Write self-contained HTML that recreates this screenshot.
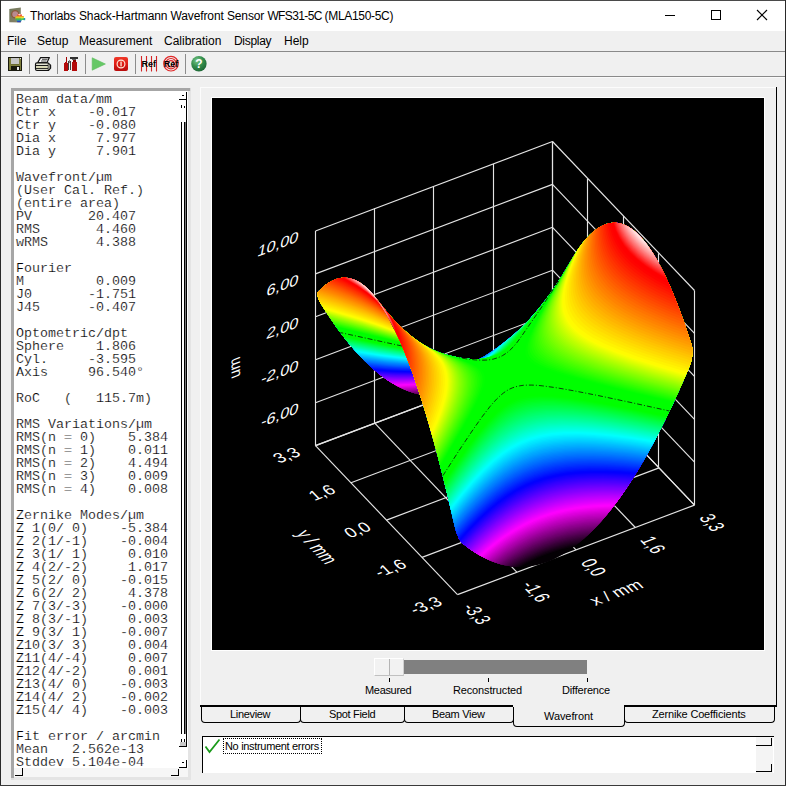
<!DOCTYPE html>
<html><head><meta charset="utf-8"><title>Thorlabs Shack-Hartmann Wavefront Sensor WFS31-5C (MLA150-5C)</title>
<style>
html,body{margin:0;padding:0;}
body{width:786px;height:786px;position:relative;overflow:hidden;background:#f0f0f0;font-family:"Liberation Sans",sans-serif;color:#000;}
.a{position:absolute;}
.k{position:absolute;background:#000;}
#title{left:1px;top:1px;width:784px;height:30px;background:#fff;}
#ttext{left:30px;top:9px;font-size:12px;line-height:14px;letter-spacing:-0.23px;white-space:nowrap;}
.menu{top:34px;font-size:12px;line-height:14px;white-space:nowrap;}
.vsep{position:absolute;top:54px;width:1px;height:20px;background:#8c8c8c;}
#txt{left:16px;top:93px;margin:0;font:13.33px/13px "Liberation Mono",monospace;white-space:pre;color:#000;-webkit-text-stroke:0.2px #fff;}
.lab{position:absolute;font-size:11px;line-height:12px;letter-spacing:-0.32px;white-space:nowrap;color:#000;}
.tab{position:absolute;top:707px;height:16px;border:1px solid #000;border-top:none;border-radius:0 0 4px 4px;box-sizing:border-box;}
</style></head><body>
<!-- window frame -->
<div class="a" style="left:0;top:0;width:786px;height:1px;background:#4a4a4a"></div>
<div class="a" style="left:0;top:0;width:1px;height:786px;background:#2a2a2a"></div>
<div class="a" style="left:785px;top:0;width:1px;height:786px;background:#2a2a2a"></div>
<div class="a" style="left:0;top:785px;width:786px;height:1px;background:#3a3a3a"></div>
<!-- title bar -->
<div id="title" class="a"></div>
<svg class="a" style="left:8px;top:6px" width="18" height="18" viewBox="8 6 18 18">
<defs><linearGradient id="ig" x1="0" y1="0" x2="1" y2="1"><stop offset="0" stop-color="#6f775a"/><stop offset="1" stop-color="#8a8468"/></linearGradient></defs>
<path d="M9.3 9 L20.8 7.4 V22.6 L9.3 22.2 Z" fill="url(#ig)"/>
<circle cx="15.2" cy="14.2" r="3.6" fill="#b98a90" stroke="#8a5a3a" stroke-width="1.3"/>
<ellipse cx="19.5" cy="15.2" rx="2.6" ry="1.2" fill="#f05030"/>
<ellipse cx="19.5" cy="14.6" rx="1.3" ry="0.8" fill="#ffd0c0"/>
<rect x="15.4" y="16" width="8.4" height="1.4" fill="#f0a020"/>
<rect x="15.4" y="17.2" width="8.6" height="1.4" fill="#e8e020"/>
<rect x="15.8" y="18.4" width="8.4" height="1.5" fill="#40c040"/>
<rect x="23.6" y="18" width="1.6" height="2.2" fill="#20a0b0"/>
<rect x="16.6" y="19.8" width="5" height="1.4" fill="#30a0a0"/>
<rect x="17.2" y="20.8" width="3.6" height="1.4" fill="#2840c0"/>
</svg>

<div id="ttext" class="a"><span style="letter-spacing:-0.12px">Thorlabs Shack-Hartmann Wavefront Sensor </span><span style="letter-spacing:-0.61px">WFS31-5C </span><span style="letter-spacing:-0.32px">(MLA150-5C)</span></div>
<svg class="a" style="left:640px;top:1px" width="145" height="30" viewBox="0 0 145 30">
<g stroke="#000" stroke-width="1" fill="none" shape-rendering="crispEdges">
<line x1="25" y1="14.5" x2="35" y2="14.5"/>
<rect x="71.5" y="9.5" width="9" height="9"/>
</g>
<g stroke="#000" stroke-width="1.1" fill="none"><line x1="117" y1="9" x2="127" y2="19"/><line x1="127" y1="9" x2="117" y2="19"/></g>
</svg>
<!-- menu -->
<div class="a menu" style="left:7px">File</div>
<div class="a menu" style="left:37px">Setup</div>
<div class="a menu" style="left:79px">Measurement</div>
<div class="a menu" style="left:164px">Calibration</div>
<div class="a menu" style="left:234px;letter-spacing:-0.3px">Display</div>
<div class="a menu" style="left:284px">Help</div>
<div class="a" style="left:1px;top:51px;width:784px;height:1px;background:#8a8a8a"></div>
<div class="a" style="left:1px;top:76px;width:784px;height:1px;background:#8a8a8a"></div>
<div class="a" style="left:1px;top:77px;width:784px;height:1px;background:#fafafa"></div>
<!-- toolbar -->
<div class="vsep" style="left:29px"></div>
<div class="vsep" style="left:57px"></div>
<div class="vsep" style="left:85px"></div>
<div class="vsep" style="left:135px"></div>
<div class="vsep" style="left:185px"></div>
<svg class="a" style="left:0;top:52px" width="220" height="24" viewBox="0 52 220 24">
<!-- floppy -->
<g shape-rendering="crispEdges">
<rect x="8" y="57" width="14" height="14" fill="#1a1a10"/>
<rect x="9" y="58" width="12" height="12" fill="#7e7e3c"/>
<rect x="11" y="58" width="8" height="6" fill="#c4c4c4"/>
<rect x="11" y="64" width="8" height="1" fill="#6a6a30"/>
<rect x="11" y="66" width="9" height="4" fill="#16160c"/>
<rect x="17" y="67" width="2" height="3" fill="#e8e8e8"/>
<rect x="20" y="58" width="1" height="1" fill="#e8e8e8"/>
</g>
<!-- printer -->
<g stroke="#111" stroke-width="1.15" fill="#fff" stroke-linejoin="round">
<path d="M37.8 62.5 L40.6 57.6 H49.4 L47 62.5 Z"/>
<path d="M42 59.3 L47.6 59.3 M41 61 L46.6 61" fill="none" stroke="#333" stroke-width="0.9"/>
<path d="M36.8 62.8 H48 L50.6 65.2 V68.2 L48.4 70.5 H37 Q35.5 70.5 35.5 69 V64.3 Q35.5 62.8 36.8 62.8 Z" fill="#e4e4d4"/>
<path d="M36 65.5 H48 M36 68.6 H48" fill="none" stroke-width="0.95"/>
<path d="M36.5 67.1 H47.6" stroke="#d0d098" stroke-width="1" fill="none"/>
<path d="M48.2 63 V70.3" fill="none" stroke-width="0.7"/>
<path d="M49.4 64.6 V68.8" fill="none" stroke="#555" stroke-width="0.7"/>
</g>
<!-- tools -->
<g shape-rendering="crispEdges">
<rect x="66" y="57" width="1" height="7" fill="#a00000"/>
<rect x="64" y="63" width="4" height="8" fill="#b40a0a"/>
<rect x="65" y="62" width="2" height="1" fill="#b40a0a"/>
<rect x="72" y="62" width="5" height="9" fill="#b40a0a"/>
<rect x="73" y="60" width="3" height="2" fill="#8a0000"/>
<rect x="70" y="57" width="8" height="2" fill="#303030"/>
<rect x="72" y="59" width="4" height="1" fill="#606060"/>
<rect x="68" y="61" width="1" height="9" fill="#404040"/>
<rect x="70" y="61" width="1" height="9" fill="#404040"/>
<rect x="69" y="60" width="1" height="3" fill="#808080"/>
<rect x="69" y="64" width="1" height="6" fill="#f4f4f4"/>
</g>
<!-- play -->
<path d="M92.2 57.8 L105.4 64 L92.2 70.2 Z" fill="#66c866" stroke="#5cbc5c" stroke-width="0.6"/>
<!-- stop -->
<defs><linearGradient id="rg" x1="0" y1="0" x2="0" y2="1"><stop offset="0" stop-color="#f03a2a"/><stop offset="0.5" stop-color="#de1c14"/><stop offset="1" stop-color="#b80c0c"/></linearGradient>
<radialGradient id="gg" cx="0.38" cy="0.3" r="0.75"><stop offset="0" stop-color="#7cc88c"/><stop offset="0.5" stop-color="#35904e"/><stop offset="1" stop-color="#1c6434"/></radialGradient></defs>
<rect x="114" y="57" width="14" height="14" rx="2" fill="url(#rg)"/>
<circle cx="121" cy="64" r="3.9" fill="none" stroke="#ffe9d8" stroke-width="1.15"/>
<rect x="120.4" y="61.6" width="1.3" height="4.8" fill="#ffe9d8"/>
<!-- Ref lines -->
<g stroke="#d42424" stroke-width="1.1"><line x1="141.5" y1="56" x2="141.5" y2="71.5"/><line x1="146.5" y1="56" x2="146.5" y2="71.5"/><line x1="151.5" y1="56" x2="151.5" y2="71.5"/><line x1="156.5" y1="56" x2="156.5" y2="71.5"/></g>
<text x="141.6" y="66.8" font-family="Liberation Sans, sans-serif" font-weight="bold" font-size="9" fill="#000">Ref</text>
<!-- Ref target -->
<g fill="none" stroke="#e02828" stroke-width="1.2"><circle cx="171" cy="63.7" r="7.3"/><circle cx="171" cy="63.7" r="5.2"/><circle cx="171" cy="63.7" r="3.1"/></g>
<text x="163.8" y="66.8" font-family="Liberation Sans, sans-serif" font-weight="bold" font-size="9" fill="#000">Ref</text>
<!-- help -->
<circle cx="198.9" cy="63.8" r="7.7" fill="url(#gg)"/>
<text x="198.9" y="68.2" text-anchor="middle" font-family="Liberation Sans, sans-serif" font-weight="bold" font-size="12" fill="#fff">?</text>
</svg>

<!-- left text panel -->
<div class="a" style="left:11px;top:88px;width:180px;height:692px;background:#dcdcdc"></div>
<div class="a" style="left:11px;top:88px;width:179px;height:690px;background:#a6a6a6"></div>
<div class="a" style="left:14px;top:91px;width:177px;height:689px;background:#e4e4e4"></div>
<div class="a" style="left:14px;top:91px;width:174px;height:686px;background:#fff"></div>
<div class="a" style="left:14px;top:768px;width:174px;height:9px;background:#f6f6f6"></div>
<pre id="txt" class="a">Beam data/mm
Ctr x    -0.017
Ctr y    -0.080
Dia x     7.977
Dia y     7.901

Wavefront/µm
(User Cal. Ref.)
(entire area)
PV       20.407
RMS       4.460
wRMS      4.388

Fourier
M         0.009
J0       -1.751
J45      -0.407

Optometric/dpt
Sphere    1.806
Cyl.     -3.595
Axis     96.540°

RoC   (   115.7m)

RMS Variations/µm
RMS(n = 0)    5.384
RMS(n = 1)    0.011
RMS(n = 2)    4.494
RMS(n = 3)    0.009
RMS(n = 4)    0.008

Zernike Modes/µm
Z 1(0/ 0)    -5.384
Z 2(1/-1)    -0.004
Z 3(1/ 1)     0.010
Z 4(2/-2)     1.017
Z 5(2/ 0)    -0.015
Z 6(2/ 2)     4.378
Z 7(3/-3)    -0.000
Z 8(3/-1)     0.003
Z 9(3/ 1)    -0.007
Z10(3/ 3)     0.004
Z11(4/-4)     0.007
Z12(4/-2)     0.001
Z13(4/ 0)    -0.003
Z14(4/ 2)    -0.002
Z15(4/ 4)    -0.003

Fit error / arcmin
Mean   2.562e-13
Stddev 5.104e-04</pre>
<!-- scrollbar fragments -->
<div class="k" style="left:186px;top:92px;width:1px;height:655px"></div>
<div class="k" style="left:179px;top:99px;width:8px;height:1px"></div>
<div class="k" style="left:182px;top:95px;width:2px;height:1px"></div>
<div class="k" style="left:181px;top:105px;width:1px;height:3px"></div>
<div class="k" style="left:184px;top:106px;width:1px;height:2px"></div>
<div class="k" style="left:181px;top:122px;width:1px;height:612px"></div>
<div class="k" style="left:184px;top:122px;width:1px;height:612px"></div><div class="a" style="left:185px;top:122px;width:1px;height:612px;background:#777"></div>
<div class="k" style="left:181px;top:739px;width:1px;height:3px"></div>
<div class="k" style="left:184px;top:739px;width:1px;height:3px"></div>
<div class="a" style="left:180px;top:742px;width:6px;height:4px;background:#c8c8c8"></div>
<div class="k" style="left:179px;top:746px;width:8px;height:1px"></div>
<div class="k" style="left:186px;top:760px;width:1px;height:8px"></div>
<div class="k" style="left:179px;top:767px;width:8px;height:1px"></div>
<div class="k" style="left:182px;top:762px;width:2px;height:1px"></div>
<div class="k" style="left:178px;top:769px;width:1px;height:7px"></div>
<div class="k" style="left:171px;top:775px;width:8px;height:1px"></div>
<div class="k" style="left:22px;top:768px;width:1px;height:8px"></div>
<div class="k" style="left:15px;top:775px;width:8px;height:1px"></div>
<!-- tab control -->
<div class="a" style="left:200px;top:87px;width:577px;height:1px;background:#fcfcfc"></div>
<div class="a" style="left:200px;top:87px;width:1px;height:619px;background:#fcfcfc"></div>
<div class="k" style="left:776px;top:87px;width:1px;height:620px"></div>
<div class="a" style="left:211px;top:97px;width:554px;height:554px;background:#fff"></div>
<svg width="552" height="552" viewBox="0 0 552 552" style="position:absolute;left:212px;top:98px;background:#000">
<g stroke="#e4e4e4" stroke-width="1.15" fill="none"><line x1="103.5" y1="347.6" x2="103.5" y2="133.0"/><line x1="482.5" y1="407.1" x2="482.5" y2="192.5"/><line x1="245.5" y1="496.6" x2="103.5" y2="347.6"/><line x1="245.5" y1="496.6" x2="482.5" y2="407.1"/><line x1="162.5" y1="325.2" x2="162.5" y2="110.6"/><line x1="446.5" y1="369.9" x2="446.5" y2="155.3"/><line x1="304.8" y1="474.2" x2="162.7" y2="325.2"/><line x1="210.0" y1="459.4" x2="447.0" y2="369.9"/><line x1="221.5" y1="302.8" x2="221.5" y2="88.2"/><line x1="411.5" y1="332.6" x2="411.5" y2="118.0"/><line x1="364.0" y1="451.9" x2="222.0" y2="302.8"/><line x1="174.5" y1="422.1" x2="411.5" y2="332.6"/><line x1="281.5" y1="280.5" x2="281.5" y2="65.9"/><line x1="375.5" y1="295.3" x2="375.5" y2="80.7"/><line x1="423.3" y1="429.5" x2="281.2" y2="280.5"/><line x1="139.0" y1="384.8" x2="376.0" y2="295.3"/><line x1="340.5" y1="258.1" x2="340.5" y2="43.5"/><line x1="340.5" y1="258.1" x2="340.5" y2="43.5"/><line x1="482.5" y1="407.1" x2="340.5" y2="258.1"/><line x1="103.5" y1="347.6" x2="340.5" y2="258.1"/><line x1="103.5" y1="347.6" x2="340.5" y2="258.1"/><line x1="340.5" y1="258.1" x2="482.5" y2="407.1"/><line x1="103.5" y1="304.7" x2="340.5" y2="215.2"/><line x1="340.5" y1="215.2" x2="482.5" y2="364.2"/><line x1="103.5" y1="261.7" x2="340.5" y2="172.2"/><line x1="340.5" y1="172.2" x2="482.5" y2="321.3"/><line x1="103.5" y1="218.8" x2="340.5" y2="129.3"/><line x1="340.5" y1="129.3" x2="482.5" y2="278.4"/><line x1="103.5" y1="175.9" x2="340.5" y2="86.4"/><line x1="340.5" y1="86.4" x2="482.5" y2="235.4"/><line x1="103.5" y1="133.0" x2="340.5" y2="43.5"/><line x1="340.5" y1="43.5" x2="482.5" y2="192.5"/></g>
<g transform="scale(0.1)">
<path fill="#040004" d="M1063 1936l-6 10l-1 8l1 26l14 44l22 38l64 101l107 155l97 125l97 113l96 99l97 87l86 65l86 56l85 45l86 34l86 24l86 14l86 4l75-6l86-16l86-26l86-37l86-47l86-58l86-68l85-78l76-77l96-111l86-109l86-120l86-130l54-100l98-218l45-90l38-70l-107 178l-105 157l-104 138l-106 123l-55 58l-54 51l-125 106l-74 57l-68 48l-62 40l-57 32l-67 2l-73-6l-87-14l-88-20l-70-22l-67-26l-65-31l-63-37l-61-42l-60-47l-60-53l-59-56l-94-103l-57-70l-85-109l-64-69l-32-28l-32-24l-32-20l-32-16l-45-15l-44-7l-52 2l-45 11l-44 19l-45 27l-45 35z"/>
<path fill="#0c000c" d="M2676 2611l-67 2l-73-6l-87-14l-88-20l-70-22l-67-26l-65-31l-63-37l-61-42l-60-47l-60-53l-59-56l-94-103l-57-70l-87-111l-62-67l-32-29l-33-24l-34-21l-32-15l-48-15l-47-6l-45 3l-48 12l-49 22l-47 31l-54 46l-24 24l-6 10l-2 15l2 19l5 22l20 42l86 135l90 130l86 113l90 107l86 93l90 85l75 62l79 57l75 46l79 40l79 31l76 22l79 14l78 5l120-29l113-35l111-42l106-48l101-54l85-70l83-78l100-108l101-122l100-136l97-144l38-64l27-53l98-218l41-82l42-78l-107 178l-105 157l-104 138l-106 123l-55 58l-54 51l-125 106l-74 57l-68 48l-62 40z"/>
<path fill="#140014" d="M2676 2611l-67 2l-73-6l-87-14l-88-20l-70-22l-67-26l-65-31l-63-37l-61-42l-60-47l-60-53l-59-56l-94-103l-57-70l-87-111l-62-67l-32-29l-33-24l-34-21l-32-15l-48-15l-47-6l-45 3l-48 12l-49 22l-47 31l-54 46l-24 24l-6 10l-2 15l2 19l5 22l20 42l82 130l87 125l86 114l86 104l86 94l90 86l75 64l76 55l75 48l79 42l75 31l79 24l76 15l75 7l116-26l115-33l109-40l103-45l76-38l74-42l68-56l68-64l100-106l101-121l100-134l101-149l31-50l28-52l25-50l88-199l41-81l40-74l-107 178l-105 157l-104 138l-106 123l-55 58l-54 51l-125 106l-74 57l-68 48l-62 40z"/>
<path fill="#1c001c" d="M2676 2611l-67 2l-73-6l-87-14l-88-20l-70-22l-67-26l-65-31l-63-37l-61-42l-60-47l-60-53l-59-56l-94-103l-57-70l-87-111l-62-67l-32-29l-33-24l-34-21l-32-15l-48-15l-47-6l-45 3l-48 12l-49 22l-47 31l-54 46l-24 24l-6 10l-2 15l2 19l5 22l20 42l82 130l79 115l87 115l86 105l86 94l86 84l75 65l76 57l75 49l76 41l75 33l75 25l76 16l74 9l113-24l114-32l106-36l102-42l99-49l98-55l105-95l104-108l101-120l100-133l101-148l38-61l28-52l25-50l88-199l41-81l40-74l-107 178l-105 157l-104 138l-106 123l-55 58l-54 51l-125 106l-74 57l-68 48l-62 40z"/>
<path fill="#240024" d="M2676 2611l-67 2l-73-6l-87-14l-88-20l-70-22l-67-26l-65-31l-63-37l-61-42l-60-47l-60-53l-59-56l-94-103l-57-70l-87-111l-62-67l-32-29l-33-24l-34-21l-32-15l-48-15l-47-6l-45 3l-48 12l-49 22l-47 31l-54 46l-24 24l-6 10l-2 15l2 19l5 22l20 42l75 119l79 116l83 111l86 106l86 96l86 85l72 63l75 59l76 50l75 43l72 33l75 26l76 19l74 11l112-23l109-29l104-34l99-39l118-56l118-66l27-22l57-52l104-107l101-118l104-137l101-147l45-72l28-52l25-50l88-199l41-81l40-74l-107 178l-105 157l-104 138l-106 123l-55 58l-54 51l-125 106l-74 57l-68 48l-62 40z"/>
<path fill="#2c002c" d="M2676 2611l-67 2l-73-6l-87-14l-88-20l-70-22l-67-26l-65-31l-63-37l-61-42l-60-47l-60-53l-59-56l-94-103l-57-70l-87-111l-62-67l-32-29l-33-24l-34-21l-32-15l-48-15l-47-6l-45 3l-48 12l-49 22l-47 31l-54 46l-24 24l-6 10l-2 15l2 19l5 22l14 32l70 113l83 121l83 113l86 107l82 93l86 86l72 64l76 60l71 49l76 44l72 35l75 28l72 19l74 13l113-22l103-26l101-31l100-38l110-49l106-57l70-43l49-43l104-106l104-120l104-136l100-146l53-83l28-52l25-50l88-199l41-81l40-74l-107 178l-105 157l-104 138l-106 123l-55 58l-54 51l-125 106l-74 57l-68 48l-62 40z"/>
<path fill="#340034" d="M2676 2611l-67 2l-73-6l-87-14l-88-20l-70-22l-67-26l-65-31l-63-37l-61-42l-60-47l-60-53l-59-56l-94-103l-57-70l-87-111l-62-67l-32-29l-33-24l-34-21l-32-15l-48-15l-47-6l-45 3l-48 12l-49 22l-47 31l-54 46l-24 24l-6 10l-2 15l2 19l14 44l65 106l89 133l83 113l83 103l82 94l86 87l72 65l72 58l72 50l75 45l72 36l72 28l71 21l73 14l111-21l104-24l99-30l98-35l100-44l99-50l125-74l24-22l104-105l105-120l104-135l104-150l56-88l28-52l25-50l88-199l41-81l40-74l-107 178l-105 157l-104 138l-106 123l-55 58l-54 51l-125 106l-74 57l-68 48l-62 40z"/>
<path fill="#3c003c" d="M2676 2611l-67 2l-73-6l-87-14l-88-20l-70-22l-67-26l-65-31l-63-37l-61-42l-60-47l-60-53l-59-56l-94-103l-57-70l-87-111l-62-67l-32-29l-33-24l-34-21l-32-15l-48-15l-47-6l-45 3l-48 12l-49 22l-47 31l-54 46l-24 24l-6 10l-2 15l2 19l14 44l61 100l90 134l82 113l83 104l83 94l82 84l68 63l72 59l72 51l72 44l72 37l71 30l72 22l71 15l105-18l105-24l100-28l95-33l95-39l91-44l89-49l88-55l105-104l104-119l108-139l104-149l53-83l35-63l25-50l88-199l41-81l40-74l-107 178l-105 157l-104 138l-106 123l-55 58l-54 51l-125 106l-74 57l-68 48l-62 40z"/>
<path fill="#440044" d="M2676 2611l-67 2l-73-6l-87-14l-88-20l-70-22l-67-26l-65-31l-63-37l-61-42l-60-47l-60-53l-59-56l-94-103l-57-70l-87-111l-62-67l-32-29l-33-24l-34-21l-32-15l-48-15l-47-6l-45 3l-48 12l-49 22l-47 31l-54 46l-24 24l-6 10l-2 15l2 19l14 44l57 95l87 129l79 109l82 105l83 95l82 86l69 64l71 59l72 53l72 45l68 36l72 32l72 24l70 16l111-19l105-23l104-29l100-34l98-40l94-46l92-51l94-60l101-102l104-120l104-135l104-151l53-83l28-52l25-50l88-199l41-81l40-74l-107 178l-105 157l-104 138l-106 123l-55 58l-54 51l-125 106l-74 57l-68 48l-62 40z"/>
<path fill="#4c004c" d="M2676 2611l-67 2l-73-6l-87-14l-88-20l-70-22l-67-26l-65-31l-63-37l-61-42l-60-47l-60-53l-59-56l-94-103l-57-70l-87-111l-62-67l-32-29l-33-24l-34-21l-32-15l-48-15l-47-6l-45 3l-48 12l-49 22l-47 31l-54 46l-24 24l-6 10l-2 15l2 19l14 44l54 89l82 125l79 110l83 105l83 96l82 87l68 64l72 61l68 50l72 47l68 37l72 32l68 24l70 18l117-19l109-23l109-30l103-35l101-42l97-48l95-53l97-63l100-103l105-123l104-137l100-148l42-66l28-52l25-50l88-199l41-81l40-74l-107 178l-105 157l-104 138l-106 123l-55 58l-54 51l-125 106l-74 57l-68 48l-62 40z"/>
<path fill="#540054" d="M2676 2611l-67 2l-73-6l-87-14l-88-20l-70-22l-67-26l-65-31l-63-37l-61-42l-60-47l-60-53l-59-56l-94-103l-57-70l-87-111l-62-67l-32-29l-33-24l-34-21l-32-15l-48-15l-47-6l-45 3l-48 12l-49 22l-47 31l-54 46l-24 24l-6 10l-2 15l2 19l14 44l50 84l83 124l79 111l82 106l79 92l83 88l68 65l68 58l69 52l71 47l69 39l68 32l68 25l70 19l123-19l112-24l114-31l106-36l104-43l100-50l98-56l99-64l101-106l100-120l101-134l100-149l35-55l28-52l25-50l88-199l41-81l40-74l-107 178l-105 157l-104 138l-106 123l-55 58l-54 51l-125 106l-74 57l-68 48l-62 40z"/>
<path fill="#5c005c" d="M2676 2611l-67 2l-73-6l-87-14l-88-20l-70-22l-67-26l-65-31l-63-37l-61-42l-60-47l-60-53l-59-56l-94-103l-57-70l-87-111l-62-67l-32-29l-33-24l-34-21l-32-15l-48-15l-47-6l-45 3l-48 12l-49 22l-47 31l-54 46l-24 24l-6 10l-2 15l2 19l14 44l57 95l83 124l79 109l83 106l82 95l83 86l72 68l71 59l72 53l72 45l75 40l79 33l85 26l24-3l125-20l114-24l109-31l107-37l104-44l101-50l99-58l101-67l98-105l100-121l101-136l97-144l27-44l41-78l98-218l41-82l42-78l-107 178l-105 157l-104 138l-106 123l-55 58l-54 51l-125 106l-74 57l-68 48l-62 40z"/>
<path fill="#640064" d="M2676 2611l-67 2l-73-6l-87-14l-88-20l-70-22l-67-26l-65-31l-63-37l-61-42l-60-47l-60-53l-59-56l-94-103l-57-70l-87-111l-62-67l-32-29l-33-24l-34-21l-32-15l-48-15l-47-6l-45 3l-48 12l-49 22l-47 31l-54 46l-24 24l-6 10l-2 15l2 19l14 44l57 95l87 129l79 109l82 105l83 95l82 86l72 67l72 59l72 52l75 47l79 41l83 33l57 17l36-4l123-19l117-25l112-31l110-38l108-46l102-52l100-59l102-69l99-108l97-119l100-137l97-146l31-52l27-53l98-218l41-82l42-78l-107 178l-105 157l-104 138l-106 123l-55 58l-54 51l-125 106l-74 57l-68 48l-62 40z"/>
<path fill="#6c006c" d="M2676 2611l-67 2l-73-6l-87-14l-88-20l-70-22l-67-26l-65-31l-63-37l-61-42l-60-47l-60-53l-59-56l-94-103l-57-70l-87-111l-62-67l-32-29l-33-24l-34-21l-32-15l-48-15l-47-6l-45 3l-48 12l-49 22l-47 31l-54 46l-24 24l-6 10l-2 15l2 19l14 44l61 100l86 129l83 114l82 104l83 94l83 85l71 66l76 61l75 54l75 45l90 44l90 32l12 4l56-7l127-20l116-25l113-32l109-39l107-46l102-52l102-62l104-71l93-102l97-120l97-133l97-146l54-100l98-218l41-82l42-78l-107 178l-105 157l-104 138l-106 123l-55 58l-54 51l-125 106l-74 57l-68 48l-62 40z"/>
<path fill="#740074" d="M2676 2611l-67 2l-73-6l-87-14l-88-20l-70-22l-67-26l-65-31l-63-37l-61-42l-60-47l-60-53l-59-56l-94-103l-57-70l-87-111l-62-67l-32-29l-33-24l-34-21l-32-15l-48-15l-47-6l-45 3l-48 12l-49 22l-47 31l-54 46l-24 24l-6 10l-2 15l2 19l14 44l61 100l90 134l82 113l83 104l83 94l82 84l75 69l76 61l75 53l79 46l83 40l85 30l70-8l124-19l122-26l116-33l109-39l107-47l107-56l102-62l104-73l92-102l93-117l94-128l93-141l54-100l98-218l41-82l42-78l-107 178l-105 157l-104 138l-106 123l-55 58l-54 51l-125 106l-74 57l-68 48l-62 40z"/>
<path fill="#7c007c" d="M2676 2611l-67 2l-73-6l-87-14l-88-20l-70-22l-67-26l-65-31l-63-37l-61-42l-60-47l-60-53l-59-56l-94-103l-57-70l-87-111l-62-67l-32-29l-33-24l-34-21l-32-15l-48-15l-47-6l-45 3l-48 12l-49 22l-47 31l-54 46l-24 24l-6 10l-2 15l2 19l14 44l65 106l89 133l83 113l83 103l82 94l86 87l76 68l79 63l79 54l79 45l71 33l70 25l87-9l127-20l120-26l116-33l113-41l106-48l107-56l105-65l105-74l90-102l89-113l90-125l90-135l54-100l98-218l41-82l42-78l-107 178l-105 157l-104 138l-106 123l-55 58l-54 51l-125 106l-74 57l-68 48l-62 40z"/>
<path fill="#830083" d="M2676 2611l-67 2l-73-6l-87-14l-88-20l-70-22l-67-26l-65-31l-63-37l-61-42l-60-47l-60-53l-59-56l-94-103l-57-70l-87-111l-62-67l-32-29l-33-24l-34-21l-32-15l-48-15l-47-6l-45 3l-48 12l-49 22l-47 31l-54 46l-24 24l-6 10l-2 15l2 19l5 22l14 32l70 113l83 121l83 113l86 107l82 93l86 86l79 70l79 62l79 52l83 46l57 26l58 22l102-11l131-21l121-27l115-33l112-41l110-49l106-57l107-67l105-76l89-102l87-110l86-120l86-130l54-100l98-218l41-82l42-78l-107 178l-105 157l-104 138l-106 123l-55 58l-54 51l-125 106l-74 57l-68 48l-62 40z"/>
<path fill="#8b008b" d="M2676 2611l-67 2l-73-6l-87-14l-88-20l-70-22l-67-26l-65-31l-63-37l-61-42l-60-47l-60-53l-59-56l-94-103l-57-70l-87-111l-62-67l-32-29l-33-24l-34-21l-32-15l-48-15l-47-6l-45 3l-48 12l-49 22l-47 31l-54 46l-24 24l-6 10l-2 15l2 19l5 22l20 42l75 119l76 111l82 112l86 106l83 92l86 87l79 69l83 64l82 54l83 44l93 39l116-12l133-21l123-28l119-35l111-41l109-50l108-58l108-69l105-76l85-99l82-105l86-121l83-125l54-100l98-218l41-82l42-78l-107 178l-105 157l-104 138l-106 123l-55 58l-54 51l-125 106l-74 57l-68 48l-62 40z"/>
<path fill="#930093" d="M2676 2611l-67 2l-73-6l-87-14l-88-20l-70-22l-67-26l-65-31l-63-37l-61-42l-60-47l-60-53l-59-56l-94-103l-57-70l-87-111l-62-67l-32-29l-33-24l-34-21l-32-15l-48-15l-47-6l-45 3l-48 12l-49 22l-47 31l-54 46l-24 24l-6 10l-2 15l2 19l5 22l20 42l75 119l79 116l83 111l86 106l86 96l86 85l83 72l82 62l83 53l86 45l67 28l133-14l130-20l125-28l118-35l115-43l112-51l109-60l105-69l109-79l80-94l82-107l83-116l79-120l54-100l98-218l41-82l42-78l-107 178l-105 157l-104 138l-106 123l-55 58l-54 51l-125 106l-74 57l-68 48l-62 40z"/>
<path fill="#9b009b" d="M2676 2611l-67 2l-73-6l-87-14l-88-20l-70-22l-67-26l-65-31l-63-37l-61-42l-60-47l-60-53l-59-56l-94-103l-57-70l-87-111l-62-67l-32-29l-33-24l-34-21l-32-15l-48-15l-47-6l-45 3l-48 12l-49 22l-47 31l-54 46l-24 24l-6 10l-2 15l2 19l5 22l20 42l82 130l79 115l83 110l86 106l86 95l86 84l83 71l86 64l86 53l86 43l42 17l149-14l131-21l126-28l121-36l115-44l110-52l110-61l107-70l109-81l76-90l79-103l79-111l79-120l54-100l98-218l41-82l42-78l-107 178l-105 157l-104 138l-106 123l-55 58l-54 51l-125 106l-74 57l-68 48l-62 40z"/>
<path fill="#a300a3" d="M2676 2611l-67 2l-73-6l-87-14l-88-20l-70-22l-67-26l-65-31l-63-37l-61-42l-60-47l-60-53l-59-56l-94-103l-57-70l-87-111l-62-67l-32-29l-33-24l-34-21l-32-15l-48-15l-47-6l-45 3l-48 12l-49 22l-47 31l-54 46l-24 24l-6 10l-2 15l2 19l5 22l20 42l82 130l83 120l86 115l86 104l86 94l87 83l86 74l86 62l86 52l86 42l20 8l163-15l136-22l125-28l121-37l114-44l111-52l111-63l108-71l111-83l76-92l79-104l79-112l74-115l48-89l66-149l43-92l72-137l-107 178l-105 157l-104 138l-106 123l-55 58l-54 51l-125 106l-74 57l-68 48l-62 40z"/>
<path fill="#ab00ab" d="M2676 2611l-67 2l-73-6l-87-14l-88-20l-70-22l-67-26l-65-31l-63-37l-61-42l-60-47l-60-53l-59-56l-94-103l-57-70l-87-111l-62-67l-32-29l-33-24l-34-21l-32-15l-48-15l-47-6l-45 3l-48 12l-49 22l-47 31l-54 46l-24 24l-6 10l-2 15l2 19l5 22l20 42l82 130l87 125l86 114l86 104l86 94l86 83l86 72l90 65l86 51l88 42l92-7l86-9l132-21l128-29l121-37l118-45l114-55l110-63l109-73l111-85l76-92l79-105l79-114l71-110l53-102l49-115l46-97l74-142l-107 178l-105 157l-104 138l-106 123l-55 58l-54 51l-125 106l-74 57l-68 48l-62 40z"/>
<path fill="#b300b3" d="M2676 2611l-67 2l-73-6l-87-14l-88-20l-70-22l-67-26l-65-31l-63-37l-61-42l-60-47l-60-53l-59-56l-94-103l-57-70l-87-111l-62-67l-32-29l-33-24l-34-21l-32-15l-48-15l-47-6l-45 3l-48 12l-49 22l-47 31l-54 46l-24 24l-6 10l-2 15l2 19l5 22l20 42l86 135l86 125l86 114l86 103l87 93l89 86l83 69l83 60l82 49l85 41l100-7l91-10l135-21l130-30l120-36l117-46l114-55l114-66l109-74l112-86l73-90l75-100l75-109l71-110l53-102l49-115l46-97l74-142l-107 178l-105 157l-104 138l-106 123l-55 58l-54 51l-125 106l-74 57l-68 48l-62 40z"/>
<path fill="#bb00bb" d="M2676 2611l-67 2l-73-6l-87-14l-88-20l-70-22l-67-26l-65-31l-63-37l-61-42l-60-47l-60-53l-59-56l-94-103l-57-70l-87-111l-62-67l-32-29l-33-24l-34-21l-32-15l-48-15l-47-6l-45 3l-48 12l-49 22l-47 31l-54 46l-24 24l-6 10l-2 15l2 19l5 22l20 42l86 135l90 130l86 113l90 107l86 93l90 85l79 65l79 57l78 47l78 39l109-7l100-11l136-22l128-29l124-39l117-46l113-56l113-66l113-76l110-87l73-92l72-96l76-110l63-99l53-102l49-115l46-97l74-142l-107 178l-105 157l-104 138l-106 123l-55 58l-54 51l-125 106l-74 57l-68 48l-62 40z"/>
<path fill="#c300c3" d="M2676 2611l-67 2l-73-6l-87-14l-88-20l-70-22l-67-26l-65-31l-63-37l-61-42l-60-47l-60-53l-59-56l-94-103l-57-70l-87-111l-62-67l-32-29l-33-24l-34-21l-32-15l-48-15l-47-6l-45 3l-48 12l-49 22l-47 31l-54 46l-24 24l-6 10l-2 15l2 19l5 22l20 42l90 141l89 129l86 113l90 106l86 92l90 85l76 62l75 54l75 46l75 38l111-7l108-11l139-22l127-29l122-38l120-48l117-57l112-66l115-79l112-89l71-89l68-92l72-105l63-99l53-102l49-115l46-97l74-142l-107 178l-105 157l-104 138l-106 123l-55 58l-54 51l-125 106l-74 57l-68 48l-62 40z"/>
<path fill="#cb00cb" d="M2676 2611l-67 2l-73-6l-87-14l-88-20l-70-22l-67-26l-65-31l-63-37l-61-42l-60-47l-60-53l-59-56l-94-103l-57-70l-87-111l-62-67l-32-29l-33-24l-34-21l-32-15l-48-15l-47-6l-45 3l-48 12l-49 22l-47 31l-54 46l-24 24l-6 10l-2 15l2 19l5 22l20 42l90 141l93 134l86 112l90 106l90 95l89 84l72 59l72 51l72 44l68 36l126-8l113-12l140-22l128-30l124-40l116-47l116-58l115-68l111-78l114-92l68-85l68-94l68-99l60-94l53-102l49-115l46-97l74-142l-107 178l-105 157l-104 138l-106 123l-55 58l-54 51l-125 106l-74 57l-68 48l-62 40z"/>
<path fill="#d300d3" d="M2676 2611l-67 2l-73-6l-87-14l-88-20l-70-22l-67-26l-65-31l-63-37l-61-42l-60-47l-60-53l-59-56l-94-103l-57-70l-87-111l-62-67l-32-29l-33-24l-34-21l-32-15l-48-15l-47-6l-45 3l-48 12l-49 22l-47 31l-54 46l-24 24l-6 10l-2 15l2 19l5 22l20 42l93 146l93 133l87 113l89 105l90 95l90 83l68 56l68 49l69 42l65 35l129-7l120-12l140-23l131-30l124-40l120-48l115-59l115-69l116-82l113-92l65-83l65-89l68-100l56-88l53-102l49-115l46-97l74-142l-107 178l-105 157l-104 138l-106 123l-55 58l-54 51l-125 106l-74 57l-68 48l-62 40z"/>
<path fill="#db00db" d="M2676 2611l-67 2l-73-6l-87-14l-88-20l-70-22l-67-26l-65-31l-63-37l-61-42l-60-47l-60-53l-59-56l-94-103l-57-70l-87-111l-62-67l-32-29l-33-24l-34-21l-32-15l-48-15l-47-6l-45 3l-48 12l-49 22l-47 31l-54 46l-24 24l-6 10l-2 15l2 19l5 22l20 42l93 146l97 138l90 117l90 104l89 94l90 82l61 50l65 46l64 41l64 34l136-7l128-13l143-23l129-30l124-40l119-49l116-59l117-71l113-81l117-96l62-80l61-85l65-95l56-88l53-102l49-115l46-97l74-142l-107 178l-105 157l-104 138l-106 123l-55 58l-54 51l-125 106l-74 57l-68 48l-62 40z"/>
<path fill="#e300e3" d="M2676 2611l-67 2l-73-6l-87-14l-88-20l-70-22l-67-26l-65-31l-63-37l-61-42l-60-47l-60-53l-59-56l-94-103l-57-70l-87-111l-62-67l-32-29l-33-24l-34-21l-32-15l-48-15l-47-6l-45 3l-48 12l-49 22l-47 31l-54 46l-24 24l-6 10l-2 15l2 19l5 22l20 42l97 151l97 138l89 116l90 104l90 94l93 84l58 46l61 44l61 39l57 32l145-7l134-14l139-22l128-30l123-40l120-49l115-58l115-70l116-82l114-94l12-11l14-17l86-115l72-105l63-99l53-102l49-115l46-97l74-142l-107 178l-105 157l-104 138l-106 123l-55 58l-54 51l-125 106l-74 57l-68 48l-62 40z"/>
<path fill="#eb00eb" d="M2676 2611l-67 2l-73-6l-87-14l-88-20l-70-22l-67-26l-65-31l-63-37l-61-42l-60-47l-60-53l-59-56l-94-103l-57-70l-87-111l-62-67l-32-29l-33-24l-34-21l-32-15l-48-15l-47-6l-45 3l-48 12l-49 22l-47 31l-54 46l-24 24l-6 10l-2 15l2 19l5 22l20 42l97 151l100 143l90 115l90 104l90 93l93 84l54 43l57 42l58 37l55 31l147-7l142-14l142-22l127-30l120-38l119-49l116-59l114-69l114-81l114-93l25-22l75-100l79-114l71-110l53-102l49-115l46-97l74-142l-107 178l-105 157l-104 138l-106 123l-55 58l-54 51l-125 106l-74 57l-68 48l-62 40z"/>
<path fill="#f300f3" d="M2676 2611l-67 2l-73-6l-87-14l-88-20l-70-22l-67-26l-65-31l-63-37l-61-42l-60-47l-60-53l-59-56l-94-103l-57-70l-87-111l-62-67l-32-29l-33-24l-34-21l-32-15l-48-15l-47-6l-45 3l-48 12l-49 22l-47 31l-54 46l-24 24l-6 10l-2 15l2 19l5 22l20 42l100 157l101 142l90 115l93 107l90 92l93 83l50 40l54 39l50 32l54 31l154-6l149-15l136-21l128-30l120-38l119-49l116-58l114-69l113-81l112-91l37-33l52-69l86-122l78-121l53-102l49-115l46-97l74-142l-107 178l-105 157l-104 138l-106 123l-55 58l-54 51l-125 106l-74 57l-68 48l-62 40z"/>
<path fill="#fb00fb" d="M2676 2611l-67 2l-73-6l-87-14l-88-20l-70-22l-67-26l-65-31l-63-37l-61-42l-60-47l-60-53l-59-56l-94-103l-57-70l-87-111l-62-67l-32-29l-33-24l-34-21l-32-15l-48-15l-47-6l-45 3l-48 12l-49 22l-47 31l-54 46l-24 24l-6 10l-2 15l2 19l5 22l20 42l100 157l104 147l90 114l94 107l89 91l94 83l97 73l98 61l162-6l153-15l139-22l125-29l120-38l119-49l112-56l113-69l112-79l113-91l48-43l29-38l93-132l85-131l53-102l49-115l46-97l74-142l-107 178l-105 157l-104 138l-106 123l-55 58l-54 51l-125 106l-74 57l-68 48l-62 40z"/>
<path fill="#fb00ff" d="M2676 2611l-67 2l-73-6l-87-14l-88-20l-70-22l-67-26l-65-31l-63-37l-61-42l-60-47l-60-53l-59-56l-94-103l-57-70l-87-111l-62-67l-32-29l-33-24l-34-21l-32-15l-48-15l-47-6l-45 3l-48 12l-49 22l-47 31l-54 46l-24 24l-6 10l-2 15l2 19l5 22l20 42l104 162l104 146l90 114l93 107l93 94l94 82l90 67l89 56l169-6l162-15l137-22l123-29l120-38l116-47l112-57l112-67l109-78l114-92l60-53l9-12l97-135l92-142l53-102l49-115l46-97l74-142l-107 178l-105 157l-104 138l-106 123l-55 58l-54 51l-125 106l-74 57l-68 48l-62 40z"/>
<path fill="#f300ff" d="M2676 2611l-67 2l-73-6l-87-14l-88-20l-70-22l-67-26l-65-31l-63-37l-61-42l-60-47l-60-53l-59-56l-94-103l-57-70l-87-111l-62-67l-32-29l-33-24l-34-21l-32-15l-48-15l-47-6l-45 3l-48 12l-49 22l-47 31l-54 46l-24 24l-6 10l-2 15l2 19l5 22l20 42l104 162l108 151l89 114l94 106l93 94l93 81l83 62l85 54l177-6l166-15l135-22l124-29l120-38l116-48l112-56l110-67l112-79l110-90l68-60l98-137l92-142l53-102l49-115l46-97l74-142l-107 178l-105 157l-104 138l-106 123l-55 58l-54 51l-125 106l-74 57l-68 48l-62 40z"/>
<path fill="#eb00ff" d="M2676 2611l-67 2l-73-6l-87-14l-88-20l-70-22l-67-26l-65-31l-63-37l-61-42l-60-47l-60-53l-59-56l-94-103l-57-70l-87-111l-62-67l-32-29l-33-24l-34-21l-32-15l-48-15l-47-6l-45 3l-48 12l-49 22l-47 31l-54 46l-24 24l-6 10l-2 15l2 19l5 22l20 42l108 167l107 151l94 117l93 105l93 93l94 81l75 56l77 49l184-5l172-16l134-21l123-29l116-37l116-48l112-56l112-68l111-78l109-89l77-69l83-116l86-130l54-100l98-218l41-82l42-78l-107 178l-105 157l-104 138l-106 123l-55 58l-54 51l-125 106l-74 57l-68 48l-62 40z"/>
<path fill="#e300ff" d="M2676 2611l-67 2l-73-6l-87-14l-88-20l-70-22l-67-26l-65-31l-63-37l-61-42l-60-47l-60-53l-59-56l-94-103l-57-70l-87-111l-62-67l-32-29l-33-24l-34-21l-32-15l-48-15l-47-6l-45 3l-48 12l-49 22l-47 31l-54 46l-24 24l-6 10l-2 15l2 19l5 22l20 42l108 167l107 151l94 117l93 105l93 93l97 84l72 53l69 45l192-5l91-7l82-9l131-21l124-29l117-36l116-48l113-57l109-65l109-78l109-88l88-79l83-116l79-120l54-100l98-218l41-82l42-78l-107 178l-105 157l-104 138l-106 123l-55 58l-54 51l-125 106l-74 57l-68 48l-62 40z"/>
<path fill="#db00ff" d="M2676 2611l-67 2l-73-6l-87-14l-88-20l-70-22l-67-26l-65-31l-63-37l-61-42l-60-47l-60-53l-59-56l-94-103l-57-70l-87-111l-62-67l-32-29l-33-24l-34-21l-32-15l-48-15l-47-6l-45 3l-48 12l-49 22l-47 31l-54 46l-24 24l-6 10l-2 15l2 19l5 22l20 42l111 173l111 154l94 117l93 104l93 92l97 82l65 48l62 40l99-1l100-3l90-7l91-10l135-22l120-28l115-37l113-46l112-57l108-65l108-76l112-91l93-84l78-112l76-114l54-100l98-218l41-82l42-78l-107 178l-105 157l-104 138l-106 123l-55 58l-54 51l-125 106l-74 57l-68 48l-62 40z"/>
<path fill="#d300ff" d="M2676 2611l-67 2l-73-6l-87-14l-88-20l-70-22l-67-26l-65-31l-63-37l-61-42l-60-47l-60-53l-59-56l-94-103l-57-70l-87-111l-62-67l-32-29l-33-24l-34-21l-32-15l-48-15l-47-6l-45 3l-48 12l-49 22l-47 31l-54 46l-24 24l-6 10l-2 15l2 19l5 22l20 42l111 173l111 154l94 117l97 108l93 91l97 82l57 42l58 38l107 0l99-4l96-6l88-10l132-21l119-28l117-37l112-46l109-54l109-66l111-78l108-88l104-94l75-107l72-109l54-100l98-218l41-82l42-78l-107 178l-105 157l-104 138l-106 123l-55 58l-54 51l-125 106l-74 57l-68 48l-62 40z"/>
<path fill="#cb00ff" d="M2676 2611l-67 2l-73-6l-87-14l-88-20l-70-22l-67-26l-65-31l-63-37l-61-42l-60-47l-60-53l-59-56l-94-103l-57-70l-87-111l-62-67l-32-29l-33-24l-34-21l-32-15l-48-15l-47-6l-45 3l-48 12l-49 22l-47 31l-54 46l-24 24l-6 10l-2 15l2 19l5 22l20 42l111 173l115 159l93 116l97 108l94 90l97 82l53 39l51 34l106 0l107-4l99-7l92-10l132-21l119-28l113-36l112-46l109-55l108-65l106-75l110-89l113-103l71-101l68-104l54-100l98-218l41-82l42-78l-107 178l-105 157l-104 138l-106 123l-55 58l-54 51l-125 106l-74 57l-68 48l-62 40z"/>
<path fill="#c300ff" d="M2676 2611l-67 2l-73-6l-87-14l-88-20l-70-22l-67-26l-65-31l-63-37l-61-42l-60-47l-60-53l-59-56l-94-103l-57-70l-87-111l-62-67l-32-29l-33-24l-34-21l-32-15l-48-15l-47-6l-45 3l-48 12l-49 22l-47 31l-54 46l-24 24l-6 10l-2 15l2 19l5 22l20 42l111 173l115 159l93 116l97 108l97 94l97 81l94 65l113 0l103-3l102-7l92-9l132-21l120-28l112-36l112-46l109-55l109-65l105-74l108-87l123-113l67-96l65-99l54-100l98-218l41-82l42-78l-107 178l-105 157l-104 138l-106 123l-55 58l-54 51l-125 106l-74 57l-68 48l-62 40z"/>
<path fill="#bb00ff" d="M2676 2611l-67 2l-73-6l-87-14l-88-20l-70-22l-67-26l-65-31l-63-37l-61-42l-60-47l-60-53l-59-56l-94-103l-57-70l-87-111l-62-67l-32-29l-33-24l-34-21l-32-15l-48-15l-47-6l-45 3l-48 12l-49 22l-47 31l-54 46l-24 24l-6 10l-2 15l2 19l5 22l20 42l115 178l118 164l94 114l96 107l97 93l97 80l79 56l121 0l106-3l101-7l99-10l130-21l120-28l112-36l108-45l109-55l106-64l105-74l107-87l131-120l64-92l61-93l54-100l98-218l41-82l42-78l-107 178l-105 157l-104 138l-106 123l-55 58l-54 51l-125 106l-74 57l-68 48l-62 40z"/>
<path fill="#b300ff" d="M2676 2611l-67 2l-73-6l-87-14l-88-20l-70-22l-67-26l-65-31l-63-37l-61-42l-60-47l-60-53l-59-56l-94-103l-57-70l-87-111l-62-67l-32-29l-33-24l-34-21l-32-15l-48-15l-47-6l-45 3l-48 12l-49 22l-47 31l-54 46l-24 24l-6 10l-2 15l2 19l5 22l20 42l115 178l118 164l97 119l97 106l97 92l97 80l68 48l120 1l108-3l103-6l105-11l127-20l119-28l109-35l112-45l107-54l106-64l104-73l108-87l72-64l69-66l118-175l54-100l98-218l41-82l42-78l-107 178l-105 157l-104 138l-106 123l-55 58l-54 51l-125 106l-74 57l-68 48l-62 40z"/>
<path fill="#ab00ff" d="M2676 2611l-67 2l-73-6l-87-14l-88-20l-70-22l-67-26l-65-31l-63-37l-61-42l-60-47l-60-53l-59-56l-94-103l-57-70l-87-111l-62-67l-32-29l-33-24l-34-21l-32-15l-48-15l-47-6l-45 3l-48 12l-49 22l-47 31l-54 46l-24 24l-6 10l-2 15l2 19l5 22l20 42l118 183l119 163l97 119l97 105l97 93l96 79l58 40l127 2l113-3l107-7l102-11l127-20l117-27l112-36l109-45l109-55l105-64l103-73l107-86l71-64l75-71l110-165l54-100l98-218l41-82l42-78l-107 178l-105 157l-104 138l-106 123l-55 58l-54 51l-125 106l-74 57l-68 48l-62 40z"/>
<path fill="#a300ff" d="M2676 2611l-67 2l-73-6l-87-14l-88-20l-70-22l-67-26l-65-31l-63-37l-61-42l-60-47l-60-53l-59-56l-94-103l-57-70l-87-111l-62-67l-32-29l-33-24l-34-21l-32-15l-48-15l-47-6l-45 3l-48 12l-49 22l-47 31l-54 46l-24 24l-6 10l-2 15l2 19l5 22l20 42l118 183l61 87l61 81l97 118l97 105l97 92l101 81l43 31l23 0l119 1l113-3l108-7l97-10l127-20l117-28l110-35l106-44l106-53l106-64l105-74l104-84l78-69l79-76l99-150l31-52l27-53l98-218l41-82l42-78l-107 178l-105 157l-104 138l-106 123l-55 58l-54 51l-125 106l-74 57l-68 48l-62 40z"/>
<path fill="#9b00ff" d="M2676 2611l-67 2l-73-6l-87-14l-88-20l-70-22l-67-26l-65-31l-63-37l-61-42l-60-47l-60-53l-59-56l-94-103l-57-70l-87-111l-62-67l-32-29l-33-24l-34-21l-32-15l-48-15l-47-6l-45 3l-48 12l-49 22l-47 31l-54 46l-24 24l-6 10l-2 15l2 19l5 22l20 42l122 188l61 87l61 80l97 118l97 105l97 91l100 81l33 23l92 2l99-1l99-3l90-6l90-10l127-20l112-26l109-35l109-45l106-53l105-63l103-72l104-84l83-75l84-80l85-128l38-64l27-53l98-218l41-82l42-78l-107 178l-105 157l-104 138l-106 123l-55 58l-54 51l-125 106l-74 57l-68 48l-62 40z"/>
<path fill="#9300ff" d="M2676 2611l-67 2l-73-6l-87-14l-88-20l-70-22l-67-26l-65-31l-63-37l-61-42l-60-47l-60-53l-59-56l-94-103l-57-70l-87-111l-62-67l-32-29l-33-24l-34-21l-32-15l-48-15l-47-6l-45 3l-48 12l-49 22l-47 31l-54 46l-24 24l-6 10l-2 15l2 19l5 22l20 42l122 188l61 87l61 80l97 118l100 108l97 91l101 80l22 16l148 3l171-5l162-15l127-20l112-26l108-35l106-43l105-53l106-64l103-72l104-84l86-77l87-85l76-113l27-44l41-78l98-218l41-82l42-78l-107 178l-105 157l-104 138l-106 123l-55 58l-54 51l-125 106l-74 57l-68 48l-62 40z"/>
<path fill="#8b00ff" d="M2676 2611l-67 2l-73-6l-87-14l-88-20l-70-22l-67-26l-65-31l-63-37l-61-42l-60-47l-60-53l-59-56l-94-103l-57-70l-87-111l-62-67l-32-29l-33-24l-34-21l-32-15l-48-15l-47-6l-45 3l-48 12l-49 22l-47 31l-54 46l-24 24l-6 10l-2 15l2 19l5 22l20 42l122 188l61 87l65 85l96 117l101 108l97 90l100 80l12 8l205 3l145-6l142-13l125-20l113-26l105-34l105-43l106-53l106-63l102-72l105-85l88-79l92-90l65-97l31-50l28-52l25-50l88-199l41-81l40-74l-107 178l-105 157l-104 138l-106 123l-55 58l-54 51l-125 106l-74 57l-68 48l-62 40z"/>
<path fill="#8300ff" d="M2676 2611l-67 2l-73-6l-87-14l-88-20l-70-22l-67-26l-65-31l-63-37l-61-42l-60-47l-60-53l-59-56l-94-103l-57-70l-87-111l-62-67l-32-29l-33-24l-34-21l-32-15l-48-15l-47-6l-45 3l-48 12l-49 22l-47 31l-54 46l-24 24l-6 10l-2 15l2 19l5 22l20 42l61 97l64 97l61 85l65 86l97 116l101 107l100 93l99 77l137 4l134-2l124-7l112-11l124-20l112-26l105-34l105-44l105-53l102-62l101-71l104-83l91-82l96-95l54-82l35-55l28-52l25-50l88-199l41-81l40-74l-107 178l-105 157l-104 138l-106 123l-55 58l-54 51l-125 106l-74 57l-68 48l-62 40z"/>
<path fill="#7c00ff" d="M2676 2611l-67 2l-73-6l-87-14l-88-20l-70-22l-67-26l-65-31l-63-37l-61-42l-60-47l-60-53l-59-56l-94-103l-57-70l-87-111l-62-67l-32-29l-33-24l-34-21l-32-15l-48-15l-47-6l-45 3l-48 12l-49 22l-47 31l-54 46l-24 24l-6 10l-2 15l2 19l5 22l20 42l122 188l61 87l65 85l96 117l101 108l97 90l99 79l144 4l133-2l124-6l118-12l123-20l108-25l104-34l105-43l106-54l105-63l102-72l100-81l94-85l100-99l44-66l38-61l28-52l25-50l88-199l41-81l40-74l-107 178l-105 157l-104 138l-106 123l-55 58l-54 51l-125 106l-74 57l-68 48l-62 40z"/>
<path fill="#7400ff" d="M2676 2611l-67 2l-73-6l-87-14l-88-20l-70-22l-67-26l-65-31l-63-37l-61-42l-60-47l-60-53l-59-56l-94-103l-57-70l-87-111l-62-67l-32-29l-33-24l-34-21l-32-15l-48-15l-47-6l-45 3l-48 12l-49 22l-47 31l-54 46l-24 24l-6 10l-2 15l2 19l5 22l20 42l118 183l61 87l61 81l97 118l101 109l97 91l99 80l151 4l133-1l122-6l122-12l124-20l108-25l101-32l105-44l106-53l102-62l102-71l100-81l88-80l94-92l22-22l30-45l45-72l28-52l25-50l88-199l41-81l40-74l-107 178l-105 157l-104 138l-106 123l-55 58l-54 51l-125 106l-74 57l-68 48l-62 40z"/>
<path fill="#6c00ff" d="M2676 2611l-67 2l-73-6l-87-14l-88-20l-70-22l-67-26l-65-31l-63-37l-61-42l-60-47l-60-53l-59-56l-94-103l-57-70l-87-111l-62-67l-32-29l-33-24l-34-21l-32-15l-48-15l-47-6l-45 3l-48 12l-49 22l-47 31l-54 46l-24 24l-6 10l-2 15l2 19l5 22l20 42l118 183l119 163l97 119l97 105l97 93l100 81l149 5l140-1l132-7l122-12l118-19l108-25l101-32l105-44l105-53l104-63l101-71l99-81l78-70l78-75l52-54l20-30l49-77l28-52l25-50l88-199l41-81l40-74l-107 178l-105 157l-104 138l-106 123l-55 58l-54 51l-125 106l-74 57l-68 48l-62 40z"/>
<path fill="#6400ff" d="M2676 2611l-67 2l-73-6l-87-14l-88-20l-70-22l-67-26l-65-31l-63-37l-61-42l-60-47l-60-53l-59-56l-94-103l-57-70l-87-111l-62-67l-32-29l-33-24l-34-21l-32-15l-48-15l-47-6l-45 3l-48 12l-49 22l-47 31l-54 46l-24 24l-6 10l-2 15l2 19l5 22l20 42l115 178l118 164l97 119l97 106l97 92l97 80l156 6l139-1l131-6l127-13l118-19l109-25l100-32l102-42l105-54l103-62l99-70l100-81l66-59l68-64l83-85l9-14l53-83l28-52l25-50l88-199l41-81l40-74l-107 178l-105 157l-104 138l-106 123l-55 58l-54 51l-125 106l-74 57l-68 48l-62 40z"/>
<path fill="#5c00ff" d="M2676 2611l-67 2l-73-6l-87-14l-88-20l-70-22l-67-26l-65-31l-63-37l-61-42l-60-47l-60-53l-59-56l-94-103l-57-70l-87-111l-62-67l-32-29l-33-24l-34-21l-32-15l-48-15l-47-6l-45 3l-48 12l-49 22l-47 31l-54 46l-24 24l-6 10l-2 15l2 19l5 22l20 42l115 178l115 159l97 119l96 107l97 93l95 78l154 6l147 0l136-6l130-13l118-19l104-24l101-33l101-43l105-53l99-60l100-70l99-80l110-100l114-116l56-88l28-52l25-50l88-199l41-81l40-74l-107 178l-105 157l-104 138l-106 123l-55 58l-54 51l-125 106l-74 57l-68 48l-62 40z"/>
<path fill="#5400ff" d="M2676 2611l-67 2l-73-6l-87-14l-88-20l-70-22l-67-26l-65-31l-63-37l-61-42l-60-47l-60-53l-59-56l-94-103l-57-70l-87-111l-62-67l-32-29l-33-24l-34-21l-32-15l-48-15l-47-6l-45 3l-48 12l-49 22l-47 31l-54 46l-24 24l-6 10l-2 15l2 19l5 22l20 42l111 173l115 159l93 116l97 108l97 94l95 79l161 7l146 0l138-6l132-13l119-19l104-24l97-32l101-42l105-54l99-59l99-71l100-80l112-102l119-121l49-78l28-52l25-50l88-199l41-81l40-74l-107 178l-105 157l-104 138l-106 123l-55 58l-54 51l-125 106l-74 57l-68 48l-62 40z"/>
<path fill="#4c00ff" d="M2676 2611l-67 2l-73-6l-87-14l-88-20l-70-22l-67-26l-65-31l-63-37l-61-42l-60-47l-60-53l-59-56l-94-103l-57-70l-87-111l-62-67l-32-29l-33-24l-34-21l-32-15l-48-15l-47-6l-45 3l-48 12l-49 22l-47 31l-54 46l-24 24l-6 10l-2 15l2 19l5 22l20 42l111 173l111 154l94 117l97 108l93 91l96 81l167 8l149 0l144-7l132-13l117-18l101-24l96-31l98-41l105-54l99-60l98-69l100-81l118-108l120-123l43-68l28-52l25-50l88-199l41-81l40-74l-107 178l-105 157l-104 138l-106 123l-55 58l-54 51l-125 106l-74 57l-68 48l-62 40z"/>
<path fill="#4400ff" d="M2676 2611l-67 2l-73-6l-87-14l-88-20l-70-22l-67-26l-65-31l-63-37l-61-42l-60-47l-60-53l-59-56l-94-103l-57-70l-87-111l-62-67l-32-29l-33-24l-34-21l-32-15l-48-15l-47-6l-45 3l-48 12l-49 22l-47 31l-54 46l-24 24l-6 10l-2 15l2 19l5 22l20 42l108 167l111 156l93 117l93 104l94 93l96 82l166 8l156 1l143-6l141-14l114-18l100-23l96-32l98-41l105-54l99-60l100-71l98-80l119-110l122-126l37-58l28-52l25-50l88-199l41-81l40-74l-107 178l-105 157l-104 138l-106 123l-55 58l-54 51l-125 106l-74 57l-68 48l-62 40z"/>
<path fill="#3c00ff" d="M2676 2611l-67 2l-73-6l-87-14l-88-20l-70-22l-67-26l-65-31l-63-37l-61-42l-60-47l-60-53l-59-56l-94-103l-57-70l-87-111l-62-67l-32-29l-33-24l-34-21l-32-15l-48-15l-47-6l-45 3l-48 12l-49 22l-47 31l-54 46l-24 24l-6 10l-2 15l2 19l5 22l20 42l108 167l107 151l94 117l93 105l93 93l94 81l172 9l160 1l147-6l136-14l115-18l99-23l93-31l98-41l105-54l99-60l97-68l99-81l121-112l129-132l30-49l28-52l25-50l88-199l41-81l40-74l-107 178l-105 157l-104 138l-106 123l-55 58l-54 51l-125 106l-74 57l-68 48l-62 40z"/>
<path fill="#3400ff" d="M2676 2611l-67 2l-73-6l-87-14l-88-20l-70-22l-67-26l-65-31l-63-37l-61-42l-60-47l-60-53l-59-56l-94-103l-57-70l-87-111l-62-67l-32-29l-33-24l-34-21l-32-15l-48-15l-47-6l-45 3l-48 12l-49 22l-47 31l-54 46l-24 24l-6 10l-2 15l2 19l5 22l20 42l104 162l108 151l93 118l93 106l94 93l91 79l178 9l159 2l149-6l143-14l114-18l95-22l94-31l94-40l87-42l-9 3l64-36l62-39l96-68l99-80l125-116l132-137l38-64l27-53l98-218l41-82l42-78l-107 178l-105 157l-104 138l-106 123l-55 58l-54 51l-125 106l-74 57l-68 48l-62 40z"/>
<path fill="#2c00ff" d="M2676 2611l-67 2l-73-6l-87-14l-88-20l-70-22l-67-26l-65-31l-63-37l-61-42l-60-47l-60-53l-59-56l-94-103l-57-70l-87-111l-62-67l-32-29l-33-24l-34-21l-32-15l-48-15l-47-6l-45 3l-48 12l-49 22l-47 31l-54 46l-24 24l-6 10l-2 15l2 19l5 22l20 42l104 162l104 146l90 114l93 107l93 94l93 81l177 10l165 2l155-6l146-14l126-21l110-28l98-36l142-64l-20 6l85-48l84-54l82-60l83-69l128-119l133-139l32-54l27-53l98-218l41-82l42-78l-107 178l-105 157l-104 138l-106 123l-55 58l-54 51l-125 106l-74 57l-68 48l-62 40z"/>
<path fill="#2400ff" d="M2676 2611l-67 2l-73-6l-87-14l-88-20l-70-22l-67-26l-65-31l-63-37l-61-42l-60-47l-60-53l-59-56l-94-103l-57-70l-87-111l-62-67l-32-29l-33-24l-34-21l-32-15l-48-15l-47-6l-45 3l-48 12l-49 22l-47 31l-54 46l-24 24l-6 10l-2 15l2 19l5 22l20 42l100 157l104 147l90 114l94 107l89 91l93 83l184 11l164 2l157-6l153-14l122-20l102-26l91-33l153-66l-29 9l88-49l87-57l84-61l85-69l65-60l65-62l136-143l53-98l98-218l41-82l42-78l-107 178l-105 157l-104 138l-106 123l-55 58l-54 51l-125 106l-74 57l-68 48l-62 40z"/>
<path fill="#1c00ff" d="M2676 2611l-67 2l-73-6l-87-14l-88-20l-70-22l-67-26l-65-31l-63-37l-61-42l-60-47l-60-53l-59-56l-94-103l-57-70l-87-111l-62-67l-32-29l-33-24l-34-21l-32-15l-48-15l-47-6l-45 3l-48 12l-49 22l-47 31l-54 46l-24 24l-6 10l-2 15l2 19l5 22l20 42l100 157l101 142l90 115l93 107l90 92l90 81l190 11l172 3l157-6l152-15l119-19l98-25l81-28l163-68l-38 11l92-51l89-57l87-63l86-71l64-58l68-65l139-147l47-89l66-149l43-92l72-137l-107 178l-105 157l-104 138l-106 123l-55 58l-54 51l-125 106l-74 57l-68 48l-62 40z"/>
<path fill="#1400ff" d="M2665 2636l51-18l62-27l-45 12l69-37l68-41l66-43l63-47l79-64l83-74l82-80l86-91l41-45l29-54l25-50l88-199l41-81l40-74l-107 178l-105 157l-104 138l-106 123l-55 58l-54 51l-125 106l-74 57l-68 48l-62 40l-57 32l-67 2l-73-6l-87-14l-88-20l-70-22l-67-26l-65-31l-63-37l-61-42l-60-47l-60-53l-59-56l-94-103l-57-70l-87-111l-62-67l-32-29l-33-24l-34-21l-32-15l-48-15l-47-6l-45 3l-48 12l-49 22l-47 31l-54 46l-24 24l-6 10l-2 15l2 19l5 22l20 42l97 151l100 143l90 115l90 104l90 93l91 83l167 11l159 4l146-3l139-9l126-16l103-20l92-27z"/>
<path fill="#0c00ff" d="M2653 2639l55-18l70-30l-52 14l70-37l65-39l63-41l64-46l80-65l80-71l83-80l83-87l60-66l11-19l39-77l90-203l79-151l-107 178l-105 157l-104 138l-106 123l-55 58l-54 51l-125 106l-74 57l-68 48l-62 40l-57 32l-67 2l-73-6l-87-14l-88-20l-70-22l-67-26l-65-31l-63-37l-61-42l-60-47l-60-53l-59-56l-94-103l-57-70l-87-111l-62-67l-32-29l-33-24l-34-21l-32-15l-48-15l-47-6l-45 3l-48 12l-49 22l-47 31l-54 46l-24 24l-6 10l-2 15l2 19l5 22l20 42l97 151l97 138l89 116l90 104l90 94l89 81l165 11l158 5l144-2l136-9l128-14l107-19l89-25z"/>
<path fill="#0400ff" d="M2642 2642l62-19l74-32l-59 15l67-35l66-39l63-41l62-43l77-61l81-71l84-81l84-87l76-83l6-11l39-77l90-203l79-151l-107 178l-105 157l-104 138l-106 123l-55 58l-54 51l-125 106l-74 57l-68 48l-62 40l-57 32l-67 2l-73-6l-87-14l-88-20l-70-22l-67-26l-65-31l-63-37l-61-42l-60-47l-60-53l-59-56l-94-103l-57-70l-87-111l-62-67l-32-29l-33-24l-34-21l-32-15l-48-15l-47-6l-45 3l-48 12l-49 22l-47 31l-54 46l-24 24l-6 10l-2 15l2 19l5 22l20 42l93 146l93 133l90 117l90 105l90 94l90 84l164 11l157 6l141-1l134-8l131-13l107-19l92-24z"/>
<path fill="#0004ff" d="M2633 2644l67-20l78-33l-29 9l-36 7l67-35l66-38l61-39l61-43l77-60l79-68l80-75l84-87l95-105l41-80l90-203l79-151l-107 178l-105 157l-104 138l-106 123l-55 58l-54 51l-125 106l-74 57l-68 48l-62 40l-57 32l-67 2l-73-6l-87-14l-88-20l-70-22l-67-26l-65-31l-63-37l-61-42l-60-47l-60-53l-59-56l-94-103l-57-70l-87-111l-62-67l-32-29l-33-24l-34-21l-32-15l-48-15l-47-6l-45 3l-48 12l-49 22l-47 31l-54 46l-24 24l-6 10l-2 15l2 19l5 22l20 42l90 141l93 134l90 117l89 105l90 95l88 82l163 12l155 6l140-1l136-7l134-13l106-17l90-22z"/>
<path fill="#000cff" d="M2624 2646l71-20l83-35l-32 9l-39 8l76-40l75-44l70-45l69-51l67-54l71-62l71-69l72-73l109-121l37-72l90-203l79-151l-107 178l-105 157l-104 138l-106 123l-55 58l-54 51l-125 106l-74 57l-68 48l-62 40l-57 32l-67 2l-73-6l-87-14l-88-20l-70-22l-67-26l-65-31l-63-37l-61-42l-60-47l-60-53l-59-56l-94-103l-57-70l-87-111l-62-67l-32-29l-33-24l-34-21l-32-15l-48-15l-47-6l-45 3l-48 12l-49 22l-47 31l-54 46l-24 24l-6 10l-2 15l2 19l5 22l20 42l90 141l89 129l86 113l90 106l90 96l89 83l162 13l153 6l138 0l138-6l134-12l111-16l87-21z"/>
<path fill="#0014ff" d="M2616 2647l38-8l38-12l86-36l-35 10l-41 8l75-40l76-44l69-45l68-49l68-54l69-61l68-64l72-73l124-137l33-65l88-199l41-81l40-74l-107 178l-105 157l-104 138l-106 123l-55 58l-54 51l-125 106l-74 57l-68 48l-62 40l-57 32l-67 2l-73-6l-87-14l-88-20l-70-22l-67-26l-65-31l-63-37l-61-42l-60-47l-60-53l-59-56l-94-103l-57-70l-87-111l-62-67l-32-29l-33-24l-34-21l-32-15l-48-15l-47-6l-45 3l-48 12l-49 22l-47 31l-54 46l-24 24l-6 10l-2 15l2 19l5 22l20 42l86 135l90 130l86 113l90 107l89 96l87 82l161 12l152 8l135 1l135-5l135-11l116-16l88-20z"/>
<path fill="#001cff" d="M2608 2649l40-9l39-11l91-38l-38 11l-43 7l77-40l75-44l69-44l65-47l67-53l67-58l69-65l70-71l139-153l29-57l88-199l41-81l40-74l-107 178l-105 157l-104 138l-106 123l-55 58l-54 51l-125 106l-74 57l-68 48l-62 40l-57 32l-67 2l-73-6l-87-14l-88-20l-70-22l-67-26l-65-31l-63-37l-61-42l-60-47l-60-53l-59-56l-94-103l-57-70l-87-111l-62-67l-32-29l-33-24l-34-21l-32-15l-48-15l-47-6l-45 3l-48 12l-49 22l-47 31l-54 46l-24 24l-6 10l-2 15l2 19l5 22l20 42l86 135l86 125l86 114l90 107l86 93l87 83l160 13l151 8l134 2l132-4l142-11l118-15l89-19z"/>
<path fill="#0024ff" d="M2602 2650l40-8l42-12l94-39l-40 11l-45 8l76-40l75-44l70-44l66-48l67-53l65-56l67-62l70-70l73-78l77-88l113-249l41-81l40-74l-107 178l-105 157l-104 138l-106 123l-55 58l-54 51l-125 106l-74 57l-68 48l-62 40l-57 32l-67 2l-73-6l-87-14l-88-20l-70-22l-67-26l-65-31l-63-37l-61-42l-60-47l-60-53l-59-56l-94-103l-57-70l-87-111l-62-67l-32-29l-33-24l-34-21l-32-15l-48-15l-47-6l-45 3l-48 12l-49 22l-47 31l-54 46l-24 24l-6 10l-2 15l2 19l5 22l20 42l82 130l87 125l86 114l86 104l86 94l88 85l159 13l149 8l132 3l130-3l146-10l121-14l88-18z"/>
<path fill="#002cff" d="M2596 2651l44-9l40-11l41-15l57-25l-41 11l-48 8l77-40l76-44l69-45l64-45l64-50l65-56l66-62l70-69l80-85l83-94l107-237l41-82l42-78l-107 178l-105 157l-104 138l-106 123l-55 58l-54 51l-125 106l-74 57l-68 48l-62 40l-57 32l-67 2l-73-6l-87-14l-88-20l-70-22l-67-26l-65-31l-63-37l-61-42l-60-47l-60-53l-59-56l-94-103l-57-70l-87-111l-62-67l-32-29l-33-24l-34-21l-32-15l-48-15l-47-6l-45 3l-48 12l-49 22l-47 31l-54 46l-24 24l-6 10l-2 15l2 19l5 22l20 42l82 130l83 120l86 115l86 104l86 94l86 83l158 14l148 9l134 3l130-3l149-9l122-13l87-17z"/>
<path fill="#0034ff" d="M2591 2652l47-9l41-12l42-15l57-25l-44 12l-49 7l75-39l76-44l68-43l66-46l64-51l65-55l68-62l67-67l85-91l87-99l104-230l41-82l42-78l-107 178l-105 157l-104 138l-106 123l-55 58l-54 51l-125 106l-74 57l-68 48l-62 40l-57 32l-67 2l-73-6l-87-14l-88-20l-70-22l-67-26l-65-31l-63-37l-61-42l-60-47l-60-53l-59-56l-94-103l-57-70l-87-111l-62-67l-32-29l-33-24l-34-21l-32-15l-48-15l-47-6l-45 3l-48 12l-49 22l-47 31l-54 46l-24 24l-6 10l-2 15l2 19l5 22l20 42l82 130l79 115l87 115l86 105l86 94l83 81l157 15l147 9l136 3l127-1l147-8l129-13l88-16z"/>
<path fill="#003cff" d="M2586 2652l46-8l43-11l45-17l58-25l-44 12l-51 8l75-40l78-46l67-42l66-47l63-49l64-54l66-61l65-64l91-97l92-105l100-223l41-82l42-78l-107 178l-105 157l-104 138l-106 123l-55 58l-54 51l-125 106l-74 57l-68 48l-62 40l-57 32l-67 2l-73-6l-87-14l-88-20l-70-22l-67-26l-65-31l-63-37l-61-42l-60-47l-60-53l-59-56l-94-103l-57-70l-87-111l-62-67l-32-29l-33-24l-34-21l-32-15l-48-15l-47-6l-45 3l-48 12l-49 22l-47 31l-54 46l-24 24l-6 10l-2 15l2 19l5 22l20 42l79 124l79 116l82 111l87 105l86 96l84 83l156 15l145 9l136 4l124-1l149-7l135-12l89-14z"/>
<path fill="#0044ff" d="M2581 2653l49-8l45-12l45-17l58-25l-44 12l-54 8l72-38l80-47l69-44l64-45l65-50l62-53l62-57l66-64l94-101l99-113l97-216l41-82l42-78l-107 178l-105 157l-104 138l-106 123l-55 58l-54 51l-125 106l-74 57l-68 48l-62 40l-57 32l-67 2l-73-6l-87-14l-88-20l-70-22l-67-26l-65-31l-63-37l-61-42l-60-47l-60-53l-59-56l-94-103l-57-70l-87-111l-62-67l-32-29l-33-24l-34-21l-32-15l-48-15l-47-6l-45 3l-48 12l-49 22l-47 31l-54 46l-24 24l-6 10l-2 15l2 19l5 22l20 42l75 119l79 116l83 111l86 106l82 92l86 85l155 15l144 10l134 5l122 0l152-6l140-12l90-13z"/>
<path fill="#004cff" d="M2577 2653l53-8l45-12l45-17l58-25l-47 13l-53 7l72-38l82-49l70-44l63-45l62-48l61-51l63-58l64-63l96-102l105-121l94-209l41-82l42-78l-107 178l-105 157l-104 138l-106 123l-55 58l-54 51l-125 106l-74 57l-68 48l-62 40l-57 32l-67 2l-73-6l-87-14l-88-20l-70-22l-67-26l-65-31l-63-37l-61-42l-60-47l-60-53l-59-56l-94-103l-57-70l-87-111l-62-67l-32-29l-33-24l-34-21l-32-15l-48-15l-47-6l-45 3l-48 12l-49 22l-47 31l-54 46l-24 24l-6 10l-2 15l2 19l5 22l20 42l75 119l76 111l82 112l86 106l83 92l83 84l154 15l143 10l132 6l121 0l152-5l151-11l87-12z"/>
<path fill="#0054ff" d="M2574 2654l52-8l46-12l44-16l62-27l-47 13l-54 7l71-38l84-50l70-45l61-43l62-48l60-50l123-117l102-108l109-126l91-203l41-82l42-78l-107 178l-105 157l-104 138l-106 123l-55 58l-54 51l-125 106l-74 57l-68 48l-62 40l-57 32l-67 2l-73-6l-87-14l-88-20l-70-22l-67-26l-65-31l-63-37l-61-42l-60-47l-60-53l-59-56l-94-103l-57-70l-87-111l-62-67l-32-29l-33-24l-34-21l-32-15l-48-15l-47-6l-45 3l-48 12l-49 22l-47 31l-54 46l-24 24l-6 10l-2 15l2 19l14 44l65 106l89 133l83 113l86 108l83 93l84 85l153 16l142 11l131 6l119 1l149-5l162-10l87-11z"/>
<path fill="#005cff" d="M2571 2654l55-8l45-12l45-16l62-27l-47 13l-55 7l32-17l38-21l87-52l69-45l62-43l57-45l60-50l122-115l106-113l113-131l88-196l41-82l42-78l-107 178l-105 157l-104 138l-106 123l-55 58l-54 51l-125 106l-74 57l-68 48l-62 40l-57 32l-67 2l-73-6l-87-14l-88-20l-70-22l-67-26l-65-31l-63-37l-61-42l-60-47l-60-53l-59-56l-94-103l-57-70l-87-111l-62-67l-32-29l-33-24l-34-21l-32-15l-48-15l-47-6l-45 3l-48 12l-49 22l-47 31l-54 46l-24 24l-6 10l-2 15l2 19l14 44l61 100l90 134l82 113l83 104l83 94l85 87l152 16l141 12l130 6l117 2l151-3l167-10l88-9z"/>
<path fill="#0064ff" d="M2733 2579l-56 32l3-2l4-2l9-5l19-11l43-24l100-62l74-50l66-48l67-54l68-61l70-68l72-75l76-85l77-91l85-190l41-82l42-78l-107 178l-105 157l-104 138l-106 123l-55 58l-54 51l-125 106l-74 57l-68 48zM1549 2651l224 23l188 11l172 3l205-7l147-11l141-24l69-20l83-35l-53 14l-64 7l-69 0l-78-8l-94-17l-88-23l-77-26l-71-31l-70-39l-70-46l-70-54l-72-65l-67-66l-67-74l-63-77l-78-100l-34-41l-48-47l-45-37l-34-22l-35-18l-34-12l-35-8l-34-3l-32 1l-35 7l-34 11l-41 19l-41 27l-41 33l-41 40l-6 10l-1 8l1 26l14 44l40 67l75 115l65 93l64 87l65 80l64 75l79 84z"/>
<path fill="#006cff" d="M2759 2562l-55 34l4-2l6-4l9-5l22-13l50-30l87-56l68-47l64-49l67-55l65-60l68-68l72-76l142-163l84-190l41-81l40-74l-103 173l-104 155l-103 137l-103 122l-102 103l-114 99l-141 108zM1546 2645l226 24l195 13l171 2l212-6l141-10l135-22l69-20l83-35l-53 14l-64 7l-69 0l-78-8l-94-17l-88-23l-77-26l-74-33l-70-39l-70-46l-70-55l-69-62l-67-66l-67-74l-173-215l-46-46l-47-39l-32-22l-35-18l-34-13l-34-9l-35-3l-34 1l-35 6l-32 10l-43 20l-41 26l-43 35l-41 40l-6 10l-2 15l2 19l5 22l20 42l61 97l72 107l75 104l65 84l68 81l72 79z"/>
<path fill="#0074ff" d="M2781 2548l-56 36l3-2l6-4l10-6l24-15l55-34l78-51l64-46l62-48l65-56l67-62l69-69l68-73l134-156l82-184l41-81l40-74l-100 168l-102 153l-100 135l-102 121l-99 102l-107 95l-139 108zM1538 2639l227 25l200 13l178 4l219-6l134-8l127-21l72-20l83-35l-53 14l-64 7l-69 0l-78-8l-94-17l-88-23l-77-26l-74-33l-70-39l-70-46l-70-55l-69-62l-67-66l-67-74l-173-215l-46-46l-47-39l-32-22l-35-18l-34-13l-34-9l-33-3l-34 1l-32 5l-35 10l-43 20l-41 25l-43 35l-43 42l-6 10l-2 15l2 19l5 22l20 42l57 91l72 108l72 100l64 84l65 78l65 72z"/>
<path fill="#007cff" d="M3593 1623l-97 163l-100 152l-100 135l-101 120l-98 102l-103 93l-131 103l-121 82l172-111l63-46l62-49l65-57l65-61l67-69l70-75l127-149l79-178l41-81zM1532 2634l239 26l200 13l177 4l243-5l116-8l119-18l69-20l83-35l-53 14l-64 7l-69 0l-78-8l-94-17l-88-23l-77-26l-74-33l-70-39l-70-46l-70-55l-69-62l-67-66l-67-74l-173-215l-46-46l-47-39l-32-22l-35-18l-34-13l-34-9l-33-3l-34 1l-32 5l-35 10l-43 20l-41 25l-43 35l-43 42l-6 10l-2 15l2 19l5 22l20 42l57 91l72 108l75 105l65 83l68 82l79 87z"/>
<path fill="#0083ff" d="M2759 2562l15-9l15-10l30-19l42-28l68-47l60-44l60-48l65-57l63-62l68-69l68-75l122-144l79-176l79-151l-97 163l-97 147l-98 133l-99 120l-95 100l-99 90l-125 100zM1527 2628l237 27l212 15l177 3l257-4l105-6l82-12l33-6l66-19l82-35l-53 14l-64 7l-69 0l-78-8l-94-17l-88-23l-77-26l-74-33l-70-39l-70-46l-70-55l-69-62l-67-66l-67-74l-173-215l-46-46l-47-39l-32-22l-35-18l-32-12l-34-9l-35-4l-32 1l-32 4l-35 10l-43 20l-43 26l-43 35l-43 42l-6 10l-2 15l2 19l5 22l20 42l54 86l71 108l72 100l65 84l65 78l68 77z"/>
<path fill="#008bff" d="M3593 1623l-94 158l-97 148l-97 132l-97 118l-92 98l-97 90l-123 99l-121 86l164-111l61-46l59-48l62-56l63-61l65-67l69-77l119-141l79-176zM1520 2622l250 29l212 15l176 4l279-4l91-5l106-17l66-20l78-33l-53 14l-64 7l-69 0l-78-8l-94-17l-88-23l-77-26l-74-33l-70-39l-70-46l-70-55l-69-62l-67-66l-67-74l-173-215l-46-46l-47-39l-32-22l-35-18l-32-12l-34-9l-35-4l-32 1l-32 4l-35 10l-43 20l-43 26l-43 35l-43 42l-6 10l-2 15l2 19l5 22l20 42l57 91l72 108l72 100l64 84l69 82l82 91z"/>
<path fill="#0093ff" d="M2790 2542l99-67l62-44l59-46l57-47l63-57l63-62l131-142l116-138l76-170l77-146l-94 158l-94 144l-97 133l-94 114l-92 99l-97 90l-117 95zM1517 2617l246 28l210 16l182 5l296-2l83-5l100-15l66-20l78-33l-53 14l-64 7l-73 0l-79-9l-93-17l-87-23l-77-26l-74-33l-70-40l-70-47l-70-54l-69-62l-67-67l-67-74l-170-212l-46-46l-45-38l-32-21l-34-19l-35-13l-32-9l-32-4l-35 0l-34 5l-33 10l-43 19l-45 27l-43 35l-43 42l-6 10l-2 15l2 19l5 22l20 42l50 80l72 108l72 101l61 80l64 79l72 81z"/>
<path fill="#009bff" d="M3593 1623l-91 154l-94 143l-94 130l-94 115l-92 99l-92 88l-111 91l-121 89l157-109l58-46l57-48l62-57l61-61l132-144l111-133l77-169zM1509 2611l253 30l216 17l173 5l315-1l79-4l93-15l62-19l78-33l-53 14l-64 7l-73 0l-79-9l-93-17l-87-23l-77-26l-74-33l-70-40l-70-47l-70-54l-69-62l-67-67l-67-74l-170-212l-46-46l-45-38l-32-21l-34-19l-35-13l-32-9l-32-4l-33 0l-34 5l-32 9l-46 20l-43 26l-43 34l-45 44l-6 10l-2 15l2 19l5 22l20 42l54 86l71 108l72 100l65 84l68 83l86 95z"/>
<path fill="#00a3ff" d="M3593 1623l-91 154l-94 143l-94 130l-91 112l-89 96l-92 88l-105 88l-119 89l155-111l112-92l59-56l63-62l128-141l109-132l75-164zM1503 2605l252 31l214 17l171 6l337 2l75-4l86-14l62-19l78-33l-53 14l-64 7l-73 0l-79-9l-93-17l-87-23l-77-26l-75-34l-69-39l-70-47l-70-54l-69-62l-67-67l-67-74l-170-212l-46-46l-45-38l-32-21l-32-18l-33-13l-34-9l-32-5l-33 0l-32 4l-34 9l-45 19l-43 26l-46 36l-45 44l-6 10l-2 15l2 19l5 22l20 42l50 80l68 103l72 101l61 81l65 79l72 81z"/>
<path fill="#00abff" d="M3593 1623l-91 153l-90 138l-92 128l-91 113l-88 97l-89 85l-103 88l-117 88l150-109l111-94l61-57l60-61l128-142l105-127l74-163zM1498 2599l250 31l219 19l162 7l359 3l71-3l81-14l60-18l78-33l-53 14l-64 7l-73 0l-79-9l-93-17l-87-23l-77-26l-75-34l-69-39l-70-47l-70-54l-69-62l-67-67l-67-74l-170-212l-46-46l-43-36l-34-23l-32-18l-33-13l-32-9l-32-5l-35 0l-32 4l-32 8l-45 19l-45 27l-46 36l-43 41l-8 13l-2 15l2 19l5 22l20 42l43 69l72 109l68 97l57 76l61 76l61 70z"/>
<path fill="#00b3ff" d="M3593 1623l-88 149l-91 139l-91 127l-88 109l-87 97l-89 87l-99 84l-114 88l145-107l110-94l119-118l125-140l104-126l72-158zM1492 2593l256 33l217 19l161 7l369 6l70-3l77-13l62-19l74-32l-53 14l-64 7l-73 0l-79-9l-93-17l-87-23l-77-26l-75-34l-69-39l-70-47l-70-54l-69-62l-67-67l-67-74l-170-212l-46-46l-43-36l-34-23l-32-18l-33-13l-32-9l-32-5l-35 0l-32 4l-32 8l-45 19l-45 27l-46 36l-43 41l-8 13l-2 15l2 19l5 22l20 42l46 75l69 103l71 101l62 81l64 80l76 85z"/>
<path fill="#00bbff" d="M3593 1623l-88 149l-88 135l-88 123l-88 111l-85 95l-88 86l-96 84l-113 87l141-106l110-95l118-118l124-141l99-121l72-156zM1488 2588l253 32l216 20l158 8l391 9l66-3l70-12l62-19l74-32l-53 14l-64 7l-73 0l-79-9l-93-17l-91-24l-76-26l-74-34l-69-39l-68-46l-70-54l-69-62l-67-67l-67-74l-170-212l-46-46l-43-36l-32-22l-32-18l-32-13l-33-9l-32-5l-32-1l-33 3l-32 8l-45 18l-43 25l-45 34l-45 43l-13 17l-2 15l2 19l5 22l20 42l39 64l69 103l68 98l57 77l61 76l61 71z"/>
<path fill="#00c3ff" d="M3593 1623l-85 144l-88 135l-88 124l-88 111l-85 96l-84 83l-92 81l-110 86l136-104l107-94l117-118l123-140l98-120l69-151zM1481 2582l253 33l221 21l149 8l408 12l66-3l68-12l58-19l74-31l-53 14l-64 7l-73 0l-79-9l-93-17l-91-24l-76-26l-74-34l-69-39l-68-46l-70-54l-69-62l-67-67l-67-74l-170-212l-46-46l-43-36l-32-22l-32-18l-32-13l-33-9l-32-5l-32-1l-33 3l-32 8l-45 18l-43 25l-45 34l-45 43l-13 17l-2 15l2 19l5 22l20 42l43 69l68 104l68 97l61 81l61 76l76 86z"/>
<path fill="#00cbff" d="M2887 2472l48-36l29-22l55-44l107-95l113-116l124-142l93-116l69-149l68-129l-85 144l-86 133l-87 122l-85 107l-85 97l-84 84l-91 81zM1477 2576l250 34l219 22l148 8l420 15l68-2l64-12l58-19l74-31l-53 14l-64 7l-73 0l-79-9l-93-17l-91-24l-76-26l-74-34l-69-39l-68-46l-70-54l-69-62l-67-67l-67-74l-170-212l-46-46l-43-36l-30-21l-32-18l-32-13l-33-10l-32-5l-32-1l-32 3l-33 7l-45 18l-45 26l-45 34l-43 41l-9 9l-6 10l-2 15l2 19l5 22l20 42l36 58l68 104l68 98l115 149l61 72z"/>
<path fill="#00d3ff" d="M3593 1623l-82 139l-85 131l-85 120l-85 109l-82 94l-83 85l-90 81l-100 80l127-100l105-95l115-120l122-141l88-110l67-144zM1470 2570l257 35l218 22l146 10l235 7l195 10l66-2l59-11l58-19l74-31l-56 15l-65 6l-74-1l-78-9l-94-17l-89-24l-76-27l-74-34l-67-38l-70-47l-70-55l-69-62l-64-64l-67-74l-168-210l-43-44l-45-38l-33-23l-32-18l-32-13l-30-9l-33-6l-32-1l-32 3l-30 6l-46 17l-43 24l-45 33l-45 41l-13 14l-6 10l-2 15l2 19l5 22l20 42l32 52l65 99l68 99l111 146z"/>
<path fill="#00dbff" d="M3593 1623l-82 139l-82 127l-85 120l-82 106l-82 95l-80 82l-85 78l-100 81l122-98l104-96l112-116l120-141l88-109l66-144zM1466 2564l254 36l216 23l145 10l245 9l197 11l66-2l57-10l58-19l74-31l-56 15l-65 6l-74-1l-78-9l-94-17l-89-24l-76-27l-74-34l-67-38l-70-47l-70-55l-69-62l-64-64l-67-74l-168-210l-43-44l-45-38l-33-23l-32-18l-32-13l-30-9l-33-6l-32-1l-32 3l-30 6l-46 17l-43 24l-45 33l-45 41l-13 14l-6 10l-2 15l2 19l5 22l20 42l32 52l65 99l68 99l115 151l61 72z"/>
<path fill="#00e3ff" d="M3593 1623l-81 137l-80 125l-82 116l-82 106l-79 93l-79 83l-85 78l-95 79l119-98l103-96l109-116l119-140l83-105l64-138zM1460 2558l254 37l220 24l137 9l251 11l207 13l62-2l55-9l58-19l74-31l-56 15l-65 6l-74-1l-78-9l-94-17l-89-24l-76-27l-74-34l-67-38l-70-47l-70-55l-69-62l-64-64l-67-74l-168-210l-43-44l-45-38l-33-23l-32-18l-32-13l-30-9l-31-6l-32-1l-32 2l-30 7l-45 16l-46 25l-43 31l-45 41l-15 16l-6 10l-2 15l2 19l5 22l20 42l29 47l64 99l68 99l108 142z"/>
<path fill="#00ebff" d="M2945 2428l10-8l10-8l15-12l30-25l51-44l102-97l111-120l117-139l74-95l64-137l64-120l-79 134l-79 123l-82 117l-79 103l-79 93l-76 81l-83 78zM1456 2553l257 37l220 24l135 11l254 12l209 14l62-2l55-9l56-18l74-31l-56 15l-65 6l-74-1l-78-9l-94-17l-89-24l-76-27l-74-34l-67-38l-70-47l-70-55l-69-62l-64-64l-67-74l-168-210l-43-44l-43-37l-30-21l-33-19l-32-14l-30-9l-32-7l-30-1l-33 2l-32 6l-45 16l-45 24l-46 33l-43 39l-17 18l-6 10l-2 15l2 19l5 22l20 42l29 47l64 99l68 99l112 147l61 73z"/>
<path fill="#00f3ff" d="M3593 1623l-76 129l-79 123l-79 114l-78 103l-76 91l-77 81l-79 76l-88 75l111-95l99-96l108-117l119-143l70-90l64-135zM1449 2547l257 38l218 25l134 10l264 14l210 16l62-2l56-8l54-18l74-31l-56 15l-65 6l-74-1l-78-9l-94-17l-89-24l-76-27l-74-34l-67-38l-70-47l-70-55l-69-62l-64-64l-67-74l-168-210l-43-44l-43-37l-30-21l-33-19l-32-14l-30-9l-32-7l-30-1l-33 2l-32 6l-45 16l-45 24l-46 33l-43 39l-17 18l-6 10l-2 15l2 19l5 22l20 42l32 52l65 99l68 99l115 151l75 88z"/>
<path fill="#00fbff" d="M3593 1623l-76 129l-75 118l-77 110l-75 101l-76 91l-77 83l-75 73l-84 73l59-49l49-45l99-97l106-118l117-143l62-80l62-130zM1445 2541l255 38l223 26l133 12l266 15l211 16l63-1l56-8l52-17l74-31l-56 15l-65 6l-74-1l-78-9l-94-17l-89-24l-79-28l-74-34l-67-38l-70-48l-70-55l-68-61l-65-66l-65-73l-167-208l-43-44l-43-37l-30-21l-33-19l-32-14l-30-9l-32-7l-30-1l-31 1l-30 6l-45 15l-45 24l-45 32l-46 40l-19 20l-6 10l-2 15l2 19l5 22l20 42l25 41l65 100l64 94l108 143l57 70z"/>
<path fill="#00fffb" d="M2997 2385l6-5l8-7l14-11l26-24l50-45l99-101l106-120l115-142l52-66l61-130l59-111l-73 124l-73 115l-76 110l-72 97l-73 89l-73 81l-75 74zM1438 2535l261 39l222 27l152 13l255 16l204 17l65-1l56-8l51-16l74-31l-56 15l-65 6l-74-1l-78-9l-94-17l-89-24l-79-28l-74-34l-67-38l-70-48l-70-55l-68-61l-65-66l-65-73l-167-208l-43-44l-43-37l-30-21l-33-19l-32-14l-30-9l-32-7l-30-1l-31 1l-30 6l-36 12l-39 18l-37 23l-36 28l-52 50l-6 10l-1 8l1 26l14 44l11 20l64 103l69 101l61 85l64 85l76 91z"/>
<path fill="#00fff3" d="M3593 1623l-71 120l-72 114l-73 106l-72 98l-73 90l-70 78l-72 73l-78 71l50-45l49-46l99-101l105-120l115-143l45-59l59-125zM1434 2530l260 40l221 27l157 14l255 17l208 18l67-1l56-8l50-16l70-30l-56 15l-65 6l-74-1l-78-9l-94-17l-89-24l-79-28l-74-34l-67-38l-70-48l-70-55l-68-61l-65-66l-65-73l-167-208l-41-42l-43-37l-30-22l-30-17l-31-14l-32-11l-32-7l-30-2l-30 1l-30 5l-37 11l-39 18l-38 23l-37 29l-54 51l-6 10l-1 8l1 26l14 44l11 20l118 183l119 163z"/>
<path fill="#00ffeb" d="M3029 2358l2-2l3-2l2-2l6-6l13-11l23-22l49-46l97-103l105-121l113-142l34-46l60-125l57-107l-70 119l-70 110l-70 103l-69 95l-70 87l-70 79l-71 73zM1430 2525l259 41l225 28l157 15l255 17l204 18l68 0l61-8l45-14l74-31l-56 15l-65 6l-74-1l-78-9l-94-17l-89-24l-79-28l-74-34l-67-38l-70-48l-70-55l-68-61l-65-66l-65-73l-167-208l-41-42l-43-37l-30-22l-30-17l-31-14l-32-11l-32-7l-30-2l-30 1l-30 5l-37 11l-39 18l-38 23l-37 29l-54 51l-6 10l-1 8l1 26l14 44l11 20l118 183l115 159z"/>
<path fill="#00ffe3" d="M3049 2340l4-4l2-2l6-5l13-12l23-21l47-47l97-104l103-122l116-148l18-24l58-121l57-107l-67 114l-67 106l-68 101l-68 94l-70 88l-67 77l-67 71zM1427 2521l263 41l224 29l156 15l256 18l206 19l71 0l56-8l46-13l73-31l-56 15l-65 6l-74-1l-78-9l-98-18l-89-24l-78-28l-73-34l-68-39l-70-48l-67-53l-69-63l-64-64l-65-73l-167-208l-41-42l-43-37l-30-22l-30-17l-31-14l-30-11l-30-6l-30-3l-30 1l-32 4l-37 11l-39 18l-38 23l-37 28l-56 53l-6 10l-1 8l1 26l14 44l11 20l118 183l115 159l61 76z"/>
<path fill="#00ffdb" d="M3134 2258l-67 66l2-2l2-3l6-5l13-12l23-22l47-48l96-105l105-126l114-147l5-8l64-133l49-90l-64 109l-67 106l-66 100l-65 89l-66 84l-65 77zM1424 2516l261 42l223 29l154 15l263 20l204 19l71 1l60-8l49-14l69-29l-56 15l-65 6l-74-1l-78-9l-98-18l-89-24l-78-28l-73-34l-68-39l-70-48l-67-53l-69-63l-64-64l-65-73l-167-208l-41-42l-43-37l-30-22l-30-17l-31-14l-30-11l-30-6l-30-3l-30 1l-32 4l-37 11l-39 18l-38 23l-37 28l-56 53l-6 10l-1 8l1 26l14 44l11 20l118 183l119 163l64 81z"/>
<path fill="#00ffd3" d="M3085 2307l3-3l2-2l5-5l13-13l23-22l45-47l94-104l100-123l112-146l56-116l55-103l-64 109l-64 102l-63 95l-64 89l-64 82l-63 76l-63 68zM1417 2511l268 43l223 30l153 15l263 21l207 20l71 1l61-8l51-14l64-28l-56 15l-65 6l-74-1l-78-9l-98-18l-89-24l-78-28l-73-34l-68-39l-70-48l-67-53l-69-63l-64-64l-65-73l-167-208l-41-42l-43-37l-30-22l-30-17l-31-14l-30-11l-30-6l-30-3l-30 1l-30 4l-39 11l-36 16l-37 22l-39 29l-58 55l-6 10l-1 8l1 26l14 44l11 20l118 183l119 163l72 89z"/>
<path fill="#00ffcb" d="M3104 2289l2-3l3-2l5-5l10-11l22-22l43-45l90-102l97-119l108-142l54-112l55-103l-61 104l-60 97l-61 92l-61 85l-64 84l-60 73l-61 68zM1413 2506l267 44l227 31l160 16l251 20l211 22l74 0l61-7l51-14l63-27l-56 15l-65 6l-74-1l-78-9l-98-18l-89-24l-78-28l-73-34l-68-39l-70-48l-67-53l-69-63l-64-64l-65-73l-167-208l-41-42l-41-35l-30-22l-30-18l-30-14l-30-11l-31-7l-30-3l-30 0l-30 5l-39 10l-36 16l-39 23l-37 27l-60 57l-6 10l-1 8l1 26l14 44l11 20l118 183l61 87l61 81l76 93z"/>
<path fill="#00ffc3" d="M3122 2270l3-2l2-2l2-3l5-5l10-10l20-20l41-45l86-99l94-117l101-134l54-111l53-99l-116 192l-60 92l-58 82l-58 77l-60 74l-58 66zM1409 2501l272 45l226 31l159 17l251 21l212 22l74 1l62-7l50-13l63-27l-56 15l-65 6l-74-1l-78-9l-98-18l-89-24l-78-28l-73-34l-68-39l-70-48l-67-53l-69-63l-64-64l-65-73l-167-208l-41-42l-41-35l-30-22l-30-18l-30-14l-30-11l-31-7l-30-3l-30 0l-30 5l-39 10l-36 16l-39 23l-37 27l-60 57l-6 10l-1 8l1 26l14 44l11 20l118 183l61 87l61 81l83 101z"/>
<path fill="#00ffbb" d="M3141 2251l1-1l3-3l5-5l9-10l21-22l39-43l83-98l89-111l97-129l52-107l53-99l-113 187l-112 166l-57 77l-55 69l-57 67zM1405 2496l276 47l226 31l158 17l252 22l208 22l73 2l63-6l55-14l62-26l-56 15l-65 6l-74-1l-78-9l-98-18l-89-24l-78-28l-74-35l-67-38l-70-48l-67-53l-69-63l-64-64l-65-73l-167-208l-41-42l-41-35l-58-39l-30-15l-30-10l-30-8l-31-3l-30 0l-30 4l-36 10l-39 16l-39 23l-39 28l-60 57l-6 10l-1 8l1 26l14 44l11 20l115 178l61 87l64 86z"/>
<path fill="#00ffb3" d="M3159 2232l4-3l4-5l10-11l19-21l38-43l79-94l85-107l92-123l52-108l51-94l-107 178l-109 162l-109 144l-54 65zM1402 2492l269 45l230 33l137 16l267 24l218 24l74 2l65-6l58-15l58-24l-56 15l-65 6l-74-1l-78-9l-98-18l-89-24l-78-28l-74-35l-67-38l-70-48l-67-53l-69-63l-64-64l-65-73l-165-206l-41-42l-41-36l-30-22l-30-18l-30-15l-28-10l-30-7l-30-4l-31 0l-28 3l-38 10l-39 16l-37 21l-38 28l-33 28l-32 32l-6 10l-1 8l1 26l14 44l11 20l100 157l112 156z"/>
<path fill="#00ffab" d="M3175 2216l2-3l5-6l10-10l18-20l36-42l77-93l82-105l87-117l50-103l51-94l-103 173l-107 159l-103 137zM1398 2487l273 47l229 33l143 17l256 23l224 25l75 2l63-5l60-15l57-23l-56 15l-65 6l-74-1l-82-9l-97-19l-89-24l-79-28l-73-35l-67-39l-70-48l-67-54l-69-63l-64-65l-64-71l-163-204l-41-42l-41-36l-58-39l-30-15l-28-10l-30-8l-28-4l-30 0l-30 3l-39 9l-39 16l-39 22l-38 28l-33 28l-32 32l-6 10l-1 8l1 26l14 44l11 20l100 157l112 156l61 79z"/>
<path fill="#00ffa3" d="M3190 2199l2-3l2-1l4-5l9-10l18-21l35-40l72-89l162-214l50-103l49-90l-100 168l-102 153l-100 135zM1395 2482l271 47l234 35l142 17l256 24l222 26l74 2l67-5l60-14l57-23l-56 15l-65 6l-74-1l-82-9l-97-19l-89-24l-79-28l-73-35l-67-39l-70-48l-67-54l-69-63l-64-65l-64-71l-163-204l-41-42l-41-36l-58-39l-30-15l-28-10l-30-8l-28-4l-30 0l-30 3l-39 9l-39 16l-39 22l-38 28l-33 28l-32 32l-6 10l-1 8l1 26l14 44l11 20l100 157l115 161l65 83z"/>
<path fill="#00ff9b" d="M3205 2182l2-2l5-6l9-10l16-19l32-38l71-87l156-208l48-99l49-90l-97 163l-97 147l-97 132zM1389 2477l278 49l233 35l141 17l257 25l219 26l76 3l68-5l61-14l25-9l31-13l-56 15l-65 6l-74-1l-82-9l-97-19l-89-24l-79-28l-73-35l-67-39l-70-48l-67-54l-69-63l-64-65l-64-71l-163-204l-41-42l-41-36l-58-39l-30-15l-28-10l-30-8l-28-4l-30 0l-28 3l-39 9l-39 15l-38 21l-39 28l-35 30l-32 32l-6 10l-1 8l1 26l14 44l11 20l100 157l115 161l68 87z"/>
<path fill="#00ff93" d="M3220 2164l4-4l5-5l7-8l16-19l31-38l66-83l149-199l49-99l46-86l-91 154l-94 143l-94 130zM1385 2472l283 50l232 35l146 19l251 26l220 25l76 3l68-5l61-13l26-9l30-12l-56 15l-65 6l-74-1l-82-9l-97-19l-89-24l-79-28l-73-35l-67-39l-70-48l-67-54l-69-63l-64-65l-64-71l-163-204l-41-42l-41-36l-58-39l-56-24l-28-8l-30-4l-28-1l-30 2l-39 9l-39 15l-38 21l-39 27l-34 30l-35 34l-6 10l-1 8l1 26l14 44l11 20l100 157l115 161l76 96z"/>
<path fill="#00ff8b" d="M3232 2151l2-3l4-5l8-8l15-19l32-38l64-82l143-193l47-94l46-86l-88 149l-91 139l-91 127zM1381 2467l282 51l236 36l146 19l251 27l215 25l77 4l69-4l62-12l30-10l29-12l-56 15l-65 6l-74-1l-82-9l-97-19l-89-24l-79-28l-73-35l-67-39l-70-48l-67-54l-69-63l-64-65l-64-71l-163-204l-41-42l-41-36l-58-39l-56-24l-28-8l-30-4l-28-1l-30 2l-39 9l-39 15l-38 21l-39 27l-34 30l-35 34l-6 10l-1 8l1 26l14 44l11 20l100 157l119 166z"/>
<path fill="#00ff83" d="M3244 2136l2-2l2-2l5-6l6-8l14-16l29-36l63-81l137-186l47-94l44-82l-85 144l-88 135l-88 124zM1377 2463l286 51l236 37l151 20l461 53l79 4l68-4l61-12l30-10l29-11l-56 15l-65 6l-74-1l-82-9l-97-19l-89-24l-79-28l-73-35l-67-39l-70-48l-67-54l-69-63l-64-65l-64-71l-163-204l-41-42l-39-34l-58-40l-30-15l-28-10l-28-8l-28-4l-30-1l-28 2l-41 9l-39 15l-38 21l-39 27l-34 30l-35 34l-6 10l-1 8l1 26l14 44l11 20l97 151l118 167z"/>
<path fill="#00ff7c" d="M3593 1623l-82 139l-85 131l-85 120l-85 109l117-148l131-179l45-90zM1373 2458l291 53l235 37l150 20l458 54l81 4l69-3l63-12l30-9l14-6l14-5l-56 15l-65 6l-74-1l-82-9l-97-19l-89-24l-79-28l-73-35l-67-39l-70-48l-67-54l-69-63l-64-65l-64-71l-163-204l-41-42l-39-34l-56-38l-28-15l-30-12l-28-7l-30-5l-28-1l-28 2l-39 8l-38 14l-39 20l-41 29l-34 29l-37 36l-6 10l-1 8l1 26l14 44l11 20l97 151l118 167z"/>
<path fill="#00ff74" d="M3271 2104l1-2l2-2l2-3l7-8l14-17l27-35l56-74l126-172l45-90l42-78l-81 137l-80 124l-81 116zM1369 2453l290 53l239 39l156 21l449 54l80 5l70-3l67-12l30-9l15-5l13-5l-56 15l-65 6l-74-1l-82-9l-97-19l-90-24l-81-30l-74-35l-66-39l-68-47l-69-55l-66-61l-64-65l-64-71l-163-204l-39-40l-39-34l-58-40l-56-26l-28-8l-28-5l-27-1l-28 1l-41 8l-39 14l-41 21l-39 27l-36 31l-37 36l-6 10l-1 8l1 26l14 44l11 20l79 124l107 155z"/>
<path fill="#00ff6c" d="M3281 2091l2-3l4-4l7-8l13-18l27-34l54-72l120-166l43-85l42-78l-76 129l-79 123l-79 114zM1366 2448l288 54l244 39l154 22l448 55l83 6l70-3l64-11l30-8l15-5l7-3l4-1l4-2l-55 15l-65 6l-74-1l-82-9l-97-19l-90-24l-81-30l-74-35l-66-39l-68-47l-69-55l-66-61l-64-65l-64-71l-163-204l-39-40l-39-34l-55-39l-56-26l-28-8l-28-6l-28-1l-28 1l-39 7l-41 14l-39 20l-41 27l-36 31l-39 38l-6 10l-1 8l1 26l14 44l11 20l79 124l107 155z"/>
<path fill="#00ff64" d="M3293 2077l4-6l7-9l14-17l25-34l52-69l115-160l41-81l42-78l-73 124l-76 119l-76 110zM1363 2444l292 54l242 40l160 23l438 55l88 6l70-2l64-10l31-9l15-5l7-2l4-2l3-1l-55 15l-69 7l-74-2l-83-10l-97-19l-88-24l-78-29l-74-35l-66-39l-68-47l-69-55l-66-61l-64-65l-64-71l-163-204l-39-40l-39-34l-55-39l-56-26l-28-8l-28-6l-54 0l-41 7l-39 13l-41 21l-38 26l-39 32l-39 38l-6 10l-1 8l1 26l14 44l11 20l79 124l107 155l62 81z"/>
<path fill="#00ff5c" d="M3593 1623l-73 124l-73 115l-73 106l-72 97l99-132l111-155l41-81zM1357 2438l298 56l242 41l165 24l429 56l87 6l71-2l64-9l32-8l15-5l7-3l4-1l3-1l1-1l-57 15l-65 7l-74-2l-84-10l-96-19l-91-25l-78-29l-73-36l-67-39l-67-47l-68-55l-68-62l-64-65l-64-71l-160-201l-39-40l-39-34l-55-39l-54-25l-54-14l-28-2l-28 1l-41 7l-41 13l-41 21l-38 26l-39 32l-39 38l-6 10l-1 8l1 26l14 44l11 20l79 124l107 155l65 86z"/>
<path fill="#00ff54" d="M3314 2050l4-6l2-3l5-5l12-18l23-30l48-65l106-149l79-151l-70 119l-70 110l-70 103zM1353 2433l297 57l247 42l163 24l427 57l86 6l72-1l65-8l32-8l15-4l7-3l4-1l4-1l1-1l-58 15l-66 6l-74-2l-83-11l-97-19l-87-24l-78-29l-74-36l-66-39l-67-47l-68-55l-68-62l-64-65l-64-71l-160-201l-39-40l-39-34l-55-39l-54-25l-54-14l-28-2l-28 1l-34 5l-35 10l-36 16l-35 21l-47 35l-45 43l-13 17l-2 15l2 19l5 22l9 22l50 84l65 98l61 88l75 101z"/>
<path fill="#00ff4c" d="M3593 1623l-67 114l-67 106l-68 101l-68 94l92-124l101-145zM1349 2429l302 57l245 43l169 25l418 57l85 7l72 0l66-8l33-7l15-4l8-3l3-1l3-1l-60 14l-67 5l-74-3l-84-11l-91-19l-88-24l-77-29l-74-36l-66-40l-67-47l-67-54l-69-63l-61-63l-64-71l-158-198l-39-41l-38-35l-54-38l-56-27l-28-8l-28-6l-54-2l-34 5l-37 11l-36 16l-35 21l-47 35l-45 43l-13 17l-2 15l2 19l5 22l9 22l47 78l64 99l65 93l79 105z"/>
<path fill="#00ff44" d="M3593 1623l-64 109l-67 106l-63 95l-66 91l88-121l97-138zM1345 2424l301 58l250 44l167 25l414 58l86 8l73 0l67-7l32-7l16-4l8-2l3-1l2-1l-59 13l-68 5l-75-4l-83-11l-95-20l-86-24l-74-29l-74-36l-66-40l-67-47l-67-55l-66-60l-61-63l-64-71l-158-198l-39-41l-38-35l-54-38l-54-26l-54-14l-28-3l-28 0l-36 5l-35 10l-34 15l-37 21l-47 36l-47 44l-13 17l-2 15l2 19l5 22l9 22l47 78l64 99l65 93l83 110z"/>
<path fill="#00ff3c" d="M3344 2009l6-7l4-6l11-14l20-28l42-59l93-134l73-138l-61 104l-64 102l-60 91zM1341 2419l306 59l248 45l173 27l401 57l84 8l74 1l67-5l31-6l15-3l7-2l5-1l2-1l-60 12l-69 3l-76-5l-83-12l-94-21l-81-24l-73-28l-71-36l-66-40l-66-47l-65-53l-66-61l-61-62l-64-71l-158-198l-36-39l-39-35l-54-38l-56-28l-54-14l-54-3l-36 5l-37 10l-34 15l-37 21l-47 36l-47 44l-13 17l-2 15l2 19l5 22l9 22l47 78l64 99l65 93l86 115z"/>
<path fill="#00ff34" d="M3353 1997l6-7l4-6l9-13l20-28l40-57l91-129l70-134l-119 197l-60 91zM1337 2413l310 62l248 44l171 28l393 57l88 10l71 2l65-4l29-5l17-3l8-1l6-2l-60 10l-70 2l-75-6l-85-13l-88-21l-81-24l-69-28l-71-35l-63-39l-67-48l-67-54l-66-62l-61-62l-64-72l-155-194l-36-39l-39-35l-54-38l-54-27l-54-15l-53-3l-35 4l-36 10l-37 15l-37 21l-47 35l-47 44l-9 9l-6 10l-2 15l2 19l5 22l9 22l43 72l65 99l68 99z"/>
<path fill="#00ff2c" d="M3362 1984l6-7l4-6l10-13l18-26l38-55l87-124l68-130l-116 192zM1333 2409l309 61l247 45l176 29l384 58l83 9l72 4l66-2l30-4l17-3l8-1l5-1l1 0l-63 8l-68 0l-78-7l-86-15l-86-20l-75-24l-70-29l-67-35l-64-39l-66-48l-64-53l-66-62l-61-62l-61-69l-155-194l-36-39l-39-35l-54-38l-52-26l-53-16l-54-3l-37 4l-36 10l-37 15l-37 21l-47 35l-47 44l-9 9l-6 10l-2 15l2 19l5 22l9 22l40 67l64 99l68 99z"/>
<path fill="#00ff24" d="M3372 1972l4-6l5-7l10-14l17-25l38-55l81-117l66-125l-111 185zM1330 2404l302 61l251 46l180 30l370 57l88 11l73 5l63-1l31-3l13-1l8-1l5-1l3-1l-64 7l-70-2l-78-9l-85-15l-81-21l-74-24l-66-28l-67-35l-64-40l-63-47l-64-53l-67-62l-60-62l-60-69l-151-189l-38-41l-37-33l-52-38l-51-26l-54-17l-52-4l-36 3l-37 9l-39 15l-36 20l-48 34l-47 43l-13 14l-6 10l-2 15l2 19l5 22l9 22l18 32l122 187z"/>
<path fill="#00ff1c" d="M3486 1801l-104 156l1-2l2-3l4-6l9-11l18-27l36-51l77-113l64-121zM1326 2399l307 62l249 47l180 31l355 56l90 12l72 6l64 0l30-1l16-2l7-1l2 0l3 0l-64 4l-70-3l-80-10l-84-17l-78-21l-70-24l-65-28l-64-35l-64-40l-63-47l-64-54l-64-60l-57-60l-61-68l-150-189l-36-39l-37-33l-54-40l-51-26l-52-16l-52-5l-36 3l-39 9l-37 14l-36 20l-47 33l-48 43l-15 16l-6 10l-2 15l2 19l5 22l9 22l18 32l118 182l61 85z"/>
<path fill="#00ff14" d="M3390 1946l4-6l3-4l9-13l17-25l34-49l74-109l62-117l-101 169zM1323 2394l305 63l248 47l184 32l336 54l93 14l70 7l61 2l29 0l14-1l9 0l5-1l2 0l-62 2l-73-5l-79-12l-85-19l-72-20l-65-24l-62-28l-64-35l-62-40l-62-47l-61-52l-64-60l-57-60l-58-65l-150-189l-36-39l-37-33l-52-38l-51-28l-52-16l-51-5l-39 3l-37 8l-39 15l-36 20l-47 33l-48 43l-15 16l-6 10l-2 15l2 19l5 22l9 22l14 26l122 188l65 90z"/>
<path fill="#00ff0c" d="M3399 1933l8-12l7-10l16-22l33-49l70-104l60-113l-97 163zM1319 2389l438 89l341 62l392 63l91 9l39 1l21 0l9 0l3 0l3-1l-64 0l-70-7l-82-14l-79-18l-67-21l-64-24l-58-28l-61-34l-61-40l-60-46l-61-51l-64-61l-57-60l-58-66l-147-185l-36-39l-35-31l-51-39l-52-28l-52-16l-51-6l-39 2l-37 8l-36 14l-39 20l-47 34l-48 42l-17 18l-6 10l-2 15l2 19l5 22l9 22l14 26l122 188l65 90z"/>
<path fill="#00ff04" d="M3593 1623l-94 158l-93 142l129-191zM1316 2385l414 85l327 61l411 68l87 11l37 2l20 1l8 0l2 0l7 0l-63-3l-71-9l-79-15l-77-20l-61-19l-60-24l-59-29l-57-33l-58-39l-60-47l-61-52l-61-58l-54-57l-58-66l-145-182l-34-37l-37-35l-51-39l-52-28l-52-17l-51-6l-39 2l-39 8l-36 14l-39 20l-47 34l-48 42l-17 18l-6 10l-2 15l2 19l5 22l20 42l122 188l68 96z"/>
<path fill="#00ff00" d="M3593 1623l-88 149l-91 139l123-184zM1312 2380l408 84l313 60l419 72l84 11l36 4l18 1l8 0l5 0l1 0l5 1l-65-5l-70-11l-79-16l-70-19l-60-20l-57-24l-58-29l-54-32l-61-42l-57-45l-58-50l-61-58l-55-58l-57-66l-142-178l-34-37l-37-35l-49-37l-52-29l-51-17l-50-7l-39 1l-38 8l-39 14l-37 19l-49 34l-48 42l-19 20l-6 10l-2 15l2 19l5 22l20 42l122 188l68 96z"/>
<path fill="#04ff00" d="M3544 1707l31-52l18-32l-25 43zM1735 2124l-123-157l-37-40l-38-37l-39-30l-39-25l-37-17l-38-13l-39-6l-39-1l-41 6l-38 13l-41 19l-50 33l-49 43l-24 24l-6 10l-2 15l2 19l5 22l20 42l82 130l81 117l714 173l207 54l165 46l-91-32l-83-40l-83-49l-84-63l-85-74l-85-85z"/>
<path fill="#0cff00" d="M3551 1696l27-46l15-27zM1734 2122l-122-155l-37-40l-38-37l-39-30l-39-25l-37-17l-38-13l-39-6l-39-1l-41 6l-38 13l-41 19l-50 33l-49 43l-24 24l-6 10l-2 15l2 19l5 22l20 42l79 124l80 117l704 173l209 55l167 48l-88-32l-83-40l-82-50l-83-63l-83-73l-85-85z"/>
<path fill="#14ff00" d="M3558 1683l23-37l12-23l-19 33zM1734 2122l-122-155l-37-40l-38-37l-39-30l-39-25l-37-17l-38-13l-39-6l-39-1l-41 6l-38 13l-41 19l-50 33l-49 43l-24 24l-6 10l-2 15l2 19l5 22l20 42l79 124l76 112l393 95l302 76l216 58l164 49l-85-31l-83-41l-82-51l-81-62l-82-72l-82-83z"/>
<path fill="#1cff00" d="M3565 1671l18-30l10-18zM1732 2120l-120-153l-37-40l-38-37l-39-30l-39-25l-37-17l-38-13l-39-6l-39-1l-41 6l-38 13l-41 19l-50 33l-49 43l-24 24l-6 10l-2 15l2 19l5 22l20 42l75 119l76 111l388 95l297 76l218 59l167 51l-85-32l-80-41l-82-52l-81-62l-81-71l-80-83z"/>
<path fill="#24ff00" d="M1732 2120l-120-153l-37-40l-38-37l-39-30l-39-25l-37-17l-38-13l-39-6l-39-1l-41 6l-38 13l-41 19l-50 33l-49 43l-24 24l-6 10l-2 15l2 19l5 22l20 42l72 114l75 110l390 96l291 76l220 61l164 51l-82-32l-80-41l-79-51l-82-63l-78-70l-82-84z"/>
<path fill="#2cff00" d="M1732 2120l-120-153l-37-40l-38-37l-39-30l-39-25l-37-17l-38-13l-39-6l-39-1l-41 6l-38 13l-41 19l-50 33l-49 43l-24 24l-6 10l-2 15l2 19l5 22l20 42l72 114l71 104l385 96l293 77l214 60l169 55l-81-33l-79-42l-79-51l-79-61l-78-71l-79-81z"/>
<path fill="#34ff00" d="M1729 2117l-117-150l-37-40l-38-37l-39-30l-39-25l-37-17l-38-13l-39-6l-39-1l-41 6l-38 13l-41 19l-50 33l-49 43l-24 24l-6 10l-2 15l2 19l5 22l20 42l68 108l71 104l380 96l294 77l215 63l168 55l-79-33l-79-42l-79-52l-76-60l-78-71l-79-81z"/>
<path fill="#3cff00" d="M1729 2117l-117-150l-37-40l-38-37l-39-30l-39-25l-37-17l-38-13l-39-6l-39-1l-41 6l-38 13l-41 19l-50 33l-49 43l-24 24l-6 10l-2 15l2 19l5 22l20 42l68 108l66 99l377 94l288 77l223 66l166 56l-80-34l-76-42l-79-53l-76-60l-75-69l-79-82z"/>
<path fill="#44ff00" d="M1726 2113l-114-146l-37-40l-38-37l-39-30l-39-25l-37-17l-38-13l-39-6l-39-1l-41 6l-38 13l-41 19l-50 33l-49 43l-24 24l-6 10l-2 15l2 19l5 22l20 42l64 103l66 98l378 96l290 78l218 65l165 57l-79-34l-76-43l-76-51l-76-60l-75-70l-77-79z"/>
<path fill="#4cff00" d="M1726 2113l-114-146l-37-40l-38-37l-39-30l-39-25l-37-17l-38-13l-39-6l-39-1l-41 6l-38 13l-41 19l-50 33l-49 43l-24 24l-6 10l-2 15l2 19l5 22l20 42l64 103l62 92l380 97l284 78l219 66l164 58l-74-33l-76-43l-76-51l-76-61l-75-70l-76-79z"/>
<path fill="#54ff00" d="M1726 2113l-114-146l-37-40l-38-37l-39-30l-39-25l-37-17l-38-13l-39-6l-39-1l-41 6l-38 13l-41 19l-50 33l-49 43l-24 24l-6 10l-2 15l2 19l5 22l20 42l122 189l375 97l285 78l218 68l166 59l-76-35l-73-41l-74-51l-75-61l-72-67l-76-79z"/>
<path fill="#5cff00" d="M1724 2110l-112-143l-37-40l-38-37l-39-30l-39-25l-37-17l-38-13l-39-6l-39-1l-41 6l-38 13l-41 19l-50 33l-49 43l-24 24l-6 10l-2 15l2 19l5 22l20 42l118 183l370 96l286 80l219 68l166 61l-75-35l-73-42l-73-51l-75-61l-74-69l-72-76z"/>
<path fill="#64ff00" d="M1723 2109l-111-142l-37-40l-38-37l-39-30l-39-25l-37-17l-38-13l-39-6l-39-1l-41 6l-38 13l-41 19l-50 33l-49 43l-24 24l-6 10l-2 15l2 19l5 22l20 42l114 177l372 97l280 79l217 69l90 32l79 31l-75-35l-72-43l-73-52l-73-60l-73-68l-72-77z"/>
<path fill="#6cff00" d="M1723 2109l-111-142l-37-40l-38-37l-39-30l-39-25l-37-17l-38-13l-39-6l-39-1l-41 6l-38 13l-41 19l-50 33l-49 43l-24 24l-6 10l-2 15l2 19l5 22l20 42l110 171l367 97l288 82l216 70l87 31l77 32l-74-36l-69-42l-73-52l-73-60l-73-69l-71-76z"/>
<path fill="#74ff00" d="M1723 2109l-111-142l-37-40l-38-37l-39-30l-39-25l-37-17l-38-13l-39-6l-39-1l-41 6l-38 13l-41 19l-50 33l-49 43l-24 24l-6 10l-2 15l2 19l5 22l20 42l106 166l368 97l283 81l217 71l86 32l78 33l-73-37l-69-42l-73-53l-70-58l-71-67l-71-76z"/>
<path fill="#7cff00" d="M1723 2109l-111-142l-37-40l-38-37l-39-30l-39-25l-37-17l-38-13l-39-6l-39-1l-41 6l-38 13l-41 19l-50 33l-49 43l-24 24l-6 10l-2 15l2 19l5 22l14 32l108 170l363 96l284 83l217 72l88 33l77 33l-72-37l-70-43l-69-51l-70-59l-70-66l-69-74z"/>
<path fill="#83ff00" d="M1720 2105l-108-138l-37-40l-38-37l-39-30l-39-25l-37-17l-38-13l-39-6l-39-1l-41 6l-38 13l-41 19l-50 33l-49 43l-24 24l-6 10l-2 15l2 19l5 22l9 22l36 61l73 113l365 98l285 83l215 73l85 32l77 34l-69-36l-70-43l-69-51l-70-59l-70-67l-69-74z"/>
<path fill="#8bff00" d="M1720 2105l-108-138l-37-40l-38-37l-39-30l-39-25l-37-17l-38-13l-39-6l-39-1l-41 6l-38 13l-41 19l-50 33l-49 43l-24 24l-6 10l-2 15l2 19l5 22l9 22l36 61l69 107l366 99l279 83l217 73l86 34l76 33l-68-35l-70-44l-69-52l-68-58l-69-66l-69-75z"/>
<path fill="#93ff00" d="M1720 2105l-108-138l-37-40l-38-37l-39-30l-39-25l-37-17l-38-13l-39-6l-39-1l-41 6l-38 13l-41 19l-50 33l-49 43l-24 24l-6 10l-2 15l2 19l5 22l9 22l32 55l69 107l361 98l280 84l114 37l104 38l87 34l76 34l-68-36l-67-42l-66-50l-70-60l-69-66l-67-73z"/>
<path fill="#9bff00" d="M1720 2105l-108-138l-37-40l-38-37l-39-30l-39-25l-37-17l-38-13l-39-6l-39-1l-41 6l-38 13l-41 19l-50 33l-49 43l-24 24l-6 10l-2 15l2 19l5 22l9 22l29 49l69 107l362 99l281 85l212 74l87 36l76 34l-67-36l-67-44l-66-50l-67-58l-67-64l-66-72z"/>
<path fill="#a3ff00" d="M1717 2102l-105-135l-37-40l-38-37l-39-30l-39-25l-37-17l-38-13l-39-6l-39-1l-41 6l-38 13l-41 19l-50 33l-49 43l-24 24l-6 10l-2 15l2 19l5 22l9 22l25 44l69 106l363 100l276 84l115 39l98 37l88 36l76 35l-65-36l-66-43l-66-51l-67-57l-67-65l-66-72z"/>
<path fill="#abff00" d="M1717 2102l-105-135l-37-40l-38-37l-39-30l-39-25l-37-17l-38-13l-39-6l-39-1l-41 6l-38 13l-41 19l-50 33l-49 43l-24 24l-6 10l-2 15l2 19l5 22l9 22l22 38l68 106l358 100l283 87l113 38l98 37l86 36l76 36l-64-36l-67-44l-63-49l-67-58l-64-62l-66-72z"/>
<path fill="#b3ff00" d="M1717 2102l-105-135l-37-40l-38-37l-39-30l-39-25l-37-17l-38-13l-39-6l-39-1l-41 6l-38 13l-41 19l-50 33l-49 43l-24 24l-6 10l-2 15l2 19l5 22l9 22l22 38l64 100l360 101l277 86l116 40l100 38l84 36l75 36l-64-37l-64-42l-66-52l-64-56l-67-66l-63-69z"/>
<path fill="#bbff00" d="M1717 2102l-105-135l-37-40l-38-37l-39-30l-39-25l-37-17l-38-13l-39-6l-39-1l-41 6l-38 13l-41 19l-50 33l-49 43l-24 24l-6 10l-2 15l2 19l5 22l9 22l18 32l64 100l354 100l278 87l118 41l99 38l88 38l73 36l-64-37l-64-44l-64-50l-63-56l-64-63l-63-69z"/>
<path fill="#c3ff00" d="M1714 2098l-102-131l-37-40l-38-37l-39-30l-39-25l-37-17l-38-13l-39-6l-39-1l-41 6l-38 13l-41 19l-50 33l-49 43l-24 24l-6 10l-2 15l2 19l5 22l9 22l78 127l356 100l279 88l110 39l101 39l87 38l74 37l-63-37l-64-44l-64-51l-60-54l-64-63l-63-69z"/>
<path fill="#cbff00" d="M1714 2098l-102-131l-37-40l-38-37l-39-30l-39-25l-37-17l-38-13l-39-6l-39-1l-41 6l-38 13l-41 19l-50 33l-49 43l-24 24l-6 10l-2 15l2 19l5 22l9 22l74 121l350 99l280 89l111 39l102 40l87 39l75 38l-60-36l-64-44l-61-49l-63-57l-61-60l-63-69z"/>
<path fill="#d3ff00" d="M1714 2098l-102-131l-37-40l-38-37l-39-30l-39-25l-37-17l-38-13l-39-6l-39-1l-41 6l-38 13l-41 19l-50 33l-49 43l-24 24l-6 10l-2 15l2 19l5 22l9 22l70 115l359 102l274 88l112 41l100 39l85 39l74 38l-61-37l-61-43l-61-48l-63-57l-61-61l-64-70z"/>
<path fill="#dbff00" d="M1711 2094l-99-127l-37-40l-38-37l-39-30l-39-25l-37-17l-38-13l-39-6l-39-1l-41 6l-38 13l-41 19l-50 33l-49 43l-24 24l-6 10l-2 15l2 19l5 22l9 22l67 109l352 101l275 89l113 41l101 41l85 38l75 40l-61-38l-61-43l-61-49l-62-56l-62-63l-61-67z"/>
<path fill="#e3ff00" d="M1711 2094l-99-127l-37-40l-38-37l-39-30l-39-25l-37-17l-38-13l-39-6l-39-1l-41 6l-38 13l-41 19l-50 33l-49 43l-24 24l-6 10l-2 15l2 19l5 22l9 22l63 103l354 102l146 46l130 44l113 42l96 39l87 40l73 39l-59-36l-60-44l-61-49l-60-55l-61-61l-61-67z"/>
<path fill="#ebff00" d="M1711 2094l-99-127l-37-40l-38-37l-39-30l-39-25l-37-17l-38-13l-39-6l-39-1l-41 6l-38 13l-41 19l-50 33l-49 43l-24 24l-6 10l-2 15l2 19l5 22l9 22l59 97l355 103l147 47l123 42l114 42l100 42l84 39l74 40l-59-37l-60-44l-58-48l-60-55l-58-58l-61-67z"/>
<path fill="#f3ff00" d="M1711 2094l-99-127l-37-40l-38-37l-39-30l-39-25l-37-17l-38-13l-39-6l-39-1l-41 6l-38 13l-41 19l-50 33l-49 43l-24 24l-6 10l-2 15l2 19l5 22l9 22l55 91l350 102l147 47l131 45l112 42l96 41l87 41l72 39l-59-37l-57-43l-60-49l-58-54l-58-58l-61-68z"/>
<path fill="#fbff00" d="M1711 2094l-99-127l-37-40l-38-37l-39-30l-39-25l-37-17l-38-13l-39-6l-39-1l-41 6l-38 13l-41 19l-50 33l-49 43l-24 24l-6 10l-2 15l2 19l5 22l9 22l51 85l351 103l148 48l124 43l115 43l98 42l84 40l73 41l-59-39l-57-42l-58-49l-57-53l-58-59l-58-64z"/>
<path fill="#fffb00" d="M1708 2090l-96-123l-37-40l-38-37l-39-30l-39-25l-37-17l-38-13l-39-6l-39-1l-41 6l-38 13l-41 19l-50 33l-49 43l-24 24l-6 10l-2 15l2 19l5 22l9 22l47 79l352 104l142 46l131 46l111 42l99 43l85 41l72 41l-57-38l-58-43l-57-48l-57-54l-58-59l-58-64z"/>
<path fill="#fff300" d="M1708 2090l-96-123l-37-40l-38-37l-39-30l-39-25l-37-17l-38-13l-39-6l-39-1l-41 6l-38 13l-41 19l-50 33l-49 43l-24 24l-6 10l-2 15l2 19l5 22l9 22l38 64l352 105l142 47l126 45l110 43l99 44l84 42l74 43l-55-37l-56-44l-56-47l-55-52l-57-59l-55-62z"/>
<path fill="#ffeb00" d="M1759 2153l-147-186l-37-40l-38-37l-39-30l-39-25l-37-17l-38-13l-39-6l-39-1l-41 6l-38 13l-41 19l-50 33l-49 43l-24 24l-6 10l-2 15l2 19l5 22l9 22l28 49l352 107l143 48l127 46l111 45l95 42l83 43l71 44l-52-37l-55-43l-54-48l-55-52l-51-54z"/>
<path fill="#ffe300" d="M1754 2146l-142-179l-37-40l-38-37l-39-30l-39-25l-37-17l-38-13l-39-6l-39-1l-41 6l-38 13l-41 19l-50 33l-49 43l-24 24l-6 10l-2 15l2 19l5 22l9 22l19 34l343 105l145 49l128 48l113 46l96 45l81 43l72 44l-53-38l-53-42l-51-46l-52-50z"/>
<path fill="#ffdb00" d="M1753 2146l-141-179l-37-40l-38-37l-39-30l-39-25l-37-17l-38-13l-39-6l-39-1l-41 6l-38 13l-41 19l-50 33l-49 43l-24 24l-6 10l-2 15l2 19l5 22l19 40l180 55l162 52l146 51l125 47l111 46l95 45l83 45l71 46l-49-37l-52-42l-100-94z"/>
<path fill="#ffd300" d="M1747 2138l-135-171l-37-40l-38-37l-39-30l-39-25l-37-17l-38-13l-39-6l-39-1l-41 6l-38 13l-41 19l-50 33l-49 43l-24 24l-6 10l-2 15l2 19l5 22l11 26l184 56l156 51l147 52l123 47l107 46l98 47l82 46l71 46l-51-39l-49-41l-97-93z"/>
<path fill="#ffcb00" d="M1744 2135l-132-168l-37-40l-38-37l-39-30l-39-25l-37-17l-38-13l-39-6l-39-1l-41 6l-38 13l-41 19l-50 33l-49 43l-24 24l-6 10l-2 15l2 19l10 33l179 56l157 52l140 50l128 50l110 47l95 47l81 47l71 48l-96-79l-94-91z"/>
<path fill="#ffc300" d="M1741 2131l-129-164l-37-40l-38-37l-39-30l-39-25l-37-17l-38-13l-39-6l-39-1l-41 6l-38 13l-41 19l-50 33l-49 43l-24 24l-6 10l-2 15l7 38l179 57l158 53l142 51l118 47l111 49l94 48l80 47l71 49l-92-77l-91-89z"/>
<path fill="#ffbb00" d="M1738 2128l-126-161l-37-40l-38-37l-39-30l-39-25l-37-17l-38-13l-39-6l-39-1l-41 6l-38 13l-41 19l-50 33l-49 43l-24 24l-6 10l-2 15l3 25l200 64l168 57l153 59l127 53l89 43l77 42l70 43l60 43l-88-75l-88-88z"/>
<path fill="#ffb300" d="M1735 2124l-123-157l-37-40l-38-37l-39-30l-39-25l-37-17l-38-13l-39-6l-39-1l-41 6l-38 13l-41 19l-50 33l-49 43l-24 24l-6 10l-2 15l1 12l184 59l161 56l145 55l123 52l98 46l84 46l74 46l64 47l-84-74l-85-85z"/>
<path fill="#ffab00" d="M1732 2120l-120-153l-37-40l-38-37l-39-30l-39-25l-37-17l-36-12l-39-7l-39-1l-40 6l-39 12l-41 19l-50 32l-47 41l-28 28l-6 10l-1 14l172 56l154 54l134 51l119 51l107 50l90 49l78 49l67 50l-81-72l-82-84z"/>
<path fill="#ffa300" d="M1729 2117l-117-150l-37-40l-36-35l-39-31l-37-23l-38-19l-37-13l-37-7l-38-1l-37 4l-39 11l-38 16l-41 24l-41 32l-54 51l-6 12l174 58l148 53l132 51l116 49l103 50l89 49l79 50l66 52l-77-71l-79-81z"/>
<path fill="#ff9b00" d="M1726 2113l-112-143l-37-41l-36-35l-37-30l-38-25l-37-19l-37-13l-36-7l-37-2l-36 3l-37 9l-37 14l-36 20l-39 27l-39 33l-33 33l165 56l149 54l133 53l112 49l103 50l88 50l77 50l63 50l-74-69l-76-79z"/>
<path fill="#ff9300" d="M1723 2109l-109-139l-37-41l-36-35l-35-28l-36-25l-37-19l-36-13l-37-9l-36-2l-37 2l-37 8l-34 13l-37 19l-36 24l-37 30l-35 34l159 54l143 53l127 51l116 52l98 49l87 50l76 51l63 51l-72-68l-72-77z"/>
<path fill="#ff8b00" d="M1720 2105l-104-133l-36-41l-35-33l-36-30l-37-25l-34-19l-37-14l-37-9l-36-3l-35 1l-34 7l-37 12l-34 17l-37 23l-36 28l-35 33l161 56l137 51l120 50l112 51l98 50l85 50l73 50l62 51l-69-66l-69-74z"/>
<path fill="#ff8300" d="M1717 2102l-101-130l-36-41l-35-33l-34-29l-35-24l-36-20l-35-14l-34-9l-35-4l-34 1l-34 5l-37 11l-37 17l-34 20l-34 25l-37 33l147 52l139 52l121 51l110 51l93 49l84 50l71 50l63 52l-67-64l-66-72z"/>
<path fill="#ff7c00" d="M1714 2098l-98-126l-34-38l-35-34l-34-29l-35-24l-34-20l-34-14l-35-10l-34-5l-35 0l-34 5l-35 10l-34 14l-34 19l-35 25l-35 30l148 53l133 52l115 49l107 51l90 48l82 50l72 52l59 51l-64-64l-63-69z"/>
<path fill="#ff7400" d="M1651 2016l-67-80l-35-34l-34-29l-34-25l-35-20l-34-14l-33-10l-32-5l-34-1l-35 4l-34 8l-35 14l-34 18l-34 24l-33 26l143 52l126 50l117 51l102 50l89 48l80 51l70 50l59 52l-62-62l-61-67l-60-73z"/>
<path fill="#ff6c00" d="M1651 2016l-67-80l-35-34l-32-28l-32-23l-35-20l-34-16l-32-10l-33-6l-34-1l-32 3l-35 7l-34 13l-32 16l-33 21l-33 26l137 51l127 51l110 49l102 51l89 50l75 48l66 49l58 52l-58-60l-59-65l-57-70z"/>
<path fill="#ff6400" d="M1651 2016l-65-78l-32-32l-33-28l-32-24l-32-20l-32-15l-35-12l-32-7l-34-2l-33 2l-32 6l-32 11l-33 15l-32 19l-34 24l138 53l121 50l104 48l98 49l87 50l75 49l64 49l56 51l-54-56l-55-62l-54-66z"/>
<path fill="#ff5c00" d="M1756 2149l-170-211l-62-59l-33-24l-32-20l-32-16l-32-11l-33-7l-32-3l-32 1l-33 5l-32 10l-32 14l-32 18l-31 21l132 52l115 48l105 49l94 49l83 48l74 49l64 50l55 51z"/>
<path fill="#ff5400" d="M1750 2142l-162-201l-62-60l-32-24l-31-19l-32-17l-32-12l-32-8l-31-3l-30 0l-32 5l-32 8l-30 12l-33 17l-30 20l126 50l111 48l103 48l90 48l79 47l73 49l63 50l55 52z"/>
<path fill="#ff4c00" d="M1744 2135l-154-192l-62-60l-30-23l-32-21l-31-16l-30-12l-30-8l-32-5l-30 0l-30 3l-33 7l-30 11l-30 15l-30 18l119 49l109 48l100 48l89 48l78 47l69 48l62 50l52 50z"/>
<path fill="#ff4400" d="M1738 2128l-148-185l-58-56l-60-44l-30-17l-30-12l-30-9l-31-6l-30-1l-30 2l-30 6l-30 9l-30 13l-30 17l121 50l103 47l93 46l84 46l77 48l68 48l59 48l52 51z"/>
<path fill="#ff3c00" d="M1734 2122l-141-177l-59-57l-58-43l-30-17l-30-13l-30-9l-28-6l-30-2l-28 1l-30 4l-28 8l-30 12l-30 15l115 49l101 47l90 46l84 47l74 47l64 46l58 49l49 49z"/>
<path fill="#ff3400" d="M1729 2117l-136-172l-56-55l-56-42l-28-16l-31-14l-27-10l-28-7l-28-3l-31 0l-28 3l-30 7l-56 24l108 47l98 46l87 45l81 47l71 46l64 47l54 47l49 49z"/>
<path fill="#ff2c00" d="M1723 2109l-126-159l-56-56l-56-43l-56-31l-28-10l-28-7l-28-4l-28-1l-28 2l-28 6l-55 20l101 45l95 45l85 45l78 46l68 46l63 47l54 47l46 48z"/>
<path fill="#ff2400" d="M1717 2102l-120-152l-54-54l-54-42l-54-31l-53-18l-54-7l-54 5l-55 17l98 45l89 44l81 44l76 46l67 46l59 45l51 45l46 48z"/>
<path fill="#ff1c00" d="M1714 2098l-117-148l-52-52l-51-41l-52-31l-52-19l-54-9l-51 3l-54 14l97 45l84 43l75 42l71 44l63 43l58 46l51 45l45 48z"/>
<path fill="#ff1400" d="M1708 2090l-107-135l-52-53l-51-42l-50-31l-51-20l-50-10l-51 0l-51 11l90 43l80 42l74 43l70 44l62 44l54 44l47 44l43 46z"/>
<path fill="#ff0c00" d="M1755 2148l-152-191l-49-51l-50-42l-49-31l-50-22l-49-11l-50-2l-47 8l83 41l80 43l69 40l65 43l59 43l51 42l47 44z"/>
<path fill="#ff0400" d="M1745 2136l-142-179l-47-49l-47-40l-48-32l-47-22l-47-13l-48-3l-45 5l80 41l73 40l65 39l62 42l55 40l50 43l46 44z"/>
<path fill="#ff0000" d="M1735 2124l-130-164l-45-48l-45-39l-45-32l-45-22l-46-15l-45-6l-45 2l142 78l65 40l58 40l54 41l47 41l43 42z"/>
<path fill="#ff0404" d="M1721 2107l-113-145l-43-46l-41-37l-43-31l-41-23l-43-16l-43-10l-42-1l130 74l57 37l55 39l48 39l43 39l40 40z"/>
<path fill="#ff0c0c" d="M1719 2104l-111-142l-41-44l-41-37l-43-32l-43-24l-41-16l-41-9l-41-2l128 74l110 76l46 37l44 39l40 40z"/>
<path fill="#ff1414" d="M1716 2101l-106-136l-41-45l-41-37l-41-31l-41-24l-41-17l-41-10l-43-3l128 74l106 74l47 38l42 39l38 38z"/>
<path fill="#ff1c1c" d="M1714 2098l-102-131l-41-44l-41-38l-41-31l-41-25l-41-17l-40-11l-41-3l123 72l105 74l47 38l40 37l38 38z"/>
<path fill="#ff2424" d="M1711 2094l-99-127l-41-44l-41-38l-39-30l-38-23l-41-18l-41-12l-40-4l121 72l102 72l46 38l41 37l37 38z"/>
<path fill="#ff2c2c" d="M1709 2091l-97-124l-41-44l-39-36l-38-30l-41-25l-39-18l-39-11l-39-5l117 70l101 73l46 38l40 37l37 38z"/>
<path fill="#ff3434" d="M1706 2088l-94-121l-39-42l-39-37l-38-30l-39-24l-39-18l-39-12l-38-6l116 71l97 70l83 73l37 38z"/>
<path fill="#ff3c3c" d="M1704 2085l-92-118l-37-40l-38-37l-39-30l-39-25l-37-17l-38-13l-38-6l110 68l98 70l82 73l35 36z"/>
<path fill="#ff4444" d="M1701 2082l-89-115l-37-40l-36-35l-39-31l-37-23l-38-19l-37-13l-37-7l111 70l94 68l80 72z"/>
<path fill="#ff4c4c" d="M1699 2079l-85-109l-37-41l-36-35l-37-30l-36-24l-37-19l-36-13l-39-8l107 67l93 69l77 69z"/>
<path fill="#ff5454" d="M1696 2076l-82-106l-37-41l-36-35l-35-28l-36-25l-37-19l-36-13l-36-8l105 66l90 67l76 70z"/>
<path fill="#ff5c5c" d="M1694 2072l-78-100l-36-41l-35-33l-36-30l-37-25l-34-19l-35-13l-36-10l101 65l87 67l76 69z"/>
<path fill="#ff6464" d="M1691 2069l-75-97l-36-41l-35-33l-34-29l-35-24l-34-19l-35-14l-34-9l99 64l86 66l73 67z"/>
<path fill="#ff6c6c" d="M1651 2016l-67-80l-35-34l-34-29l-34-25l-35-20l-34-14l-34-10l97 63l82 64l71 66l61 69z"/>
<path fill="#ff7474" d="M1651 2016l-67-80l-35-34l-32-28l-32-23l-35-20l-32-15l-34-11l95 63l80 64l68 63l59 68z"/>
<path fill="#ff7c7c" d="M1651 2016l-65-78l-32-32l-33-28l-32-24l-32-20l-32-15l-35-12l90 61l79 62l68 64l57 66z"/>
<path fill="#ff8383" d="M1651 2016l-65-78l-62-59l-33-24l-30-19l-32-16l-32-11l89 61l75 60l65 62l55 65z"/>
<path fill="#ff8b8b" d="M1679 2053l-89-110l-62-60l-30-23l-32-21l-31-16l-32-12l86 59l72 59l64 62z"/>
<path fill="#ff9393" d="M1677 2050l-87-107l-60-58l-30-24l-30-20l-30-16l-30-12l81 57l72 59l61 60z"/>
<path fill="#ff9b9b" d="M1674 2047l-81-102l-59-57l-58-43l-30-17l-29-12l78 55l68 57l61 60z"/>
<path fill="#ffa3a3" d="M1672 2044l-77-96l-56-56l-56-43l-28-16l-30-14l74 54l66 55l58 58z"/>
<path fill="#ffabab" d="M1669 2041l-72-91l-56-56l-54-42l-54-30l71 53l63 54l55 56z"/>
<path fill="#ffb3b3" d="M1667 2038l-70-88l-52-52l-51-41l-53-31l69 52l59 51l52 54z"/>
<path fill="#ffbbbb" d="M1664 2034l-63-79l-52-53l-49-41l-50-31l65 50l55 50l51 52z"/>
<path fill="#ffc3c3" d="M1662 2031l-59-74l-47-49l-47-40l-50-33l60 48l53 47l48 50z"/>
<path fill="#ffcbcb" d="M1660 2028l-55-68l-45-48l-45-39l-45-32l57 47l49 45l45 48z"/>
<path fill="#ffd3d3" d="M1657 2025l-28-37l-21-26l-41-44l-43-39l-43-31l50 42l47 44l42 45z"/>
<path fill="#ffdbdb" d="M1655 2022l-24-31l-19-24l-39-42l-39-37l-40-31l47 40l41 40l38 41z"/>
<path fill="#ffe3e3" d="M1652 2018l-14-19l-9-11l-17-21l-35-38l-34-33l-34-28l79 74l33 37z"/>
<path fill="#ffebeb" d="M1633 1994l-17-22l-13-15l-26-28l-25-25l-24-21l57 55z"/>
<path fill="#fff3f3" d="M1601 1954l-15-16l-9-9l-8-9l-8-8z"/>
<path fill="#040004" d="M2676 2611l-63 2l-69-5l-74-11l-82-18l-70-19l-66-23l-59-26l-61-32l-58-36l-60-44l-61-49l-60-55l-61-61l-61-67l-60-73l-59-76l45 65l51 83l45 82l52 103l44 100l52 124l51 134l45 126l96 299l102 359l96 376l105 448l25 68l21 40l20 26l43 34l64 46l65 40l54 29l53 25l54 21l54 17l53 13l54 9l54 4l53 1l43-2l54-7l54-11l53-14l54-19l54-23l96-51l97-65l54-41l53-46l108-103l96-107l97-120l107-148l65-97l64-103l129-223l118-225l129-268l107-241l43-101l11-32l9-36l5-38l1-53l-7-44l-45-138l-52-148l-51-137l-52-126l-51-115l-45-92l-52-96l-51-84l-52-73l-51-63l-52-52l-45-36l-51-32l-45-19l-52-11l-45-1l-32 4l-32 9l-32 12l-39 21l-32 22l-32 26l-39 38l-32 35l-45 57l-45 65l-152 253l-116 172l-60 83l-61 76l-61 71l-58 62l-105 100l-119 98l-130 94l-54 34z"/>
<path fill="#0c000c" d="M2502 4451l68 52l72 49l72 41l72 34l68 25l72 20l68 12l72 6l13 0l68-37l70-35l69-30l71-28l134-44l139-34l104-87l104-103l100-113l104-132l104-148l101-157l104-178l104-193l83-164l79-166l79-174l82-192l11-32l9-36l5-38l2-37l-2-33l-6-27l-58-176l-93-253l-84-200l-41-86l-43-84l-40-73l-41-66l-41-59l-41-52l-41-45l-41-39l-43-33l-41-25l-43-18l-45-12l-43-3l-43 5l-43 12l-43 19l-43 28l-45 36l-61 62l-60 77l-56 84l-128 215l-84 128l-107 147l-105 127l-56 61l-56 55l-63 57l-65 54l-81 64l-75 54l-66 43l-62 35l-63 2l-69-5l-74-11l-82-18l-70-19l-66-23l-59-26l-61-32l-58-36l-60-44l-61-49l-60-55l-61-61l-61-67l-60-73l-59-76l46 66l47 77l45 82l48 94l45 99l47 113l48 122l47 131l52 153l49 157l101 352l97 376l112 477l25 68l14 29l14 22z"/>
<path fill="#140014" d="M2502 4451l68 52l69 47l71 41l69 33l71 27l69 20l68 12l71 7l70-40l70-35l71-33l74-29l73-26l76-23l78-21l80-17l101-88l101-101l100-115l101-130l101-144l100-158l101-172l100-187l83-164l79-166l79-174l82-192l11-32l9-36l5-38l2-37l-2-33l-6-27l-58-176l-93-253l-84-200l-41-86l-43-84l-40-73l-41-66l-41-59l-41-52l-41-45l-41-39l-43-33l-41-25l-43-18l-45-12l-43-3l-43 5l-43 12l-43 19l-43 28l-45 36l-61 62l-60 77l-56 84l-128 215l-84 128l-107 147l-105 127l-56 61l-56 55l-63 57l-65 54l-81 64l-75 54l-66 43l-62 35l-63 2l-69-5l-74-11l-82-18l-70-19l-66-23l-59-26l-61-32l-58-36l-60-44l-61-49l-60-55l-61-61l-61-67l-60-73l-59-76l46 66l47 77l45 82l48 94l45 99l47 113l48 122l47 131l52 153l49 157l101 352l97 376l112 477l25 68l14 29l14 22z"/>
<path fill="#1c001c" d="M2502 4451l65 50l68 46l68 40l68 34l65 25l68 21l68 14l66 8l75-43l75-39l75-34l77-32l81-28l80-24l82-21l87-18l99-89l97-100l97-113l101-131l97-140l97-153l97-166l100-187l83-164l79-166l79-174l82-192l11-32l9-36l5-38l2-37l-2-33l-6-27l-58-176l-93-253l-84-200l-41-86l-43-84l-40-73l-41-66l-41-59l-41-52l-41-45l-41-39l-43-33l-41-25l-43-18l-45-12l-43-3l-43 5l-43 12l-43 19l-43 28l-45 36l-61 62l-60 77l-56 84l-128 215l-84 128l-107 147l-105 127l-56 61l-56 55l-63 57l-65 54l-81 64l-75 54l-66 43l-62 35l-63 2l-69-5l-74-11l-82-18l-70-19l-66-23l-59-26l-61-32l-58-36l-60-44l-61-49l-60-55l-61-61l-61-67l-60-73l-59-76l46 66l47 77l45 82l48 94l45 99l47 113l48 122l47 131l52 153l49 157l101 352l97 376l112 477l25 68l14 29l14 22z"/>
<path fill="#240024" d="M2502 4451l65 50l64 44l65 38l65 33l64 26l65 21l64 15l66 9l77-45l78-41l82-38l81-33l84-30l83-25l91-22l92-18l96-88l97-101l93-111l97-128l97-141l97-154l97-167l93-174l83-164l79-166l79-174l82-192l11-32l9-36l5-38l2-37l-2-33l-6-27l-58-176l-93-253l-84-200l-41-86l-43-84l-40-73l-41-66l-41-59l-41-52l-41-45l-41-39l-43-33l-41-25l-43-18l-45-12l-43-3l-43 5l-43 12l-43 19l-43 28l-45 36l-61 62l-60 77l-56 84l-128 215l-84 128l-107 147l-105 127l-56 61l-56 55l-63 57l-65 54l-81 64l-75 54l-66 43l-62 35l-63 2l-69-5l-74-11l-82-18l-70-19l-66-23l-59-26l-61-32l-58-36l-60-44l-61-49l-60-55l-61-61l-61-67l-60-73l-59-76l46 66l47 77l45 82l48 94l45 99l47 113l48 122l47 131l52 153l49 157l101 352l97 376l112 477l25 68l14 29l14 22z"/>
<path fill="#2c002c" d="M2502 4451l65 50l61 42l61 36l64 34l65 27l61 20l61 15l63 10l82-49l84-45l85-40l84-34l88-30l88-26l96-23l96-18l96-90l93-101l93-112l94-125l93-137l93-149l94-161l93-174l83-164l79-166l79-174l82-192l11-32l9-36l5-38l2-37l-2-33l-6-27l-58-176l-93-253l-84-200l-41-86l-43-84l-40-73l-41-66l-41-59l-41-52l-41-45l-41-39l-43-33l-41-25l-43-18l-45-12l-43-3l-43 5l-43 12l-43 19l-43 28l-45 36l-61 62l-60 77l-56 84l-128 215l-84 128l-107 147l-105 127l-56 61l-56 55l-63 57l-65 54l-81 64l-75 54l-66 43l-62 35l-63 2l-69-5l-74-11l-82-18l-70-19l-66-23l-59-26l-61-32l-58-36l-60-44l-61-49l-60-55l-61-61l-61-67l-60-73l-59-76l46 66l47 77l45 82l48 94l45 99l47 113l48 122l47 131l52 153l49 157l101 352l97 376l112 477l25 68l14 29l14 22z"/>
<path fill="#340034" d="M2502 4451l58 44l61 43l61 37l61 32l61 27l61 22l61 16l60 11l87-53l87-47l88-41l87-36l92-32l96-28l96-22l103-19l90-86l94-102l90-109l93-126l90-132l93-150l93-162l90-167l83-164l79-166l79-174l82-192l11-32l9-36l5-38l2-37l-2-33l-6-27l-58-176l-93-253l-84-200l-41-86l-43-84l-40-73l-41-66l-41-59l-41-52l-41-45l-41-39l-43-33l-41-25l-43-18l-45-12l-43-3l-43 5l-43 12l-43 19l-43 28l-45 36l-61 62l-60 77l-56 84l-128 215l-84 128l-107 147l-105 127l-56 61l-56 55l-63 57l-65 54l-81 64l-75 54l-66 43l-62 35l-63 2l-69-5l-74-11l-82-18l-70-19l-66-23l-59-26l-61-32l-58-36l-60-44l-61-49l-60-55l-61-61l-61-67l-60-73l-59-76l46 66l47 77l45 82l48 94l45 99l47 113l48 122l47 131l52 153l49 157l101 352l97 376l112 477l25 68l14 29l14 22z"/>
<path fill="#3c003c" d="M2502 4451l58 44l61 43l57 35l57 31l62 27l57 21l57 17l59 12l91-57l90-49l90-43l92-38l95-33l100-28l100-23l110-19l89-87l90-99l89-111l90-122l90-133l90-145l89-156l90-167l83-164l79-166l79-174l82-192l11-32l9-36l5-38l2-37l-2-33l-6-27l-58-176l-93-253l-84-200l-41-86l-43-84l-40-73l-41-66l-41-59l-41-52l-41-45l-41-39l-43-33l-41-25l-43-18l-45-12l-43-3l-43 5l-43 12l-43 19l-43 28l-45 36l-61 62l-60 77l-56 84l-128 215l-84 128l-107 147l-105 127l-56 61l-56 55l-63 57l-65 54l-81 64l-75 54l-66 43l-62 35l-63 2l-69-5l-74-11l-82-18l-70-19l-66-23l-59-26l-61-32l-58-36l-60-44l-61-49l-60-55l-61-61l-61-67l-60-73l-59-76l46 66l47 77l45 82l48 94l45 99l47 113l48 122l47 131l52 153l49 157l101 352l97 376l112 477l25 68l14 29l14 22z"/>
<path fill="#440044" d="M2502 4451l54 42l57 40l58 36l57 31l58 27l57 22l58 17l54 12l91-57l95-54l94-45l98-40l100-35l100-28l109-24l111-18l88-88l86-97l87-107l89-123l90-134l86-140l86-150l90-167l83-164l79-166l79-174l82-192l11-32l9-36l5-38l2-37l-2-33l-6-27l-58-176l-93-253l-84-200l-41-86l-43-84l-40-73l-41-66l-41-59l-41-52l-41-45l-41-39l-43-33l-41-25l-43-18l-45-12l-43-3l-43 5l-43 12l-43 19l-43 28l-45 36l-61 62l-60 77l-56 84l-128 215l-84 128l-107 147l-105 127l-56 61l-56 55l-63 57l-65 54l-81 64l-75 54l-66 43l-62 35l-63 2l-69-5l-74-11l-82-18l-70-19l-66-23l-59-26l-61-32l-58-36l-60-44l-61-49l-60-55l-61-61l-61-67l-60-73l-59-76l46 66l47 77l45 82l48 94l45 99l47 113l48 122l47 131l52 153l49 157l101 352l97 376l112 477l25 68l14 29l14 22z"/>
<path fill="#4c004c" d="M2502 4451l54 42l54 38l57 36l54 30l58 27l53 21l54 17l54 13l97-62l95-54l97-47l101-42l103-35l105-29l113-25l117-18l84-86l86-98l86-109l86-119l87-129l86-140l86-150l86-161l83-164l79-166l79-174l82-192l11-32l9-36l5-38l2-37l-2-33l-6-27l-58-176l-93-253l-84-200l-41-86l-43-84l-40-73l-41-66l-41-59l-41-52l-41-45l-41-39l-43-33l-41-25l-43-18l-45-12l-43-3l-43 5l-43 12l-43 19l-43 28l-45 36l-61 62l-60 77l-56 84l-128 215l-84 128l-107 147l-105 127l-56 61l-56 55l-63 57l-65 54l-81 64l-75 54l-66 43l-62 35l-63 2l-69-5l-74-11l-82-18l-70-19l-66-23l-59-26l-61-32l-58-36l-60-44l-61-49l-60-55l-61-61l-61-67l-60-73l-59-76l46 66l47 77l45 82l48 94l45 99l47 113l48 122l47 131l52 153l49 157l101 352l97 376l112 477l25 68l14 29l14 22z"/>
<path fill="#540054" d="M2502 4451l54 42l54 38l50 32l54 30l54 26l54 22l53 18l51 13l96-63l101-57l100-50l104-43l107-37l109-30l117-24l122-19l84-88l83-95l86-110l83-115l86-130l82-135l87-151l82-154l83-164l79-166l79-174l82-192l11-32l9-36l5-38l2-37l-2-33l-6-27l-58-176l-93-253l-84-200l-41-86l-43-84l-40-73l-41-66l-41-59l-41-52l-41-45l-41-39l-43-33l-41-25l-43-18l-45-12l-43-3l-43 5l-43 12l-43 19l-43 28l-45 36l-61 62l-60 77l-56 84l-128 215l-84 128l-107 147l-105 127l-56 61l-56 55l-63 57l-65 54l-81 64l-75 54l-66 43l-62 35l-63 2l-69-5l-74-11l-82-18l-70-19l-66-23l-59-26l-61-32l-58-36l-60-44l-61-49l-60-55l-61-61l-61-67l-60-73l-59-76l46 66l47 77l45 82l48 94l45 99l47 113l48 122l47 131l52 153l49 157l101 352l97 376l112 477l25 68l14 29l14 22z"/>
<path fill="#5c005c" d="M2502 4451l101 75l53 35l51 28l50 25l54 23l50 18l51 14l101-67l104-60l106-53l105-43l111-38l113-30l118-24l126-19l81-85l83-97l82-106l83-116l82-126l83-135l83-145l82-154l83-164l79-166l79-174l82-192l11-32l9-36l5-38l2-37l-2-33l-6-27l-58-176l-93-253l-84-200l-41-86l-43-84l-40-73l-41-66l-41-59l-41-52l-41-45l-41-39l-43-33l-41-25l-43-18l-45-12l-43-3l-43 5l-43 12l-43 19l-43 28l-45 36l-61 62l-60 77l-56 84l-128 215l-84 128l-107 147l-105 127l-56 61l-56 55l-63 57l-65 54l-81 64l-75 54l-66 43l-62 35l-63 2l-69-5l-74-11l-82-18l-70-19l-66-23l-59-26l-61-32l-58-36l-60-44l-61-49l-60-55l-61-61l-61-67l-60-73l-59-76l46 66l47 77l45 82l48 94l45 99l47 113l48 122l47 131l52 153l49 157l101 352l97 376l112 477l25 68l14 29l14 22z"/>
<path fill="#640064" d="M2502 4451l97 73l50 32l51 29l50 26l50 22l50 18l49 15l105-71l104-61l105-53l112-47l115-38l116-31l124-25l129-18l82-89l79-93l79-103l83-117l83-126l79-130l82-145l79-148l83-164l79-166l79-174l82-192l11-32l9-36l5-38l2-37l-2-33l-6-27l-58-176l-93-253l-84-200l-41-86l-43-84l-40-73l-41-66l-41-59l-41-52l-41-45l-41-39l-43-33l-41-25l-43-18l-45-12l-43-3l-43 5l-43 12l-43 19l-43 28l-45 36l-61 62l-60 77l-56 84l-128 215l-84 128l-107 147l-105 127l-56 61l-56 55l-63 57l-65 54l-81 64l-75 54l-66 43l-62 35l-63 2l-69-5l-74-11l-82-18l-70-19l-66-23l-59-26l-61-32l-58-36l-60-44l-61-49l-60-55l-61-61l-61-67l-60-73l-59-76l46 66l47 77l45 82l48 94l45 99l47 113l48 122l47 131l52 153l49 157l101 352l97 376l112 477l25 68l14 29l14 22z"/>
<path fill="#6c006c" d="M2502 4451l97 73l97 59l97 47l93 32l107-73l109-64l109-55l111-47l115-39l120-32l128-25l137-18l80-88l79-95l79-104l79-113l79-121l79-130l79-139l79-148l83-164l79-166l79-174l82-192l11-32l9-36l5-38l2-37l-2-33l-6-27l-58-176l-93-253l-84-200l-41-86l-43-84l-40-73l-41-66l-41-59l-41-52l-41-45l-41-39l-43-33l-41-25l-43-18l-45-12l-43-3l-43 5l-43 12l-43 19l-43 28l-45 36l-61 62l-60 77l-56 84l-128 215l-84 128l-107 147l-105 127l-56 61l-56 55l-63 57l-65 54l-81 64l-75 54l-66 43l-62 35l-63 2l-69-5l-74-11l-82-18l-70-19l-66-23l-59-26l-61-32l-58-36l-60-44l-61-49l-60-55l-61-61l-61-67l-60-73l-59-76l46 66l47 77l45 82l48 94l45 99l47 113l48 122l47 131l52 153l49 157l101 352l97 376l112 477l25 68l14 29l14 22z"/>
<path fill="#740074" d="M2502 4451l93 70l94 58l93 46l92 34l110-77l112-67l112-57l115-48l118-40l125-32l129-24l140-18l78-87l79-97l79-105l75-108l79-122l76-125l79-140l75-141l83-164l79-166l79-174l82-192l11-32l9-36l5-38l2-37l-2-33l-6-27l-58-176l-93-253l-84-200l-41-86l-43-84l-40-73l-41-66l-41-59l-41-52l-41-45l-41-39l-43-33l-41-25l-43-18l-45-12l-43-3l-43 5l-43 12l-43 19l-43 28l-45 36l-61 62l-60 77l-56 84l-128 215l-84 128l-107 147l-105 127l-56 61l-56 55l-63 57l-65 54l-81 64l-75 54l-66 43l-62 35l-63 2l-69-5l-74-11l-82-18l-70-19l-66-23l-59-26l-61-32l-58-36l-60-44l-61-49l-60-55l-61-61l-61-67l-60-73l-59-76l46 66l47 77l45 82l48 94l45 99l47 113l48 122l47 131l52 153l49 157l101 352l97 376l112 477l25 68l14 29l14 22z"/>
<path fill="#7c007c" d="M2502 4451l90 68l90 56l89 46l90 34l111-78l115-70l114-59l119-49l122-41l125-33l137-25l143-17l77-87l75-93l76-101l75-109l75-116l76-125l79-140l75-141l83-164l79-166l79-174l82-192l11-32l9-36l5-38l2-37l-2-33l-6-27l-58-176l-93-253l-84-200l-41-86l-43-84l-40-73l-41-66l-41-59l-41-52l-41-45l-41-39l-43-33l-41-25l-43-18l-45-12l-43-3l-43 5l-43 12l-43 19l-43 28l-45 36l-61 62l-60 77l-56 84l-128 215l-84 128l-107 147l-105 127l-56 61l-56 55l-63 57l-65 54l-81 64l-75 54l-66 43l-62 35l-63 2l-69-5l-74-11l-82-18l-70-19l-66-23l-59-26l-61-32l-58-36l-60-44l-61-49l-60-55l-61-61l-61-67l-60-73l-59-76l46 66l47 77l45 82l48 94l45 99l47 113l48 122l47 131l52 153l49 157l101 352l97 376l112 477l25 68l14 29l14 22z"/>
<path fill="#830083" d="M2502 4451l86 65l86 55l87 45l89 35l114-81l117-72l118-61l118-50l126-42l129-33l138-25l149-17l72-82l75-94l76-102l75-109l76-118l75-126l72-127l75-141l83-164l79-166l79-174l82-192l11-32l9-36l5-38l2-37l-2-33l-6-27l-58-176l-93-253l-84-200l-41-86l-43-84l-40-73l-41-66l-41-59l-41-52l-41-45l-41-39l-43-33l-41-25l-43-18l-45-12l-43-3l-43 5l-43 12l-43 19l-43 28l-45 36l-61 62l-60 77l-56 84l-128 215l-84 128l-107 147l-105 127l-56 61l-56 55l-63 57l-65 54l-81 64l-75 54l-66 43l-62 35l-63 2l-69-5l-74-11l-82-18l-70-19l-66-23l-59-26l-61-32l-58-36l-60-44l-61-49l-60-55l-61-61l-61-67l-60-73l-59-76l46 66l47 77l45 82l48 94l45 99l47 113l48 122l47 131l52 153l49 157l101 352l97 376l112 477l25 68l14 29l14 22z"/>
<path fill="#8b008b" d="M2502 4451l86 65l83 53l82 44l85 34l120-87l117-72l121-62l121-52l126-42l134-33l143-25l150-17l75-87l72-90l75-103l72-105l72-113l75-126l72-127l72-135l83-164l79-166l79-174l82-192l11-32l9-36l5-38l2-37l-2-33l-6-27l-58-176l-93-253l-84-200l-41-86l-43-84l-40-73l-41-66l-41-59l-41-52l-41-45l-41-39l-43-33l-41-25l-43-18l-45-12l-43-3l-43 5l-43 12l-43 19l-43 28l-45 36l-61 62l-60 77l-56 84l-128 215l-84 128l-107 147l-105 127l-56 61l-56 55l-63 57l-65 54l-81 64l-75 54l-66 43l-62 35l-63 2l-69-5l-74-11l-82-18l-70-19l-66-23l-59-26l-61-32l-58-36l-60-44l-61-49l-60-55l-61-61l-61-67l-60-73l-59-76l46 66l47 77l45 82l48 94l45 99l47 113l48 122l47 131l52 153l49 157l101 352l97 376l112 477l25 68l14 29l14 22z"/>
<path fill="#930093" d="M2502 4451l79 60l83 54l82 44l80 34l120-88l120-74l123-65l125-53l130-43l138-35l147-25l153-16l70-82l72-92l72-98l72-106l72-113l71-120l72-127l72-135l83-164l79-166l79-174l82-192l11-32l9-36l5-38l2-37l-2-33l-6-27l-58-176l-93-253l-84-200l-41-86l-43-84l-40-73l-41-66l-41-59l-41-52l-41-45l-41-39l-43-33l-41-25l-43-18l-45-12l-43-3l-43 5l-43 12l-43 19l-43 28l-45 36l-61 62l-60 77l-56 84l-128 215l-84 128l-107 147l-105 127l-56 61l-56 55l-63 57l-65 54l-81 64l-75 54l-66 43l-62 35l-63 2l-69-5l-74-11l-82-18l-70-19l-66-23l-59-26l-61-32l-58-36l-60-44l-61-49l-60-55l-61-61l-61-67l-60-73l-59-76l46 66l47 77l45 82l48 94l45 99l47 113l48 122l47 131l52 153l49 157l101 352l97 376l112 477l25 68l14 29l14 22z"/>
<path fill="#9b009b" d="M2502 4451l79 60l79 52l79 43l76 33l123-91l122-77l123-65l128-55l134-44l138-34l148-25l162-16l70-84l72-92l72-99l68-102l72-113l68-115l72-128l68-128l83-164l79-166l79-174l82-192l11-32l9-36l5-38l2-37l-2-33l-6-27l-58-176l-93-253l-84-200l-41-86l-43-84l-40-73l-41-66l-41-59l-41-52l-41-45l-41-39l-43-33l-41-25l-43-18l-45-12l-43-3l-43 5l-43 12l-43 19l-43 28l-45 36l-61 62l-60 77l-56 84l-128 215l-84 128l-107 147l-105 127l-56 61l-56 55l-63 57l-65 54l-81 64l-75 54l-66 43l-62 35l-63 2l-69-5l-74-11l-82-18l-70-19l-66-23l-59-26l-61-32l-58-36l-60-44l-61-49l-60-55l-61-61l-61-67l-60-73l-59-76l46 66l47 77l45 82l48 94l45 99l47 113l48 122l47 131l52 153l49 157l101 352l97 376l112 477l25 68l14 29l14 22z"/>
<path fill="#a300a3" d="M2502 4451l76 58l75 49l75 42l76 35l125-94l125-79l126-68l65-29l67-27l134-44l142-35l153-24l163-16l70-84l68-88l68-96l69-101l68-108l72-121l68-122l68-128l83-164l79-166l79-174l82-192l11-32l9-36l5-38l2-37l-2-33l-6-27l-58-176l-93-253l-84-200l-41-86l-43-84l-40-73l-41-66l-41-59l-41-52l-41-45l-41-39l-43-33l-41-25l-43-18l-45-12l-43-3l-43 5l-43 12l-43 19l-43 28l-45 36l-61 62l-60 77l-56 84l-128 215l-84 128l-107 147l-105 127l-56 61l-56 55l-63 57l-65 54l-81 64l-75 54l-66 43l-62 35l-63 2l-69-5l-74-11l-82-18l-70-19l-66-23l-59-26l-61-32l-58-36l-60-44l-61-49l-60-55l-61-61l-61-67l-60-73l-59-76l46 66l47 77l45 82l48 94l45 99l47 113l48 122l47 131l52 153l49 157l101 352l97 376l112 477l25 68l14 29l14 22z"/>
<path fill="#ab00ab" d="M2502 4451l76 58l71 47l72 41l73 33l127-96l127-82l63-36l66-33l65-29l67-27l69-25l68-21l75-19l73-16l157-25l164-14l66-81l68-89l69-96l68-102l68-109l68-116l133-243l83-164l79-166l79-174l82-192l11-32l9-36l5-38l2-37l-2-33l-6-27l-58-176l-93-253l-84-200l-41-86l-43-84l-40-73l-41-66l-41-59l-41-52l-41-45l-41-39l-43-33l-41-25l-43-18l-45-12l-43-3l-43 5l-43 12l-43 19l-43 28l-45 36l-61 62l-60 77l-56 84l-128 215l-84 128l-107 147l-105 127l-56 61l-56 55l-63 57l-65 54l-81 64l-75 54l-66 43l-62 35l-63 2l-69-5l-74-11l-82-18l-70-19l-66-23l-59-26l-61-32l-58-36l-60-44l-61-49l-60-55l-61-61l-61-67l-60-73l-59-76l46 66l47 77l45 82l48 94l45 99l47 113l48 122l47 131l52 153l49 157l101 352l97 376l112 477l25 68l14 29l14 22z"/>
<path fill="#b300b3" d="M2502 4451l68 52l72 49l72 41l69 33l129-99l65-44l65-40l63-36l66-34l68-31l67-27l69-25l72-21l75-20l73-15l157-25l173-15l67-82l65-85l68-96l64-98l69-109l64-110l133-243l83-164l79-166l79-174l82-192l11-32l9-36l5-38l2-37l-2-33l-6-27l-58-176l-93-253l-84-200l-41-86l-43-84l-40-73l-41-66l-41-59l-41-52l-41-45l-41-39l-43-33l-41-25l-43-18l-45-12l-43-3l-43 5l-43 12l-43 19l-43 28l-45 36l-61 62l-60 77l-56 84l-128 215l-84 128l-107 147l-105 127l-56 61l-56 55l-63 57l-65 54l-81 64l-75 54l-66 43l-62 35l-63 2l-69-5l-74-11l-82-18l-70-19l-66-23l-59-26l-61-32l-58-36l-60-44l-61-49l-60-55l-61-61l-61-67l-60-73l-59-76l46 66l47 77l45 82l48 94l45 99l47 113l48 122l47 131l52 153l49 157l101 352l97 376l112 477l25 68l14 29l14 22z"/>
<path fill="#bb00bb" d="M2502 4451l68 52l69 47l68 39l66 32l131-101l65-45l67-42l66-38l69-35l68-31l67-27l70-24l72-22l74-19l78-17l79-13l83-11l174-14l67-83l64-87l65-92l65-98l64-104l65-110l129-237l83-164l79-166l79-174l82-192l11-32l9-36l5-38l2-37l-2-33l-6-27l-58-176l-93-253l-84-200l-41-86l-43-84l-40-73l-41-66l-41-59l-41-52l-41-45l-41-39l-43-33l-41-25l-43-18l-45-12l-43-3l-43 5l-43 12l-43 19l-43 28l-45 36l-61 62l-60 77l-56 84l-128 215l-84 128l-107 147l-105 127l-56 61l-56 55l-63 57l-65 54l-81 64l-75 54l-66 43l-62 35l-63 2l-69-5l-74-11l-82-18l-70-19l-66-23l-59-26l-61-32l-58-36l-60-44l-61-49l-60-55l-61-61l-61-67l-60-73l-59-76l46 66l47 77l45 82l48 94l45 99l47 113l48 122l47 131l52 153l49 157l101 352l97 376l112 477l25 68l14 29l14 22z"/>
<path fill="#c300c3" d="M2502 4451l65 50l64 44l65 38l67 34l67-55l65-49l68-47l67-42l66-39l69-35l68-31l70-29l73-25l72-22l75-19l78-16l79-14l87-11l179-13l64-81l65-87l64-93l61-93l65-104l64-110l126-231l83-164l79-166l79-174l82-192l11-32l9-36l5-38l2-37l-2-33l-6-27l-58-176l-93-253l-84-200l-41-86l-43-84l-40-73l-41-66l-41-59l-41-52l-41-45l-41-39l-43-33l-41-25l-43-18l-45-12l-43-3l-43 5l-43 12l-43 19l-43 28l-45 36l-61 62l-60 77l-56 84l-128 215l-84 128l-107 147l-105 127l-56 61l-56 55l-63 57l-65 54l-81 64l-75 54l-66 43l-62 35l-63 2l-69-5l-74-11l-82-18l-70-19l-66-23l-59-26l-61-32l-58-36l-60-44l-61-49l-60-55l-61-61l-61-67l-60-73l-59-76l46 66l47 77l45 82l48 94l45 99l47 113l48 122l47 131l52 153l49 157l101 352l97 376l112 477l25 68l14 29l14 22z"/>
<path fill="#cb00cb" d="M2502 4451l65 50l61 42l61 36l64 33l66-54l71-54l67-47l67-43l66-38l68-36l72-33l70-28l73-26l72-22l79-20l77-16l85-14l83-10l90-8l97-5l61-78l61-83l61-88l65-98l125-209l126-231l83-164l79-166l79-174l82-192l11-32l9-36l5-38l2-37l-2-33l-6-27l-58-176l-93-253l-84-200l-41-86l-43-84l-40-73l-41-66l-41-59l-41-52l-41-45l-41-39l-43-33l-41-25l-43-18l-45-12l-43-3l-43 5l-43 12l-43 19l-43 28l-45 36l-61 62l-60 77l-56 84l-128 215l-84 128l-107 147l-105 127l-56 61l-56 55l-63 57l-65 54l-81 64l-75 54l-66 43l-62 35l-63 2l-69-5l-74-11l-82-18l-70-19l-66-23l-59-26l-61-32l-58-36l-60-44l-61-49l-60-55l-61-61l-61-67l-60-73l-59-76l46 66l47 77l45 82l48 94l45 99l47 113l48 122l47 131l52 153l49 157l101 352l97 376l112 477l25 68l14 29l14 22z"/>
<path fill="#d300d3" d="M2502 4451l61 47l61 42l61 37l58 30l68-56l67-52l70-50l70-44l69-41l72-37l71-33l71-28l73-26l76-23l79-19l78-16l84-14l88-10l90-8l97-4l62-80l61-84l122-183l122-203l122-225l83-164l79-166l79-174l82-192l11-32l9-36l5-38l2-37l-2-33l-6-27l-58-176l-93-253l-84-200l-41-86l-43-84l-40-73l-41-66l-41-59l-41-52l-41-45l-41-39l-43-33l-41-25l-43-18l-45-12l-43-3l-43 5l-43 12l-43 19l-43 28l-45 36l-61 62l-60 77l-56 84l-128 215l-84 128l-107 147l-105 127l-56 61l-56 55l-63 57l-65 54l-81 64l-75 54l-66 43l-62 35l-63 2l-69-5l-74-11l-82-18l-70-19l-66-23l-59-26l-61-32l-58-36l-60-44l-61-49l-60-55l-61-61l-61-67l-60-73l-59-76l46 66l47 77l45 82l48 94l45 99l47 113l48 122l47 131l52 153l49 157l101 352l97 376l112 477l25 68l14 29l14 22z"/>
<path fill="#db00db" d="M2502 4451l58 44l57 41l57 35l59 32l70-59l70-54l70-50l69-45l72-42l68-36l71-33l74-30l77-27l76-23l80-19l82-16l85-14l88-10l95-7l95-4l60-78l61-84l119-178l118-198l122-225l83-164l79-166l79-174l82-192l11-32l9-36l5-38l2-37l-2-33l-6-27l-58-176l-93-253l-84-200l-41-86l-43-84l-40-73l-41-66l-41-59l-41-52l-41-45l-41-39l-43-33l-41-25l-43-18l-45-12l-43-3l-43 5l-43 12l-43 19l-43 28l-45 36l-61 62l-60 77l-56 84l-128 215l-84 128l-107 147l-105 127l-56 61l-56 55l-63 57l-65 54l-81 64l-75 54l-66 43l-62 35l-63 2l-69-5l-74-11l-82-18l-70-19l-66-23l-59-26l-61-32l-58-36l-60-44l-61-49l-60-55l-61-61l-61-67l-60-73l-59-76l46 66l47 77l45 82l48 94l45 99l47 113l48 122l47 131l52 153l49 157l101 352l97 376l112 477l25 68l14 29l14 22z"/>
<path fill="#e300e3" d="M2502 4451l54 42l57 40l54 34l57 31l73-63l70-54l70-50l69-45l69-41l71-38l74-35l74-30l77-27l76-22l79-20l87-17l85-13l92-10l96-7l99-4l115-155l118-179l119-199l118-218l83-164l79-166l79-174l82-192l11-32l9-36l5-38l2-37l-2-33l-6-27l-58-176l-93-253l-84-200l-41-86l-43-84l-40-73l-41-66l-41-59l-41-52l-41-45l-41-39l-43-33l-41-25l-43-18l-45-12l-43-3l-43 5l-43 12l-43 19l-43 28l-45 36l-61 62l-60 77l-56 84l-128 215l-84 128l-107 147l-105 127l-56 61l-56 55l-63 57l-65 54l-81 64l-75 54l-66 43l-62 35l-63 2l-69-5l-74-11l-82-18l-70-19l-66-23l-59-26l-61-32l-58-36l-60-44l-61-49l-60-55l-61-61l-61-67l-60-73l-59-76l46 66l47 77l45 82l48 94l45 99l47 113l48 122l47 131l52 153l49 157l101 352l97 376l112 477l25 68l14 29l14 22z"/>
<path fill="#eb00eb" d="M2502 4451l54 42l54 38l54 34l50 28l73-62l69-55l72-52l72-48l72-43l74-39l75-35l74-30l77-27l80-23l83-20l83-16l90-13l93-10l91-7l102-3l116-159l115-174l115-194l115-212l83-164l79-166l79-174l82-192l11-32l9-36l5-38l2-37l-2-33l-6-27l-58-176l-93-253l-84-200l-41-86l-43-84l-40-73l-41-66l-41-59l-41-52l-41-45l-41-39l-43-33l-41-25l-43-18l-45-12l-43-3l-43 5l-43 12l-43 19l-43 28l-45 36l-61 62l-60 77l-56 84l-128 215l-84 128l-107 147l-105 127l-56 61l-56 55l-63 57l-65 54l-81 64l-75 54l-66 43l-62 35l-63 2l-69-5l-74-11l-82-18l-70-19l-66-23l-59-26l-61-32l-58-36l-60-44l-61-49l-60-55l-61-61l-61-67l-60-73l-59-76l46 66l47 77l45 82l48 94l45 99l47 113l48 122l47 131l52 153l49 157l101 352l97 376l112 477l25 68l14 29l14 22z"/>
<path fill="#f300f3" d="M2502 4451l101 75l50 32l52 30l74-63l72-58l71-53l72-47l72-43l74-40l74-35l77-32l77-27l80-23l84-20l87-17l90-13l93-9l101-7l100-3l115-157l111-170l115-194l111-206l83-164l79-166l79-174l82-192l11-32l9-36l5-38l2-37l-2-33l-6-27l-58-176l-93-253l-84-200l-41-86l-43-84l-40-73l-41-66l-41-59l-41-52l-41-45l-41-39l-43-33l-41-25l-43-18l-45-12l-43-3l-43 5l-43 12l-43 19l-43 28l-45 36l-61 62l-60 77l-56 84l-128 215l-84 128l-107 147l-105 127l-56 61l-56 55l-63 57l-65 54l-81 64l-75 54l-66 43l-62 35l-63 2l-69-5l-74-11l-82-18l-70-19l-66-23l-59-26l-61-32l-58-36l-60-44l-61-49l-60-55l-61-61l-61-67l-60-73l-59-76l46 66l47 77l45 82l48 94l45 99l47 113l48 122l47 131l52 153l49 157l101 352l97 376l112 477l25 68l14 29l14 22z"/>
<path fill="#fb00fb" d="M2502 4451l97 73l97 59l77-67l72-58l72-53l71-48l75-45l74-40l74-35l77-31l81-29l80-23l84-20l86-16l95-14l94-9l101-6l103-3l109-150l112-171l111-188l111-206l83-164l79-166l79-174l82-192l11-32l9-36l5-38l2-37l-2-33l-6-27l-58-176l-93-253l-84-200l-41-86l-43-84l-40-73l-41-66l-41-59l-41-52l-41-45l-41-39l-43-33l-41-25l-43-18l-45-12l-43-3l-43 5l-43 12l-43 19l-43 28l-45 36l-61 62l-60 77l-56 84l-128 215l-84 128l-107 147l-105 127l-56 61l-56 55l-63 57l-65 54l-81 64l-75 54l-66 43l-62 35l-63 2l-69-5l-74-11l-82-18l-70-19l-66-23l-59-26l-61-32l-58-36l-60-44l-61-49l-60-55l-61-61l-61-67l-60-73l-59-76l46 66l47 77l45 82l48 94l45 99l47 113l48 122l47 131l52 153l49 157l101 352l97 376l112 477l25 68l14 29l14 22z"/>
<path fill="#fb00ff" d="M2502 4451l93 70l92 57l76-66l74-61l74-55l74-50l75-45l74-40l77-37l77-32l81-28l81-23l87-20l88-16l95-14l94-8l101-6l106-3l111-154l108-167l107-183l108-199l83-164l79-166l79-174l82-192l11-32l9-36l5-38l2-37l-2-33l-6-27l-58-176l-93-253l-84-200l-41-86l-43-84l-40-73l-41-66l-41-59l-41-52l-41-45l-41-39l-43-33l-41-25l-43-18l-45-12l-43-3l-43 5l-43 12l-43 19l-43 28l-45 36l-61 62l-60 77l-56 84l-128 215l-84 128l-107 147l-105 127l-56 61l-56 55l-63 57l-65 54l-81 64l-75 54l-66 43l-62 35l-63 2l-69-5l-74-11l-82-18l-70-19l-66-23l-59-26l-61-32l-58-36l-60-44l-61-49l-60-55l-61-61l-61-67l-60-73l-59-76l46 66l47 77l45 82l48 94l45 99l47 113l48 122l47 131l52 153l49 157l101 352l97 376l112 477l25 68l14 29l14 22z"/>
<path fill="#f300ff" d="M2502 4451l90 68l87 55l76-68l77-63l74-55l74-51l74-45l77-42l77-36l78-32l80-28l81-23l87-21l88-16l95-13l98-9l107-6l107-2l107-149l107-168l108-183l104-193l83-164l79-166l79-174l82-192l11-32l9-36l5-38l2-37l-2-33l-6-27l-58-176l-93-253l-84-200l-41-86l-43-84l-40-73l-41-66l-41-59l-41-52l-41-45l-41-39l-43-33l-41-25l-43-18l-45-12l-43-3l-43 5l-43 12l-43 19l-43 28l-45 36l-61 62l-60 77l-56 84l-128 215l-84 128l-107 147l-105 127l-56 61l-56 55l-63 57l-65 54l-81 64l-75 54l-66 43l-62 35l-63 2l-69-5l-74-11l-82-18l-70-19l-66-23l-59-26l-61-32l-58-36l-60-44l-61-49l-60-55l-61-61l-61-67l-60-73l-59-76l46 66l47 77l45 82l48 94l45 99l47 113l48 122l47 131l52 153l49 157l101 352l97 376l112 477l25 68l14 29l14 22z"/>
<path fill="#eb00ff" d="M2502 4451l86 65l83 53l76-68l77-63l76-58l74-51l74-45l77-42l77-37l81-33l80-28l85-25l83-19l92-17l95-13l99-9l107-6l113-1l106-150l104-162l104-178l104-193l83-164l79-166l79-174l82-192l11-32l9-36l5-38l2-37l-2-33l-6-27l-58-176l-93-253l-84-200l-41-86l-43-84l-40-73l-41-66l-41-59l-41-52l-41-45l-41-39l-43-33l-41-25l-43-18l-45-12l-43-3l-43 5l-43 12l-43 19l-43 28l-45 36l-61 62l-60 77l-56 84l-128 215l-84 128l-107 147l-105 127l-56 61l-56 55l-63 57l-65 54l-81 64l-75 54l-66 43l-62 35l-63 2l-69-5l-74-11l-82-18l-70-19l-66-23l-59-26l-61-32l-58-36l-60-44l-61-49l-60-55l-61-61l-61-67l-60-73l-59-76l46 66l47 77l45 82l48 94l45 99l47 113l48 122l47 131l52 153l49 157l101 352l97 376l112 477l25 68l14 29l14 22z"/>
<path fill="#e300ff" d="M2502 4451l79 60l83 54l78-71l77-64l76-58l77-53l76-47l77-42l78-37l80-33l81-28l85-24l88-21l91-16l96-12l104-9l103-5l114-2l101-144l104-163l105-178l100-187l83-164l79-166l79-174l82-192l11-32l9-36l5-38l2-37l-2-33l-6-27l-58-176l-93-253l-84-200l-41-86l-43-84l-40-73l-41-66l-41-59l-41-52l-41-45l-41-39l-43-33l-41-25l-43-18l-45-12l-43-3l-43 5l-43 12l-43 19l-43 28l-45 36l-61 62l-60 77l-56 84l-128 215l-84 128l-107 147l-105 127l-56 61l-56 55l-63 57l-65 54l-81 64l-75 54l-66 43l-62 35l-63 2l-69-5l-74-11l-82-18l-70-19l-66-23l-59-26l-61-32l-58-36l-60-44l-61-49l-60-55l-61-61l-61-67l-60-73l-59-76l46 66l47 77l45 82l48 94l45 99l47 113l48 122l47 131l52 153l49 157l101 352l97 376l112 477l25 68l14 29l14 22z"/>
<path fill="#db00ff" d="M2502 4451l76 58l78 51l79-71l78-66l77-59l76-53l77-48l76-42l81-38l81-34l84-29l85-24l88-20l92-16l96-12l103-9l108-5l115-1l102-145l100-158l101-172l100-187l83-164l79-166l79-174l82-192l11-32l9-36l5-38l2-37l-2-33l-6-27l-58-176l-93-253l-84-200l-41-86l-43-84l-40-73l-41-66l-41-59l-41-52l-41-45l-41-39l-43-33l-41-25l-43-18l-45-12l-43-3l-43 5l-43 12l-43 19l-43 28l-45 36l-61 62l-60 77l-56 84l-128 215l-84 128l-107 147l-105 127l-56 61l-56 55l-63 57l-65 54l-81 64l-75 54l-66 43l-62 35l-63 2l-69-5l-74-11l-82-18l-70-19l-66-23l-59-26l-61-32l-58-36l-60-44l-61-49l-60-55l-61-61l-61-67l-60-73l-59-76l46 66l47 77l45 82l48 94l45 99l47 113l48 122l47 131l52 153l49 157l101 352l97 376l112 477l25 68l14 29l14 22z"/>
<path fill="#d300ff" d="M2502 4451l72 55l75 50l81-75l78-66l79-61l76-53l77-48l77-42l80-39l81-33l84-29l85-24l92-21l92-16l96-12l104-9l108-4l121-1l97-140l101-159l97-166l100-187l83-164l79-166l79-174l82-192l11-32l9-36l5-38l2-37l-2-33l-6-27l-58-176l-93-253l-84-200l-41-86l-43-84l-40-73l-41-66l-41-59l-41-52l-41-45l-41-39l-43-33l-41-25l-43-18l-45-12l-43-3l-43 5l-43 12l-43 19l-43 28l-45 36l-61 62l-60 77l-56 84l-128 215l-84 128l-107 147l-105 127l-56 61l-56 55l-63 57l-65 54l-81 64l-75 54l-66 43l-62 35l-63 2l-69-5l-74-11l-82-18l-70-19l-66-23l-59-26l-61-32l-58-36l-60-44l-61-49l-60-55l-61-61l-61-67l-60-73l-59-76l46 66l47 77l45 82l48 94l45 99l47 113l48 122l47 131l52 153l49 157l101 352l97 376l112 477l25 68l14 29l14 22z"/>
<path fill="#cb00ff" d="M2502 4451l68 52l71 48l81-75l78-66l79-62l79-55l79-50l80-44l81-39l80-33l85-29l84-24l93-21l92-15l101-13l104-8l114-4l116 0l97-141l97-154l97-167l97-180l83-164l79-166l79-174l82-192l11-32l9-36l5-38l2-37l-2-33l-6-27l-58-176l-93-253l-84-200l-41-86l-43-84l-40-73l-41-66l-41-59l-41-52l-41-45l-41-39l-43-33l-41-25l-43-18l-45-12l-43-3l-43 5l-43 12l-43 19l-43 28l-45 36l-61 62l-60 77l-56 84l-128 215l-84 128l-107 147l-105 127l-56 61l-56 55l-63 57l-65 54l-81 64l-75 54l-66 43l-62 35l-63 2l-69-5l-74-11l-82-18l-70-19l-66-23l-59-26l-61-32l-58-36l-60-44l-61-49l-60-55l-61-61l-61-67l-60-73l-59-76l46 66l47 77l45 82l48 94l45 99l47 113l48 122l47 131l52 153l49 157l101 352l97 376l112 477l25 68l14 29l14 22z"/>
<path fill="#c300ff" d="M2502 4451l65 50l67 46l81-76l80-69l79-61l81-58l79-50l80-44l81-39l80-33l85-29l88-25l93-21l93-16l100-12l105-7l118-5l117 1l94-137l97-154l97-167l93-174l83-164l79-166l79-174l82-192l11-32l9-36l5-38l2-37l-2-33l-6-27l-58-176l-93-253l-84-200l-41-86l-43-84l-40-73l-41-66l-41-59l-41-52l-41-45l-41-39l-43-33l-41-25l-43-18l-45-12l-43-3l-43 5l-43 12l-43 19l-43 28l-45 36l-61 62l-60 77l-56 84l-128 215l-84 128l-107 147l-105 127l-56 61l-56 55l-63 57l-65 54l-81 64l-75 54l-66 43l-62 35l-63 2l-69-5l-74-11l-82-18l-70-19l-66-23l-59-26l-61-32l-58-36l-60-44l-61-49l-60-55l-61-61l-61-67l-60-73l-59-76l46 66l47 77l45 82l48 94l45 99l47 113l48 122l47 131l52 153l49 157l101 352l97 376l112 477l25 68l14 29l14 22z"/>
<path fill="#bb00ff" d="M2502 4451l61 47l64 44l83-78l80-70l81-63l79-56l79-51l79-44l80-39l84-35l85-29l88-25l93-21l97-16l105-12l106-7l113-4l123 0l93-137l93-149l94-161l93-174l83-164l79-166l79-174l82-192l11-32l9-36l5-38l2-37l-2-33l-6-27l-58-176l-93-253l-84-200l-41-86l-43-84l-40-73l-41-66l-41-59l-41-52l-41-45l-41-39l-43-33l-41-25l-43-18l-45-12l-43-3l-43 5l-43 12l-43 19l-43 28l-45 36l-61 62l-60 77l-56 84l-128 215l-84 128l-107 147l-105 127l-56 61l-56 55l-63 57l-65 54l-81 64l-75 54l-66 43l-62 35l-63 2l-69-5l-74-11l-82-18l-70-19l-66-23l-59-26l-61-32l-58-36l-60-44l-61-49l-60-55l-61-61l-61-67l-60-73l-59-76l46 66l47 77l45 82l48 94l45 99l47 113l48 122l47 131l52 153l49 157l101 352l97 376l112 477l25 68l14 29l14 22z"/>
<path fill="#b300ff" d="M2502 4451l58 44l60 42l96-90l94-80l90-70l95-64l94-55l93-46l98-40l100-34l78-20l77-17l80-14l87-11l90-8l93-5l96-2l108 1l90-132l93-150l93-162l90-167l83-164l79-166l79-174l82-192l11-32l9-36l5-38l2-37l-2-33l-6-27l-58-176l-93-253l-84-200l-41-86l-43-84l-40-73l-41-66l-41-59l-41-52l-41-45l-41-39l-43-33l-41-25l-43-18l-45-12l-43-3l-43 5l-43 12l-43 19l-43 28l-45 36l-61 62l-60 77l-56 84l-128 215l-84 128l-107 147l-105 127l-56 61l-56 55l-63 57l-65 54l-81 64l-75 54l-66 43l-62 35l-63 2l-69-5l-74-11l-82-18l-70-19l-66-23l-59-26l-61-32l-58-36l-60-44l-61-49l-60-55l-61-61l-61-67l-60-73l-59-76l46 66l47 77l45 82l48 94l45 99l47 113l48 122l47 131l52 153l49 157l101 352l97 376l112 477l25 68l14 29l14 22z"/>
<path fill="#ab00ff" d="M2502 4451l54 42l56 40l96-91l94-81l93-72l91-62l94-56l92-46l98-41l100-34l77-21l81-18l84-14l87-12l94-8l94-4l100-2l109 1l90-133l90-145l89-156l90-167l83-164l79-166l79-174l82-192l11-32l9-36l5-38l2-37l-2-33l-6-27l-58-176l-93-253l-84-200l-41-86l-43-84l-40-73l-41-66l-41-59l-41-52l-41-45l-41-39l-43-33l-41-25l-43-18l-45-12l-43-3l-43 5l-43 12l-43 19l-43 28l-45 36l-61 62l-60 77l-56 84l-128 215l-84 128l-107 147l-105 127l-56 61l-56 55l-63 57l-65 54l-81 64l-75 54l-66 43l-62 35l-63 2l-69-5l-74-11l-82-18l-70-19l-66-23l-59-26l-61-32l-58-36l-60-44l-61-49l-60-55l-61-61l-61-67l-60-73l-59-76l46 66l47 77l45 82l48 94l45 99l47 113l48 122l47 131l52 153l49 157l101 352l97 376l112 477l25 68l14 29l14 22z"/>
<path fill="#a300ff" d="M2502 4451l50 39l53 38l98-93l94-82l92-72l92-63l93-55l92-47l97-41l100-34l81-23l81-18l88-15l87-11l95-8l93-4l101-2l114 2l86-129l90-145l86-150l90-167l83-164l79-166l79-174l82-192l11-32l9-36l5-38l2-37l-2-33l-6-27l-58-176l-93-253l-84-200l-41-86l-43-84l-40-73l-41-66l-41-59l-41-52l-41-45l-41-39l-43-33l-41-25l-43-18l-45-12l-43-3l-43 5l-43 12l-43 19l-43 28l-45 36l-61 62l-60 77l-56 84l-128 215l-84 128l-107 147l-105 127l-56 61l-56 55l-63 57l-65 54l-81 64l-75 54l-66 43l-62 35l-63 2l-69-5l-74-11l-82-18l-70-19l-66-23l-59-26l-61-32l-58-36l-60-44l-61-49l-60-55l-61-61l-61-67l-60-73l-59-76l46 66l47 77l45 82l48 94l45 99l47 113l48 122l47 131l52 153l49 157l101 352l97 376l112 477l25 68l14 29l14 22z"/>
<path fill="#9b00ff" d="M2502 4451l96 72l98-93l93-82l92-72l91-64l93-56l91-47l97-42l99-35l81-22l80-19l88-15l91-12l95-8l103-5l106-1l114 2l87-130l86-140l86-150l86-161l83-164l79-166l79-174l82-192l11-32l9-36l5-38l2-37l-2-33l-6-27l-58-176l-93-253l-84-200l-41-86l-43-84l-40-73l-41-66l-41-59l-41-52l-41-45l-41-39l-43-33l-41-25l-43-18l-45-12l-43-3l-43 5l-43 12l-43 19l-43 28l-45 36l-61 62l-60 77l-56 84l-128 215l-84 128l-107 147l-105 127l-56 61l-56 55l-63 57l-65 54l-81 64l-75 54l-66 43l-62 35l-63 2l-69-5l-74-11l-82-18l-70-19l-66-23l-59-26l-61-32l-58-36l-60-44l-61-49l-60-55l-61-61l-61-67l-60-73l-59-76l46 66l47 77l45 82l48 94l45 99l47 113l48 122l47 131l52 153l49 157l101 352l97 376l112 477l25 68l14 29l14 22z"/>
<path fill="#9300ff" d="M2502 4451l90 67l96-93l96-85l91-72l91-64l93-57l91-47l97-42l98-35l81-23l88-20l88-15l92-12l95-8l103-4l106-1l119 2l83-126l86-140l87-151l82-154l83-164l79-166l79-174l82-192l11-32l9-36l5-38l2-37l-2-33l-6-27l-58-176l-93-253l-84-200l-41-86l-43-84l-40-73l-41-66l-41-59l-41-52l-41-45l-41-39l-43-33l-41-25l-43-18l-45-12l-43-3l-43 5l-43 12l-43 19l-43 28l-45 36l-61 62l-60 77l-56 84l-128 215l-84 128l-107 147l-105 127l-56 61l-56 55l-63 57l-65 54l-81 64l-75 54l-66 43l-62 35l-63 2l-69-5l-74-11l-82-18l-70-19l-66-23l-59-26l-61-32l-58-36l-60-44l-61-49l-60-55l-61-61l-61-67l-60-73l-59-76l46 66l47 77l45 82l48 94l45 99l47 113l48 122l47 131l52 153l49 157l101 352l97 376l112 477l25 68l14 29l14 22z"/>
<path fill="#8b00ff" d="M2502 4451l83 63l96-94l92-83l94-75l90-64l92-57l91-49l96-42l99-35l84-25l84-19l92-16l91-12l100-8l103-5l116-1l119 3l83-127l83-135l83-145l82-154l83-164l79-166l79-174l82-192l11-32l9-36l5-38l2-37l-2-33l-6-27l-58-176l-93-253l-84-200l-41-86l-43-84l-40-73l-41-66l-41-59l-41-52l-41-45l-41-39l-43-33l-41-25l-43-18l-45-12l-43-3l-43 5l-43 12l-43 19l-43 28l-45 36l-61 62l-60 77l-56 84l-128 215l-84 128l-107 147l-105 127l-56 61l-56 55l-63 57l-65 54l-81 64l-75 54l-66 43l-62 35l-63 2l-69-5l-74-11l-82-18l-70-19l-66-23l-59-26l-61-32l-58-36l-60-44l-61-49l-60-55l-61-61l-61-67l-60-73l-59-76l46 66l47 77l45 82l48 94l45 99l47 113l48 122l47 131l52 153l49 157l101 352l97 376l112 477l25 68l14 29l14 22z"/>
<path fill="#8300ff" d="M2502 4451l76 58l98-97l92-82l91-74l93-67l91-57l94-50l93-41l98-36l84-24l88-21l92-16l96-12l99-8l108-5l112 0l123 3l81-123l83-135l82-145l79-148l83-164l79-166l79-174l82-192l11-32l9-36l5-38l2-37l-2-33l-6-27l-58-176l-93-253l-84-200l-41-86l-43-84l-40-73l-41-66l-41-59l-41-52l-41-45l-41-39l-43-33l-41-25l-43-18l-45-12l-43-3l-43 5l-43 12l-43 19l-43 28l-45 36l-61 62l-60 77l-56 84l-128 215l-84 128l-107 147l-105 127l-56 61l-56 55l-63 57l-65 54l-81 64l-75 54l-66 43l-62 35l-63 2l-69-5l-74-11l-82-18l-70-19l-66-23l-59-26l-61-32l-58-36l-60-44l-61-49l-60-55l-61-61l-61-67l-60-73l-59-76l46 66l47 77l45 82l48 94l45 99l47 113l48 122l47 131l52 153l49 157l101 352l97 376l112 477l25 68l14 29l14 22z"/>
<path fill="#7c00ff" d="M2502 4451l69 53l97-97l92-83l93-76l90-65l91-58l94-50l92-42l97-36l84-25l92-22l96-17l95-12l105-8l108-4l117 0l123 3l81-124l79-130l79-139l79-148l83-164l79-166l79-174l82-192l11-32l9-36l5-38l2-37l-2-33l-6-27l-58-176l-93-253l-84-200l-41-86l-43-84l-40-73l-41-66l-41-59l-41-52l-41-45l-41-39l-43-33l-41-25l-43-18l-45-12l-43-3l-43 5l-43 12l-43 19l-43 28l-45 36l-61 62l-60 77l-56 84l-128 215l-84 128l-107 147l-105 127l-56 61l-56 55l-63 57l-65 54l-81 64l-75 54l-66 43l-62 35l-63 2l-69-5l-74-11l-82-18l-70-19l-66-23l-59-26l-61-32l-58-36l-60-44l-61-49l-60-55l-61-61l-61-67l-60-73l-59-76l46 66l47 77l45 82l48 94l45 99l47 113l48 122l47 131l52 153l49 157l101 352l97 376l112 477l25 68l14 29l14 22z"/>
<path fill="#7400ff" d="M2502 4451l62 48l97-96l91-84l93-77l92-67l91-58l93-51l92-42l97-37l88-26l91-21l92-17l100-12l105-9l113-4l122 0l123 5l78-121l79-130l79-140l75-141l83-164l79-166l79-174l82-192l11-32l9-36l5-38l2-37l-2-33l-6-27l-58-176l-93-253l-84-200l-41-86l-43-84l-40-73l-41-66l-41-59l-41-52l-41-45l-41-39l-43-33l-41-25l-43-18l-45-12l-43-3l-43 5l-43 12l-43 19l-43 28l-45 36l-61 62l-60 77l-56 84l-128 215l-84 128l-107 147l-105 127l-56 61l-56 55l-63 57l-65 54l-81 64l-75 54l-66 43l-62 35l-63 2l-69-5l-74-11l-82-18l-70-19l-66-23l-59-26l-61-32l-58-36l-60-44l-61-49l-60-55l-61-61l-61-67l-60-73l-59-76l46 66l47 77l45 82l48 94l45 99l47 113l48 122l47 131l52 153l49 157l101 352l97 376l112 477l25 68l14 29l14 22z"/>
<path fill="#6c00ff" d="M2502 4451l56 43l96-96l96-89l93-77l89-65l90-59l90-49l95-44l96-37l88-26l91-22l96-18l100-12l105-8l118-4l122 0l127 5l79-122l75-126l76-133l75-141l83-164l79-166l79-174l82-192l11-32l9-36l5-38l2-37l-2-33l-6-27l-58-176l-93-253l-84-200l-41-86l-43-84l-40-73l-41-66l-41-59l-41-52l-41-45l-41-39l-43-33l-41-25l-43-18l-45-12l-43-3l-43 5l-43 12l-43 19l-43 28l-45 36l-61 62l-60 77l-56 84l-128 215l-84 128l-107 147l-105 127l-56 61l-56 55l-63 57l-65 54l-81 64l-75 54l-66 43l-62 35l-63 2l-69-5l-74-11l-82-18l-70-19l-66-23l-59-26l-61-32l-58-36l-60-44l-61-49l-60-55l-61-61l-61-67l-60-73l-59-76l46 66l47 77l45 82l48 94l45 99l47 113l48 122l47 131l52 153l49 157l101 352l97 376l112 477l25 68l14 29l14 22z"/>
<path fill="#6400ff" d="M2502 4451l49 38l98-99l93-86l93-77l91-68l90-59l93-52l91-42l97-37l90-28l92-22l96-17l100-13l109-8l114-4l122 1l137 5l72-112l75-126l76-133l75-141l83-164l79-166l79-174l82-192l11-32l9-36l5-38l2-37l-2-33l-6-27l-58-176l-93-253l-84-200l-41-86l-43-84l-40-73l-41-66l-41-59l-41-52l-41-45l-41-39l-43-33l-41-25l-43-18l-45-12l-43-3l-43 5l-43 12l-43 19l-43 28l-45 36l-61 62l-60 77l-56 84l-128 215l-84 128l-107 147l-105 127l-56 61l-56 55l-63 57l-65 54l-81 64l-75 54l-66 43l-62 35l-63 2l-69-5l-74-11l-82-18l-70-19l-66-23l-59-26l-61-32l-58-36l-60-44l-61-49l-60-55l-61-61l-61-67l-60-73l-59-76l46 66l47 77l45 82l48 94l45 99l47 113l48 122l47 131l52 153l49 157l101 352l97 376l112 477l25 68l14 29l14 22z"/>
<path fill="#5c00ff" d="M2502 4451l43 33l97-98l93-87l91-78l91-69l90-59l92-52l91-43l96-38l90-28l95-23l96-17l105-14l114-8l113-4l128 1l136 6l73-114l72-120l72-127l75-141l83-164l79-166l79-174l82-192l11-32l9-36l5-38l2-37l-2-33l-6-27l-58-176l-93-253l-84-200l-41-86l-43-84l-40-73l-41-66l-41-59l-41-52l-41-45l-41-39l-43-33l-41-25l-43-18l-45-12l-43-3l-43 5l-43 12l-43 19l-43 28l-45 36l-61 62l-60 77l-56 84l-128 215l-84 128l-107 147l-105 127l-56 61l-56 55l-63 57l-65 54l-81 64l-75 54l-66 43l-62 35l-63 2l-69-5l-74-11l-82-18l-70-19l-66-23l-59-26l-61-32l-58-36l-60-44l-61-49l-60-55l-61-61l-61-67l-60-73l-59-76l46 66l47 77l45 82l48 94l45 99l47 113l48 122l47 131l52 153l49 157l101 352l97 376l112 477l25 68l14 29l14 22z"/>
<path fill="#5400ff" d="M2502 4451l36 28l96-98l95-90l92-78l91-69l89-59l92-53l90-43l96-38l90-29l95-23l104-19l105-13l114-8l114-3l128 1l141 6l70-110l71-120l72-127l72-135l83-164l79-166l79-174l82-192l11-32l9-36l5-38l2-37l-2-33l-6-27l-58-176l-93-253l-84-200l-41-86l-43-84l-40-73l-41-66l-41-59l-41-52l-41-45l-41-39l-43-33l-41-25l-43-18l-45-12l-43-3l-43 5l-43 12l-43 19l-43 28l-45 36l-61 62l-60 77l-56 84l-128 215l-84 128l-107 147l-105 127l-56 61l-56 55l-63 57l-65 54l-81 64l-75 54l-66 43l-62 35l-63 2l-69-5l-74-11l-82-18l-70-19l-66-23l-59-26l-61-32l-58-36l-60-44l-61-49l-60-55l-61-61l-61-67l-60-73l-59-76l46 66l47 77l45 82l48 94l45 99l47 113l48 122l47 131l52 153l49 157l101 352l97 376l112 477l25 68l14 29l14 22z"/>
<path fill="#4c00ff" d="M2502 4451l30 23l110-113l106-99l107-88l104-75l77-47l77-42l78-36l81-33l94-29l95-24l100-18l109-14l109-8l124-3l133 2l140 6l71-111l68-115l72-128l68-128l83-164l79-166l79-174l82-192l11-32l9-36l5-38l2-37l-2-33l-6-27l-58-176l-93-253l-84-200l-41-86l-43-84l-40-73l-41-66l-41-59l-41-52l-41-45l-41-39l-43-33l-41-25l-43-18l-45-12l-43-3l-43 5l-43 12l-43 19l-43 28l-45 36l-61 62l-60 77l-56 84l-128 215l-84 128l-107 147l-105 127l-56 61l-56 55l-63 57l-65 54l-81 64l-75 54l-66 43l-62 35l-63 2l-69-5l-74-11l-82-18l-70-19l-66-23l-59-26l-61-32l-58-36l-60-44l-61-49l-60-55l-61-61l-61-67l-60-73l-59-76l46 66l47 77l45 82l48 94l45 99l47 113l48 122l47 131l52 153l49 157l101 352l97 376l112 477l25 68l14 29l14 22z"/>
<path fill="#4400ff" d="M2502 4451l24 19l109-114l103-97l103-86l100-74l79-50l80-45l81-38l84-34l94-30l94-24l104-19l109-13l115-9l124-3l134 2l144 8l67-108l69-115l68-122l68-128l83-164l79-166l79-174l82-192l11-32l9-36l5-38l2-37l-2-33l-6-27l-58-176l-93-253l-84-200l-41-86l-43-84l-40-73l-41-66l-41-59l-41-52l-41-45l-41-39l-43-33l-41-25l-43-18l-45-12l-43-3l-43 5l-43 12l-43 19l-43 28l-45 36l-61 62l-60 77l-56 84l-128 215l-84 128l-107 147l-105 127l-56 61l-56 55l-63 57l-65 54l-81 64l-75 54l-66 43l-62 35l-63 2l-69-5l-74-11l-82-18l-70-19l-66-23l-59-26l-61-32l-58-36l-60-44l-61-49l-60-55l-61-61l-61-67l-60-73l-59-76l46 66l47 77l45 82l48 94l45 99l47 113l48 122l47 131l52 153l49 157l101 352l97 376l112 477l25 68l14 29l14 22z"/>
<path fill="#3c00ff" d="M2502 4451l17 14l108-113l100-95l100-86l97-72l81-53l82-47l83-41l89-36l93-30l98-25l104-19l109-13l119-9l124-2l135 2l148 8l65-104l68-116l133-243l83-164l79-166l79-174l82-192l11-32l9-36l5-38l2-37l-2-33l-6-27l-58-176l-93-253l-84-200l-41-86l-43-84l-40-73l-41-66l-41-59l-41-52l-41-45l-41-39l-43-33l-41-25l-43-18l-45-12l-43-3l-43 5l-43 12l-43 19l-43 28l-45 36l-61 62l-60 77l-56 84l-128 215l-84 128l-107 147l-105 127l-56 61l-56 55l-63 57l-65 54l-81 64l-75 54l-66 43l-62 35l-63 2l-69-5l-74-11l-82-18l-70-19l-66-23l-59-26l-61-32l-58-36l-60-44l-61-49l-60-55l-61-61l-61-67l-60-73l-59-76l46 66l47 77l45 82l48 94l45 99l47 113l48 122l47 131l52 153l49 157l101 352l97 376l112 477l25 68l14 29l14 22z"/>
<path fill="#3400ff" d="M2489 4436l24 24l102-108l99-96l99-86l96-73l84-56l84-49l87-43l88-36l96-32l99-25l108-19l109-14l120-7l129-3l135 3l147 8l66-106l65-110l129-237l83-164l79-166l79-174l82-192l11-32l9-36l5-38l2-37l-2-33l-6-27l-58-176l-93-253l-84-200l-41-86l-43-84l-40-73l-41-66l-41-59l-41-52l-41-45l-41-39l-43-33l-41-25l-43-18l-45-12l-43-3l-43 5l-43 12l-43 19l-43 28l-45 36l-61 62l-60 77l-56 84l-128 215l-84 128l-107 147l-105 127l-56 61l-56 55l-63 57l-65 54l-81 64l-75 54l-66 43l-62 35l-63 2l-69-5l-74-11l-82-18l-70-19l-66-23l-59-26l-61-32l-58-36l-60-44l-61-49l-60-55l-61-61l-61-67l-60-73l-59-76l46 66l47 77l45 82l48 94l45 99l47 113l48 122l47 131l52 153l49 157l101 352l97 376l112 477l25 68l14 29z"/>
<path fill="#2c00ff" d="M2489 4436l18 18l111-117l107-103l83-72l81-63l89-61l87-52l89-45l91-37l96-33l98-25l108-20l110-13l119-8l129-3l145 4l151 8l128-212l126-231l83-164l79-166l79-174l82-192l11-32l9-36l5-38l2-37l-2-33l-6-27l-58-176l-93-253l-84-200l-41-86l-43-84l-40-73l-41-66l-41-59l-41-52l-41-45l-41-39l-43-33l-41-25l-43-18l-45-12l-43-3l-43 5l-43 12l-43 19l-43 28l-45 36l-61 62l-60 77l-56 84l-128 215l-84 128l-107 147l-105 127l-56 61l-56 55l-63 57l-65 54l-81 64l-75 54l-66 43l-62 35l-63 2l-69-5l-74-11l-82-18l-70-19l-66-23l-59-26l-61-32l-58-36l-60-44l-61-49l-60-55l-61-61l-61-67l-60-73l-59-76l46 66l47 77l45 82l48 94l45 99l47 113l48 122l47 131l52 153l49 157l101 352l97 376l112 477l25 68l14 29z"/>
<path fill="#2400ff" d="M2676 2611l-63 2l-69-5l-74-11l-82-18l-70-19l-66-23l-59-26l-61-32l-58-36l-60-44l-61-49l-60-55l-61-61l-61-67l-60-73l-59-76l46 66l47 77l45 82l48 94l45 99l47 113l48 122l47 131l52 153l49 157l101 352l97 376l112 477l25 68l14 29l14 22l12 13l95-102l95-94l95-85l89-71l90-64l87-52l92-47l94-40l96-32l102-27l108-19l114-14l119-8l135-2l140 3l156 10l100-166l97-173l100-194l97-200l90-197l86-200l11-32l9-36l5-38l2-37l-2-33l-6-27l-26-80l-69-201l-67-176l-53-128l-54-117l-54-105l-54-93l-51-79l-52-67l-52-57l-49-44l-50-34l-51-25l-52-14l-49-4l-31 3l-30 7l-30 10l-30 14l-30 18l-30 21l-60 54l-59 66l-58 80l-38 61l-122 204l-110 165l-93 126l-91 109l-58 63l-56 55l-63 57l-65 54l-81 64l-75 54l-66 43z"/>
<path fill="#1c00ff" d="M2676 2611l-63 2l-69-5l-74-11l-82-18l-70-19l-66-23l-59-26l-61-32l-58-36l-60-44l-61-49l-60-55l-61-61l-61-67l-60-73l-59-76l46 66l47 77l48 86l47 95l47 104l48 114l47 122l47 132l50 147l52 165l99 346l96 377l110 468l25 68l14 29l20 29l99-105l95-95l92-83l91-73l91-64l89-55l92-47l94-39l96-32l103-26l108-20l114-14l120-7l135-2l145 4l155 10l97-162l97-174l101-194l97-201l86-189l86-200l11-32l9-36l5-38l2-37l-2-33l-6-27l-26-80l-69-201l-67-176l-53-128l-54-117l-54-105l-54-93l-51-79l-52-67l-52-57l-49-44l-50-34l-51-25l-52-14l-49-4l-31 3l-30 7l-30 10l-30 14l-30 18l-30 21l-60 54l-59 66l-58 80l-38 61l-122 204l-110 165l-93 126l-91 109l-58 63l-56 55l-63 57l-65 54l-81 64l-75 54l-66 43z"/>
<path fill="#1400ff" d="M2676 2611l-63 2l-69-5l-74-11l-82-18l-70-19l-66-23l-59-26l-61-32l-58-36l-60-44l-61-49l-60-55l-61-61l-61-67l-60-73l-59-76l48 69l47 77l48 87l47 95l47 105l48 114l47 123l48 132l49 148l50 158l99 346l96 377l110 468l25 68l14 29l15 23l101-109l96-95l91-83l91-73l91-65l89-54l92-47l94-40l100-33l102-26l109-20l114-13l120-7l135-2l146 5l159 10l99-164l97-175l97-188l96-201l87-190l82-192l11-32l9-36l5-38l2-37l-2-33l-6-27l-26-80l-69-201l-67-176l-53-128l-54-117l-54-105l-54-93l-51-79l-52-67l-52-57l-49-44l-50-34l-51-25l-52-14l-49-4l-31 3l-30 7l-30 10l-30 14l-30 18l-30 21l-60 54l-59 66l-58 80l-38 61l-122 204l-110 165l-93 126l-91 109l-58 63l-56 55l-63 57l-65 54l-81 64l-75 54l-66 43z"/>
<path fill="#0c00ff" d="M2676 2611l-63 2l-69-5l-74-11l-82-18l-70-19l-66-23l-59-26l-61-32l-58-36l-60-44l-61-49l-60-55l-61-61l-61-67l-60-73l-59-76l48 69l47 77l48 87l47 95l47 105l48 114l49 129l48 132l49 149l50 158l99 347l94 369l110 468l25 68l25 46l98-108l98-97l94-86l90-74l91-64l92-57l92-47l94-39l96-32l103-26l108-20l119-13l125-7l136-1l141 5l163 11l96-162l97-175l97-188l97-202l83-182l82-192l11-32l9-36l5-38l2-37l-2-33l-6-27l-26-80l-69-201l-67-176l-53-128l-54-117l-54-105l-54-93l-51-79l-52-67l-52-57l-49-44l-50-34l-51-25l-52-14l-49-4l-31 3l-30 7l-30 10l-30 14l-30 18l-30 21l-60 54l-59 66l-58 80l-38 61l-122 204l-110 165l-93 126l-91 109l-58 63l-56 55l-63 57l-65 54l-81 64l-75 54l-66 43z"/>
<path fill="#0400ff" d="M2676 2611l-63 2l-69-5l-74-11l-82-18l-70-19l-66-23l-59-26l-61-32l-58-36l-60-44l-61-49l-60-55l-61-61l-61-67l-60-73l-59-76l48 69l47 77l50 91l47 96l48 105l47 114l49 130l48 133l82 251l81 278l56 207l56 219l125 529l25 68l20 39l101-110l97-98l91-84l91-74l90-65l92-57l95-49l94-39l100-34l102-25l109-19l115-13l125-7l141-1l146 6l162 11l94-158l97-176l97-188l97-203l79-174l82-192l11-32l9-36l5-38l2-37l-2-33l-6-27l-26-80l-69-201l-67-176l-53-128l-54-117l-54-105l-54-93l-51-79l-52-67l-52-57l-49-44l-50-34l-51-25l-52-14l-49-4l-31 3l-30 7l-30 10l-30 14l-30 18l-30 21l-60 54l-59 66l-58 80l-38 61l-122 204l-110 165l-93 126l-91 109l-58 63l-56 55l-63 57l-65 54l-81 64l-75 54l-66 43z"/>
<path fill="#0004ff" d="M2676 2611l-63 2l-69-5l-74-11l-82-18l-70-19l-66-23l-59-26l-61-32l-58-36l-60-44l-61-49l-60-55l-61-61l-61-67l-60-73l-59-76l48 69l47 77l50 91l47 96l48 105l47 114l49 130l48 133l84 258l84 287l53 199l56 219l123 521l25 68l16 32l100-111l97-98l94-86l93-76l90-65l92-57l91-48l98-41l100-33l103-25l113-20l115-12l126-6l136-1l153 7l160 11l95-160l97-177l97-190l93-195l79-175l79-184l11-32l9-36l5-38l2-37l-2-33l-6-27l-26-80l-69-201l-67-176l-53-128l-54-117l-54-105l-54-93l-51-79l-52-67l-52-57l-49-44l-50-34l-51-25l-52-14l-49-4l-31 3l-30 7l-30 10l-30 14l-30 18l-30 21l-60 54l-59 66l-58 80l-38 61l-122 204l-110 165l-93 126l-91 109l-58 63l-56 55l-63 57l-65 54l-81 64l-75 54l-66 43z"/>
<path fill="#000cff" d="M2676 2611l-63 2l-69-5l-74-11l-82-18l-70-19l-66-23l-59-26l-61-32l-58-36l-60-44l-61-49l-60-55l-61-61l-61-67l-60-73l-59-76l48 69l47 77l50 91l47 96l48 105l49 120l47 124l50 139l86 266l86 296l108 413l118 503l12 35l25 57l102-113l96-98l97-89l90-75l89-64l92-58l95-49l94-39l100-34l107-26l109-18l120-13l131-6l137 0l148 6l164 13l96-163l94-171l96-190l94-196l79-175l75-176l11-32l9-36l5-38l2-37l-2-33l-6-27l-26-80l-69-201l-67-176l-53-128l-54-117l-54-105l-54-93l-51-79l-52-67l-52-57l-49-44l-50-34l-51-25l-52-14l-49-4l-31 3l-30 7l-30 10l-30 14l-30 18l-30 21l-60 54l-59 66l-58 80l-38 61l-122 204l-110 165l-93 126l-91 109l-58 63l-56 55l-63 57l-65 54l-81 64l-75 54l-66 43z"/>
<path fill="#0014ff" d="M2676 2611l-63 2l-69-5l-74-11l-82-18l-70-19l-66-23l-59-26l-61-32l-58-36l-60-44l-61-49l-60-55l-61-61l-61-67l-60-73l-59-76l48 69l50 81l47 87l49 100l50 111l47 115l48 124l49 140l86 267l88 305l108 414l105 452l21 69l21 49l103-116l97-98l96-89l92-77l90-65l92-57l95-49l94-40l100-32l103-26l114-19l115-12l127-6l142 1l152 6l169 14l94-159l97-179l97-191l93-197l75-168l72-167l11-32l9-36l5-38l2-37l-2-33l-6-27l-26-80l-69-201l-67-176l-53-128l-54-117l-54-105l-54-93l-51-79l-52-67l-52-57l-49-44l-50-34l-51-25l-52-14l-49-4l-31 3l-30 7l-30 10l-30 14l-30 18l-30 21l-60 54l-59 66l-58 80l-38 61l-122 204l-110 165l-93 126l-91 109l-58 63l-56 55l-63 57l-65 54l-81 64l-75 54l-66 43z"/>
<path fill="#001cff" d="M2676 2611l-63 2l-69-5l-74-11l-82-18l-70-19l-66-23l-59-26l-61-32l-58-36l-60-44l-61-49l-60-55l-61-61l-61-67l-60-73l-59-76l48 69l50 81l47 87l49 100l50 111l47 115l48 124l49 140l88 274l89 305l105 407l105 452l21 69l17 40l105-117l99-101l93-87l92-77l93-67l92-57l91-48l98-41l100-32l108-26l109-18l121-12l127-6l142 1l154 8l168 14l94-162l93-172l97-192l94-198l143-327l11-32l9-36l5-38l2-37l-2-33l-6-27l-26-80l-69-201l-67-176l-53-128l-54-117l-54-105l-54-93l-51-79l-52-67l-52-57l-49-44l-50-34l-51-25l-52-14l-49-4l-31 3l-30 7l-30 10l-30 14l-30 18l-30 21l-60 54l-59 66l-58 80l-38 61l-122 204l-110 165l-93 126l-91 109l-58 63l-56 55l-63 57l-65 54l-81 64l-75 54l-66 43z"/>
<path fill="#0024ff" d="M2676 2611l-63 2l-69-5l-74-11l-82-18l-70-19l-66-23l-59-26l-61-32l-58-36l-60-44l-61-49l-60-55l-61-61l-61-67l-60-73l-59-76l48 69l50 81l47 87l49 100l50 111l47 115l50 130l49 140l91 282l90 315l101 392l103 443l9 34l25 67l102-114l100-104l96-90l92-77l95-69l92-58l92-47l98-41l100-32l104-25l114-19l121-11l127-5l143 1l159 8l167 14l95-164l94-173l93-186l93-197l140-320l11-32l9-36l5-38l2-37l-2-33l-6-27l-26-80l-69-201l-67-176l-53-128l-54-117l-54-105l-54-93l-51-79l-52-67l-52-57l-49-44l-50-34l-51-25l-52-14l-49-4l-31 3l-30 7l-30 10l-30 14l-30 18l-30 21l-60 54l-59 66l-58 80l-38 61l-122 204l-110 165l-93 126l-91 109l-58 63l-56 55l-63 57l-65 54l-81 64l-75 54l-66 43z"/>
<path fill="#002cff" d="M2676 2611l-63 2l-69-5l-74-11l-82-18l-70-19l-66-23l-59-26l-61-32l-58-36l-60-44l-61-49l-60-55l-61-61l-61-67l-60-73l-59-76l48 69l50 81l47 87l49 100l50 111l47 115l50 130l49 140l91 282l92 323l101 393l101 434l9 34l21 59l106-119l98-102l95-90l92-77l92-68l95-59l95-49l94-40l101-32l103-25l114-19l121-11l132-5l143 2l154 8l177 15l93-160l93-174l93-186l94-198l136-312l11-32l9-36l5-38l2-37l-2-33l-6-27l-26-80l-69-201l-67-176l-53-128l-54-117l-54-105l-54-93l-51-79l-52-67l-52-57l-49-44l-50-34l-51-25l-52-14l-49-4l-31 3l-30 7l-30 10l-30 14l-30 18l-30 21l-60 54l-59 66l-58 80l-38 61l-122 204l-110 165l-93 126l-91 109l-58 63l-56 55l-63 57l-65 54l-81 64l-75 54l-66 43z"/>
<path fill="#0034ff" d="M2676 2611l-63 2l-69-5l-74-11l-82-18l-70-19l-66-23l-59-26l-61-32l-58-36l-60-44l-61-49l-60-55l-61-61l-61-67l-60-73l-59-76l48 69l50 81l47 87l49 100l50 111l47 115l50 130l49 140l93 289l92 324l99 385l101 434l9 34l18 50l106-121l98-102l95-90l95-80l92-67l91-58l95-49l98-41l100-32l108-26l110-17l122-11l132-5l144 2l160 9l175 16l90-157l94-174l93-186l93-199l133-304l11-32l9-36l5-38l2-37l-2-33l-6-27l-26-80l-69-201l-67-176l-53-128l-54-117l-54-105l-54-93l-51-79l-52-67l-52-57l-49-44l-50-34l-51-25l-52-14l-49-4l-31 3l-30 7l-30 10l-30 14l-30 18l-30 21l-60 54l-59 66l-58 80l-38 61l-122 204l-110 165l-93 126l-91 109l-58 63l-56 55l-63 57l-65 54l-81 64l-75 54l-66 43z"/>
<path fill="#003cff" d="M2676 2611l-63 2l-69-5l-74-11l-82-18l-70-19l-66-23l-59-26l-61-32l-58-36l-60-44l-61-49l-60-55l-61-61l-61-67l-60-73l-59-76l48 69l50 81l47 87l49 100l50 111l47 115l50 130l49 140l95 296l93 325l98 385l99 426l23 75l108-122l100-105l97-92l92-78l92-68l92-57l95-49l97-41l101-33l108-25l115-17l122-11l133-4l144 3l161 10l174 16l92-160l93-175l90-180l93-199l129-296l11-32l9-36l5-38l2-37l-2-33l-6-27l-26-80l-69-201l-67-176l-53-128l-54-117l-54-105l-54-93l-51-79l-52-67l-52-57l-49-44l-50-34l-51-25l-52-14l-49-4l-31 3l-30 7l-30 10l-30 14l-30 18l-30 21l-60 54l-59 66l-58 80l-38 61l-122 204l-110 165l-93 126l-91 109l-58 63l-56 55l-63 57l-65 54l-81 64l-75 54l-66 43z"/>
<path fill="#0044ff" d="M2676 2611l-63 2l-69-5l-74-11l-82-18l-70-19l-66-23l-59-26l-61-32l-58-36l-60-44l-61-49l-60-55l-61-61l-61-67l-60-73l-59-76l48 69l50 81l47 87l49 100l50 111l47 115l50 130l49 140l95 296l95 333l84 325l111 478l20 66l108-124l100-105l97-92l95-80l92-68l91-58l95-49l98-40l101-33l108-24l116-18l122-10l133-4l145 4l161 10l178 17l93-163l93-176l90-181l93-200l122-280l11-32l9-36l5-38l2-37l-2-33l-6-27l-26-80l-69-201l-67-176l-53-128l-54-117l-54-105l-54-93l-51-79l-52-67l-52-57l-49-44l-50-34l-51-25l-52-14l-49-4l-31 3l-30 7l-30 10l-30 14l-30 18l-30 21l-60 54l-59 66l-58 80l-38 61l-122 204l-110 165l-93 126l-91 109l-58 63l-56 55l-63 57l-65 54l-81 64l-75 54l-66 43z"/>
<path fill="#004cff" d="M2676 2611l-63 2l-69-5l-74-11l-82-18l-70-19l-66-23l-59-26l-61-32l-58-36l-60-44l-61-49l-60-55l-61-61l-61-67l-60-73l-59-76l48 69l50 81l47 87l49 100l50 111l47 115l50 130l49 140l95 296l95 333l86 334l109 469l17 57l106-123l100-105l97-93l94-81l94-70l92-57l94-50l98-41l101-32l108-25l116-17l122-10l138-3l145 3l162 11l182 18l90-159l94-177l93-189l90-193l118-272l11-32l9-36l5-38l2-37l-2-33l-6-27l-26-80l-69-201l-67-176l-53-128l-54-117l-54-105l-54-93l-51-79l-52-67l-52-57l-49-44l-50-34l-51-25l-52-14l-49-4l-31 3l-30 7l-30 10l-30 14l-30 18l-30 21l-60 54l-59 66l-58 80l-38 61l-122 204l-110 165l-93 126l-91 109l-58 63l-56 55l-63 57l-65 54l-81 64l-75 54l-66 43z"/>
<path fill="#0054ff" d="M2676 2611l-63 2l-69-5l-74-11l-82-18l-70-19l-66-23l-59-26l-61-32l-58-36l-60-44l-61-49l-60-55l-61-61l-61-67l-60-73l-59-76l48 69l50 81l47 87l49 100l50 111l47 115l50 130l49 140l95 296l97 341l88 343l105 452l14 47l107-123l102-108l96-93l95-81l94-70l91-58l95-49l98-41l101-32l109-24l115-18l123-9l134-3l150 4l167 11l181 18l91-161l90-171l94-189l89-194l94-213l32-83l9-36l5-38l2-37l-2-33l-6-27l-26-80l-69-201l-67-176l-53-128l-54-117l-54-105l-54-93l-51-79l-52-67l-52-57l-49-44l-50-34l-51-25l-52-14l-49-4l-31 3l-30 7l-30 10l-30 14l-30 18l-30 21l-60 54l-59 66l-58 80l-38 61l-122 204l-110 165l-93 126l-91 109l-58 63l-56 55l-63 57l-65 54l-81 64l-75 54l-66 43z"/>
<path fill="#005cff" d="M2676 2611l-63 2l-69-5l-74-11l-82-18l-70-19l-66-23l-59-26l-61-32l-58-36l-60-44l-61-49l-60-55l-61-61l-61-67l-60-73l-59-76l48 69l50 81l47 87l49 100l50 111l47 115l50 130l49 140l97 303l97 342l92 361l110 464l107-125l102-108l99-96l94-80l94-71l92-57l94-50l98-40l106-33l109-24l116-17l123-9l135-2l151 5l167 12l180 18l93-165l89-171l90-183l90-194l93-214l29-74l9-36l5-38l2-37l-2-33l-6-27l-26-80l-69-201l-67-176l-53-128l-54-117l-54-105l-54-93l-51-79l-52-67l-52-57l-49-44l-50-34l-51-25l-52-14l-49-4l-31 3l-30 7l-30 10l-30 14l-30 18l-30 21l-60 54l-59 66l-58 80l-38 61l-122 204l-110 165l-93 126l-91 109l-58 63l-56 55l-63 57l-65 54l-81 64l-75 54l-66 43z"/>
<path fill="#0064ff" d="M2676 2611l-63 2l-69-5l-74-11l-82-18l-70-19l-66-23l-59-26l-61-32l-58-36l-60-44l-61-49l-60-55l-61-61l-61-67l-60-73l-59-76l48 69l50 81l47 87l49 100l50 111l47 115l50 130l49 140l97 303l97 342l92 361l107 455l108-126l101-109l96-93l97-84l94-70l94-60l95-49l98-41l102-31l109-24l116-17l123-9l135-2l156 5l163 12l189 20l90-161l90-172l90-183l89-195l94-214l25-66l9-36l5-38l2-37l-2-33l-6-27l-26-80l-69-201l-67-176l-53-128l-54-117l-54-105l-54-93l-51-79l-52-67l-52-57l-49-44l-50-34l-51-25l-52-14l-49-4l-31 3l-30 7l-30 10l-30 14l-30 18l-30 21l-60 54l-59 66l-58 80l-38 61l-122 204l-110 165l-93 126l-91 109l-58 63l-56 55l-63 57l-65 54l-81 64l-75 54l-66 43z"/>
<path fill="#006cff" d="M2676 2611l-63 2l-69-5l-74-11l-82-18l-70-19l-66-23l-59-26l-61-32l-58-36l-60-44l-61-49l-60-55l-61-61l-61-67l-60-73l-59-76l48 69l50 81l47 87l49 100l50 111l47 115l50 130l49 140l97 303l97 342l95 370l101 436l111-129l101-109l99-96l93-81l94-71l95-60l94-49l99-40l101-32l110-23l116-16l128-9l141-2l147 6l168 13l188 20l91-165l90-172l90-184l90-196l89-206l22-58l9-36l5-38l2-37l-2-33l-6-27l-26-80l-69-201l-67-176l-53-128l-54-117l-54-105l-54-93l-51-79l-52-67l-52-57l-49-44l-50-34l-51-25l-52-14l-49-4l-31 3l-30 7l-30 10l-30 14l-30 18l-30 21l-60 54l-59 66l-58 80l-38 61l-122 204l-110 165l-93 126l-91 109l-58 63l-56 55l-63 57l-65 54l-81 64l-75 54l-66 43z"/>
<path fill="#0074ff" d="M2677 2611l-64 2l-69-5l-74-11l-82-18l-70-19l-66-23l-59-26l-61-32l-58-36l-60-44l-61-49l-60-55l-61-61l-61-67l-60-73l-59-76l48 69l50 81l47 87l49 100l50 111l47 115l48 124l49 140l97 302l97 341l97 378l99 426l110-130l104-111l98-97l94-81l91-69l94-60l94-49l98-40l102-32l109-24l117-16l128-8l141-1l152 6l169 13l191 21l90-161l90-173l90-185l89-196l90-207l18-49l9-36l5-38l2-37l-2-33l-6-27l-26-80l-69-201l-67-176l-53-128l-54-117l-54-105l-54-93l-51-79l-52-67l-52-57l-49-44l-50-34l-51-25l-52-14l-49-4l-31 3l-30 7l-30 10l-30 14l-30 18l-30 21l-60 54l-59 66l-58 80l-38 61l-122 204l-110 165l-93 126l-91 109l-58 63l-56 55l-59 54l-65 54l-77 60l-79 58l-66 43z"/>
<path fill="#007cff" d="M2678 2611l-61 2l-68-5l-79-11l-82-18l-70-19l-66-23l-59-26l-61-32l-58-36l-60-44l-61-49l-60-55l-61-61l-61-67l-60-73l-59-76l48 69l50 81l47 87l49 100l50 111l47 115l48 124l49 140l97 302l97 341l97 378l96 416l108-128l106-114l101-99l93-82l91-68l94-60l95-50l98-40l102-31l109-24l117-15l129-9l141 0l153 6l174 14l190 22l88-158l89-174l90-185l90-196l90-207l14-41l9-36l5-38l2-37l-2-33l-6-27l-26-80l-69-201l-67-176l-53-128l-54-117l-54-105l-54-93l-51-79l-52-67l-52-57l-49-44l-50-34l-51-25l-52-14l-49-4l-31 3l-30 7l-30 10l-30 14l-30 18l-30 21l-60 54l-59 66l-58 80l-38 61l-122 204l-110 165l-90 122l-91 110l-57 61l-57 57l-59 54l-64 54l-76 60l-79 58l-67 44z"/>
<path fill="#0083ff" d="M2680 2611l-63 2l-68-5l-75-11l-82-17l-70-19l-67-23l-62-27l-61-32l-58-36l-60-44l-61-49l-60-55l-61-61l-61-67l-60-73l-59-76l48 69l47 77l50 91l47 96l48 105l49 120l47 124l50 139l97 301l97 340l96 377l97 414l112-133l103-112l96-94l96-84l93-71l94-60l95-49l98-40l103-32l109-23l118-15l129-8l141 0l153 7l175 15l194 22l89-162l90-174l89-186l86-189l90-208l11-32l9-36l5-38l2-37l-2-33l-6-27l-26-80l-69-201l-67-176l-53-128l-54-117l-54-105l-54-93l-51-79l-52-67l-52-57l-49-44l-50-34l-51-25l-52-14l-49-4l-31 3l-30 7l-30 10l-30 14l-30 18l-30 21l-63 56l-58 67l-56 77l-38 61l-122 204l-106 160l-94 127l-91 110l-55 59l-56 56l-58 54l-64 54l-78 61l-77 57l-70 46z"/>
<path fill="#008bff" d="M2682 2611l-61 2l-68-4l-74-11l-84-17l-70-19l-66-22l-63-27l-61-32l-60-38l-60-43l-60-49l-61-54l-60-61l-60-66l-60-72l-62-80l48 69l47 77l50 91l47 96l48 105l49 120l47 124l50 139l95 294l97 339l96 377l97 412l109-130l106-116l97-97l96-84l94-71l94-60l94-49l99-40l102-31l110-23l118-15l129-7l142 0l154 7l175 16l198 23l86-158l90-175l90-187l86-189l86-200l11-32l9-36l5-38l2-37l-2-33l-6-27l-26-80l-69-201l-67-176l-53-128l-54-117l-54-105l-54-93l-51-79l-52-67l-52-57l-49-44l-50-34l-51-25l-52-14l-49-4l-31 3l-30 7l-30 10l-30 14l-30 18l-30 21l-63 56l-58 67l-56 77l-38 61l-122 204l-106 160l-91 123l-91 110l-55 60l-56 56l-58 54l-63 54l-76 60l-74 54l-86 58z"/>
<path fill="#0093ff" d="M2685 2611l-64 2l-68-4l-74-11l-84-17l-70-19l-66-22l-63-27l-61-32l-60-38l-60-43l-60-49l-61-54l-60-61l-60-66l-60-72l-62-80l48 69l47 77l50 91l47 96l48 105l47 114l49 130l48 133l95 293l96 338l97 376l96 411l110-131l105-115l97-98l96-84l93-71l94-61l98-51l98-40l103-30l110-23l118-15l130-7l142 1l159 8l177 16l195 24l89-162l89-176l86-179l90-198l79-184l11-32l9-36l5-38l2-37l-2-33l-6-27l-26-80l-69-201l-67-176l-53-128l-54-117l-54-105l-54-93l-51-79l-52-67l-52-57l-49-44l-50-34l-51-25l-52-14l-49-4l-31 3l-30 7l-30 10l-30 14l-30 18l-30 21l-63 56l-58 67l-56 77l-38 61l-122 204l-106 160l-91 123l-91 110l-55 60l-56 56l-58 54l-60 51l-143 110l-97 67z"/>
<path fill="#009bff" d="M2688 2610l-63 3l-68-4l-77-11l-81-16l-74-20l-66-22l-63-27l-60-32l-61-38l-60-43l-60-49l-61-54l-60-61l-60-66l-60-72l-62-80l48 69l47 77l50 91l47 96l48 105l47 114l49 130l48 133l95 293l96 338l95 367l96 410l109-132l105-115l100-100l95-85l93-71l94-61l98-51l99-39l102-31l111-22l118-14l131-7l142 1l160 9l177 16l199 25l86-159l90-176l86-180l90-198l75-176l11-32l9-36l5-38l2-37l-2-33l-6-27l-26-80l-69-201l-67-176l-53-128l-54-117l-54-105l-54-93l-51-79l-52-67l-52-57l-49-44l-50-34l-51-25l-52-14l-49-4l-31 3l-30 7l-30 10l-30 14l-30 18l-30 21l-63 56l-58 67l-56 77l-38 61l-122 204l-106 160l-89 120l-91 110l-54 60l-53 54l-57 53l-59 51l-139 107l-110 77z"/>
<path fill="#00a3ff" d="M2692 2610l-63 3l-67-4l-75-9l-83-17l-75-20l-67-22l-63-27l-61-32l-60-37l-61-43l-61-49l-60-55l-61-61l-61-67l-60-72l-62-80l48 69l47 77l48 87l47 95l47 105l48 114l49 129l48 132l97 300l94 330l95 366l96 408l111-134l104-116l100-100l95-85l93-71l94-61l95-49l98-40l103-30l115-23l118-14l131-6l143 1l161 10l177 16l203 26l87-162l86-170l90-188l86-192l72-167l11-32l9-36l5-38l2-37l-2-33l-6-27l-26-80l-69-201l-67-176l-53-128l-54-117l-54-105l-54-93l-51-79l-52-67l-52-57l-49-44l-50-34l-51-25l-52-14l-49-4l-31 3l-30 7l-30 10l-30 14l-30 18l-30 21l-63 56l-58 67l-56 77l-38 61l-122 204l-105 158l-89 121l-88 107l-55 61l-52 53l-113 102l-133 104z"/>
<path fill="#00abff" d="M2696 2609l-63 4l-66-3l-75-10l-85-16l-75-20l-67-22l-63-26l-64-34l-60-37l-61-43l-61-49l-60-55l-61-61l-61-67l-60-72l-62-80l48 69l47 77l48 87l47 95l47 105l48 114l49 129l48 132l94 293l95 329l95 366l95 406l114-137l104-116l100-101l94-84l93-72l94-61l95-49l98-40l103-30l111-22l119-14l131-6l148 2l161 10l183 18l201 26l90-166l86-171l86-181l86-192l68-159l11-32l9-36l5-38l2-37l-2-33l-6-27l-26-80l-69-201l-67-176l-53-128l-54-117l-54-105l-54-93l-51-79l-52-67l-52-57l-49-44l-50-34l-51-25l-52-14l-49-4l-31 3l-30 7l-30 10l-32 15l-30 18l-30 22l-63 56l-58 67l-56 78l-39 61l-116 196l-106 161l-91 123l-88 107l-104 111l-109 99l-127 100z"/>
<path fill="#00b3ff" d="M2700 2609l-63 4l-67-3l-75-9l-84-16l-75-20l-68-22l-63-26l-64-33l-60-37l-61-43l-61-49l-63-57l-61-61l-61-67l-60-72l-62-80l48 69l47 77l48 87l47 95l47 105l48 114l47 123l48 132l94 292l95 328l95 365l95 405l113-138l104-116l102-103l95-85l92-72l94-61l95-49l99-40l103-30l111-21l119-14l132-5l148 2l162 11l183 18l205 27l87-163l86-171l86-182l87-192l64-151l11-32l9-36l5-38l2-37l-2-33l-6-27l-26-80l-69-201l-67-176l-53-128l-54-117l-54-105l-54-93l-51-79l-52-67l-52-57l-49-44l-50-34l-51-25l-52-14l-49-4l-31 3l-30 7l-30 10l-32 15l-30 18l-30 22l-63 56l-58 67l-56 78l-39 61l-116 196l-106 161l-88 119l-88 108l-101 108l-108 99l-116 93l-152 113z"/>
<path fill="#00bbff" d="M2705 2608l-60 5l-66-2l-74-9l-85-15l-77-20l-72-23l-63-26l-64-32l-60-37l-61-43l-61-48l-63-57l-61-61l-64-70l-60-72l-62-80l48 69l47 77l48 87l47 95l47 105l48 114l47 123l48 132l94 292l95 328l95 365l93 394l113-137l106-120l101-103l95-85l92-72l94-61l95-49l99-39l103-30l112-22l119-13l132-5l144 3l167 11l184 19l208 28l89-167l86-172l87-183l86-193l57-134l11-32l9-36l5-38l2-37l-2-33l-6-27l-26-80l-69-201l-67-176l-53-128l-54-117l-54-105l-54-93l-51-79l-52-67l-52-57l-49-44l-50-34l-51-25l-52-14l-49-4l-31 3l-30 7l-30 10l-32 15l-30 18l-30 22l-63 56l-58 67l-56 78l-39 61l-116 196l-103 157l-88 120l-88 106l-101 110l-104 96l-107 86l-166 126z"/>
<path fill="#00c3ff" d="M2709 2608l-60 5l-66-2l-74-8l-85-15l-78-20l-72-23l-66-27l-64-32l-60-37l-61-43l-61-48l-63-57l-61-61l-64-70l-60-72l-62-80l46 66l47 77l48 86l47 95l47 104l48 114l47 122l47 132l95 291l95 327l94 364l93 393l115-141l106-119l101-104l95-85l93-72l93-61l95-49l99-39l103-30l112-21l120-13l133-4l144 3l168 12l184 19l212 29l87-164l86-172l86-183l86-194l54-126l11-32l9-36l5-38l2-37l-2-33l-6-27l-26-80l-69-201l-67-176l-53-128l-54-117l-54-105l-54-93l-51-79l-52-67l-52-57l-49-44l-50-34l-51-25l-52-14l-49-4l-31 3l-30 7l-30 10l-32 15l-30 18l-33 23l-62 58l-56 64l-56 78l-39 61l-116 196l-103 157l-88 120l-85 104l-98 105l-103 97l-97 79l-180 139z"/>
<path fill="#00cbff" d="M2714 2607l-61 6l-65-1l-74-8l-85-15l-79-19l-72-23l-66-27l-65-33l-62-37l-62-44l-61-48l-63-57l-61-61l-64-70l-60-72l-62-80l46 66l47 77l48 86l47 95l45 99l48 113l47 122l47 132l95 290l95 326l94 364l93 391l115-141l105-120l99-102l96-88l93-72l93-61l94-50l99-39l104-30l112-21l120-12l132-5l150 4l168 12l191 21l209 29l85-161l87-173l86-183l86-194l50-118l11-32l9-36l5-38l2-37l-2-33l-6-27l-26-80l-69-201l-67-176l-53-128l-54-117l-54-105l-54-93l-51-79l-52-67l-52-57l-49-44l-50-34l-51-25l-52-14l-49-4l-31 3l-30 7l-30 10l-32 15l-30 18l-33 23l-62 58l-56 64l-56 78l-39 61l-113 192l-103 156l-88 120l-85 105l-98 106l-99 94l-92 76l-186 146z"/>
<path fill="#00d3ff" d="M2719 2606l-62 6l-65 0l-74-8l-82-14l-82-19l-73-23l-66-27l-65-32l-60-36l-64-44l-61-49l-63-57l-61-60l-63-69l-64-76l-62-80l46 66l47 77l48 86l47 95l45 99l48 113l47 122l47 132l95 290l92 319l93 353l95 398l116-144l105-120l99-102l96-88l92-72l94-61l94-50l99-39l104-30l112-20l121-12l133-4l150 4l169 13l185 21l219 30l83-158l86-173l86-184l87-194l46-110l11-32l9-36l5-38l2-37l-2-33l-6-27l-26-80l-69-201l-67-176l-53-128l-54-117l-54-105l-54-93l-51-79l-52-67l-52-57l-49-44l-50-34l-51-25l-52-14l-49-4l-33 4l-30 6l-30 11l-32 15l-30 19l-33 23l-62 58l-56 65l-54 75l-39 61l-113 192l-103 156l-85 117l-85 105l-95 103l-98 94l-83 69l-107 84l-92 76z"/>
<path fill="#00dbff" d="M2723 2605l-58 7l-69 0l-74-7l-82-14l-83-19l-73-23l-66-26l-68-34l-60-36l-64-44l-61-49l-63-57l-61-60l-63-69l-64-76l-62-80l46 66l47 77l45 82l48 94l45 99l47 113l48 122l47 131l93 282l94 325l93 353l94 396l117-144l107-124l101-104l93-86l95-75l91-58l94-50l99-39l104-30l108-19l121-12l138-4l151 5l169 14l192 22l216 30l85-162l86-174l87-185l86-195l39-93l11-32l9-36l5-38l2-37l-2-33l-6-27l-26-80l-69-201l-67-176l-53-128l-54-117l-54-105l-54-93l-51-79l-52-67l-52-57l-49-44l-50-34l-51-25l-52-14l-49-4l-33 4l-30 6l-30 11l-32 15l-30 19l-33 23l-62 58l-56 65l-54 75l-39 61l-113 192l-100 152l-85 117l-85 105l-91 101l-97 92l-65 56l-127 101l-90 76z"/>
<path fill="#00e3ff" d="M2728 2604l-60 8l-64 0l-73-6l-83-13l-83-20l-77-23l-67-26l-68-33l-60-36l-64-44l-64-51l-63-57l-61-60l-63-69l-64-76l-62-80l46 66l47 77l45 82l48 94l45 99l47 113l48 122l47 131l93 282l92 317l93 352l94 395l118-148l107-123l101-105l93-86l92-73l93-61l95-49l99-39l104-29l109-20l125-11l134-3l152 5l170 14l192 23l219 31l84-159l86-175l86-185l86-195l36-85l11-32l9-36l5-38l2-37l-2-33l-6-27l-26-80l-69-201l-67-176l-53-128l-54-117l-54-105l-54-93l-51-79l-52-67l-52-57l-49-44l-50-34l-51-25l-52-14l-49-4l-33 4l-30 6l-30 11l-32 15l-30 19l-33 23l-62 58l-56 65l-54 75l-39 61l-113 192l-100 152l-85 117l-82 101l-91 102l-95 91l-70 60l-123 99l-88 76z"/>
<path fill="#00ebff" d="M2733 2603l-61 9l-63 1l-73-6l-83-13l-84-20l-78-23l-70-27l-65-32l-63-37l-64-44l-64-51l-60-54l-64-63l-63-69l-64-76l-62-80l46 66l47 77l45 82l48 94l45 99l47 113l46 116l47 130l92 282l93 316l93 351l94 393l115-145l107-124l100-105l96-89l91-73l93-61l94-50l99-39l104-29l113-20l122-11l134-3l152 6l175 15l193 23l223 32l85-163l86-176l86-186l83-188l32-76l11-32l9-36l5-38l2-37l-2-33l-6-27l-26-80l-69-201l-67-176l-53-128l-54-117l-54-105l-54-93l-51-79l-52-67l-52-57l-49-44l-50-34l-51-25l-52-14l-49-4l-33 4l-30 6l-30 11l-32 15l-30 19l-33 23l-32 28l-32 32l-56 66l-54 75l-147 245l-100 153l-84 115l-83 104l-90 100l-93 90l-68 60l-122 99l-91 80z"/>
<path fill="#00f3ff" d="M2737 2602l-57 9l-67 2l-73-6l-83-13l-85-19l-78-23l-70-27l-67-33l-64-37l-64-44l-64-51l-60-54l-64-63l-63-69l-64-76l-62-80l46 66l47 77l45 82l48 94l45 99l47 113l46 116l47 130l92 282l93 316l93 351l91 383l116-146l108-126l100-106l95-89l95-75l93-62l94-49l96-38l104-29l109-19l126-11l135-2l153 7l176 15l193 24l226 34l84-161l86-176l82-179l86-196l29-68l11-32l9-36l5-38l2-37l-2-33l-6-27l-26-80l-69-201l-67-176l-53-128l-54-117l-54-105l-54-93l-51-79l-52-67l-52-57l-49-44l-50-34l-51-25l-52-14l-49-4l-33 4l-30 6l-30 11l-32 15l-30 19l-33 23l-32 28l-32 32l-56 66l-54 75l-147 245l-100 153l-82 113l-82 103l-88 98l-91 89l-65 57l-123 101l-95 85z"/>
<path fill="#00fbff" d="M2741 2602l-58 9l-66 2l-73-5l-79-12l-89-20l-78-22l-71-27l-68-33l-63-37l-64-44l-64-50l-63-57l-64-63l-63-69l-64-76l-62-80l46 66l45 73l47 86l46 90l47 103l45 108l48 121l45 124l92 281l93 315l92 351l92 380l117-148l108-127l100-106l98-92l94-75l90-59l95-49l96-38l100-28l114-19l126-11l136-1l153 7l176 16l200 25l223 34l86-165l86-177l86-188l83-189l32-83l9-36l5-38l2-37l-2-33l-6-27l-26-80l-69-201l-67-176l-53-128l-54-117l-54-105l-54-93l-51-79l-52-67l-52-57l-49-44l-50-34l-51-25l-52-14l-49-4l-33 4l-30 6l-30 11l-32 15l-30 19l-33 23l-32 28l-32 32l-56 66l-54 75l-147 245l-100 153l-82 113l-79 99l-88 99l-88 86l-60 54l-126 105l-96 87z"/>
<path fill="#00fffb" d="M2745 2601l-58 9l-66 3l-72-5l-83-12l-90-20l-78-22l-71-27l-68-33l-63-37l-64-44l-64-50l-63-57l-64-63l-63-69l-64-76l-62-80l46 66l45 73l47 86l46 90l47 103l45 108l48 121l45 124l90 274l93 315l92 349l91 379l120-152l108-127l99-106l95-89l94-76l90-60l94-49l49-21l50-18l101-28l114-19l122-10l136-1l153 7l177 17l200 25l233 36l83-163l87-177l82-180l86-198l29-74l9-36l5-38l2-37l-2-33l-6-27l-26-80l-69-201l-67-176l-53-128l-54-117l-54-105l-54-93l-51-79l-52-67l-52-57l-49-44l-50-34l-51-25l-52-14l-49-4l-33 4l-30 6l-32 12l-32 16l-31 18l-32 24l-32 28l-32 33l-54 63l-54 75l-147 245l-100 153l-82 113l-79 99l-85 96l-87 86l-180 155l-99 91z"/>
<path fill="#00fff3" d="M2749 2600l-58 10l-66 3l-72-4l-79-12l-90-19l-80-22l-71-27l-70-33l-64-37l-64-44l-64-50l-63-56l-64-63l-63-69l-64-75l-65-84l46 66l45 73l47 86l46 90l45 98l45 107l45 115l48 130l90 273l93 314l92 349l91 379l119-152l108-128l102-109l95-89l93-76l90-60l94-50l96-37l101-28l114-19l122-9l141-1l154 8l177 17l201 26l234 36l83-162l86-178l86-188l83-190l25-66l9-36l5-38l2-37l-2-33l-6-27l-26-80l-69-201l-67-176l-53-128l-54-117l-54-105l-54-93l-51-79l-52-67l-52-57l-49-44l-50-34l-51-25l-52-14l-49-4l-33 4l-30 6l-32 12l-32 16l-31 18l-32 24l-32 28l-32 33l-54 63l-54 75l-147 245l-97 148l-82 114l-79 99l-85 96l-85 85l-178 155l-101 94z"/>
<path fill="#00ffeb" d="M2752 2599l-58 11l-65 3l-72-4l-83-12l-90-19l-80-22l-71-27l-70-33l-64-37l-64-44l-64-50l-63-56l-64-63l-63-69l-64-75l-65-84l46 66l45 73l47 86l46 90l45 98l45 107l45 115l48 130l90 273l93 314l90 340l92 379l118-152l110-131l101-109l95-90l94-75l89-60l95-50l96-37l105-28l110-18l123-9l136-1l154 9l183 17l202 27l235 37l86-168l83-171l86-189l82-190l22-58l9-36l5-38l2-37l-2-33l-6-27l-26-80l-69-201l-67-176l-53-128l-54-117l-54-105l-54-93l-51-79l-52-67l-52-57l-49-44l-50-34l-51-25l-52-14l-49-4l-33 4l-30 6l-32 12l-32 16l-31 18l-32 24l-32 28l-32 33l-54 63l-54 75l-147 245l-97 148l-79 110l-79 99l-85 97l-84 84l-176 154l-103 97z"/>
<path fill="#00ffe3" d="M2755 2598l-57 11l-65 4l-71-4l-82-11l-88-18l-84-23l-72-26l-70-34l-64-36l-64-44l-64-49l-66-59l-64-63l-63-69l-64-75l-65-84l46 66l45 73l45 81l46 90l45 98l45 107l47 120l45 124l93 279l90 306l91 340l92 379l118-153l109-131l101-109l95-90l93-77l93-61l94-50l96-37l106-28l110-17l123-9l137 0l155 9l178 18l207 27l237 38l86-167l82-172l83-181l86-199l18-49l9-36l5-38l2-37l-2-33l-6-27l-26-80l-69-201l-67-176l-53-128l-54-117l-54-105l-54-93l-51-79l-52-67l-52-57l-49-44l-50-34l-51-25l-52-14l-49-4l-33 4l-30 6l-32 12l-32 16l-31 18l-32 24l-32 28l-32 33l-54 63l-54 75l-147 245l-97 148l-79 110l-78 99l-83 94l-84 84l-172 153l-103 97l-27 23z"/>
<path fill="#00ffdb" d="M2757 2597l-56 12l-64 4l-71-3l-83-11l-88-18l-84-23l-75-27l-69-33l-65-37l-64-44l-64-49l-63-56l-67-66l-63-69l-64-75l-65-84l46 66l45 73l45 81l46 90l45 98l45 107l47 120l45 124l91 272l90 306l91 338l92 379l118-152l111-134l101-110l94-90l91-75l92-62l47-27l47-23l96-37l49-15l56-13l111-17l123-9l137 1l161 9l178 18l208 29l238 38l85-167l83-172l86-189l83-191l14-41l9-36l5-38l2-37l-2-33l-6-27l-26-80l-69-201l-67-176l-53-128l-54-117l-54-105l-54-93l-51-79l-52-67l-52-57l-49-44l-50-34l-51-25l-52-14l-49-4l-33 4l-30 6l-32 12l-32 16l-31 18l-32 24l-32 28l-32 33l-54 63l-54 75l-147 245l-97 148l-77 107l-78 99l-82 93l-83 85l-170 151l-103 100l-29 23z"/>
<path fill="#00ffd3" d="M2760 2597l-59 12l-64 4l-71-3l-79-10l-92-19l-84-23l-75-27l-69-33l-65-37l-64-44l-64-49l-63-56l-67-66l-63-69l-64-75l-65-84l46 66l45 73l45 81l46 90l45 98l45 107l90 238l91 271l90 305l90 338l93 379l120-156l109-131l102-113l95-91l90-74l92-62l47-27l47-23l96-37l50-15l56-13l111-17l124-8l137 1l161 10l180 19l208 29l240 39l84-166l82-172l87-190l82-192l11-32l9-36l5-38l2-37l-2-33l-6-27l-26-80l-69-201l-67-176l-53-128l-54-117l-54-105l-54-93l-51-79l-52-67l-52-57l-49-44l-50-34l-51-25l-52-14l-49-4l-33 4l-30 6l-32 12l-32 16l-33 19l-32 25l-32 28l-33 33l-53 64l-54 76l-142 236l-97 149l-79 110l-79 100l-82 93l-81 83l-165 149l-104 100l-30 25z"/>
<path fill="#00ffcb" d="M2762 2596l-57 12l-64 5l-71-3l-78-10l-93-18l-84-23l-75-27l-71-33l-64-37l-64-42l-66-52l-64-56l-67-66l-63-69l-64-75l-65-84l46 66l45 73l45 81l46 90l45 98l45 107l90 238l91 271l90 305l90 338l91 371l119-157l111-134l103-113l94-91l90-74l92-63l91-48l49-20l47-17l50-15l55-13l111-17l125-8l137 2l162 10l179 19l209 30l247 40l83-165l83-173l83-182l82-192l11-32l9-36l5-38l2-37l-2-33l-6-27l-26-80l-69-201l-67-176l-53-128l-54-117l-54-105l-54-93l-51-79l-52-67l-52-57l-49-44l-50-34l-51-25l-52-14l-49-4l-33 4l-30 6l-32 12l-32 16l-33 19l-32 25l-32 28l-33 33l-53 64l-54 76l-142 236l-97 149l-79 110l-76 96l-82 94l-83 85l-159 145l-107 104l-30 24z"/>
<path fill="#00ffc3" d="M2765 2595l-57 13l-63 5l-70-2l-83-11l-93-18l-84-23l-75-27l-71-33l-64-37l-64-42l-66-52l-64-56l-67-66l-63-69l-64-75l-65-84l44 62l45 73l45 81l45 90l46 98l45 106l90 237l91 270l90 304l90 337l91 371l124-162l108-132l102-113l94-91l90-75l92-62l91-48l49-21l47-16l102-27l111-17l124-7l143 1l157 11l186 20l209 30l248 41l79-157l83-173l83-182l82-192l11-32l9-36l5-38l2-37l-2-33l-6-27l-26-80l-69-201l-67-176l-53-128l-54-117l-54-105l-54-93l-51-79l-52-67l-52-57l-49-44l-50-34l-51-25l-52-14l-49-4l-33 4l-30 6l-32 12l-32 16l-33 19l-32 25l-32 28l-33 33l-53 64l-54 76l-142 236l-97 149l-79 110l-76 96l-82 94l-85 87l-151 139l-106 104l-33 27z"/>
<path fill="#00ffbb" d="M2767 2594l-55 13l-63 6l-70-2l-83-10l-92-18l-86-23l-75-27l-71-33l-66-37l-65-43l-66-52l-64-56l-67-66l-63-69l-64-75l-65-84l44 62l45 73l45 81l45 90l46 98l45 106l90 237l91 270l90 304l90 337l89 363l123-163l108-132l102-113l96-94l93-77l89-61l91-48l49-20l47-17l102-26l112-16l125-7l138 2l157 11l186 20l215 31l250 42l79-157l83-173l79-174l82-192l11-32l9-36l5-38l2-37l-2-33l-6-27l-26-80l-69-201l-67-176l-53-128l-54-117l-54-105l-54-93l-51-79l-52-67l-52-57l-49-44l-50-34l-51-25l-52-14l-49-4l-33 4l-30 6l-32 12l-32 16l-33 19l-32 25l-32 28l-33 33l-53 64l-54 76l-142 236l-97 149l-79 110l-76 96l-82 94l-87 89l-142 132l-109 107l-35 29z"/>
<path fill="#00ffb3" d="M2769 2594l-57 13l-63 6l-70-2l-83-10l-92-18l-86-23l-75-27l-71-33l-66-37l-65-43l-66-52l-64-56l-67-66l-63-69l-64-75l-65-84l44 62l45 73l45 81l45 90l46 98l45 106l90 237l88 264l91 303l90 336l89 362l123-163l110-135l102-113l96-95l89-75l89-60l91-49l48-20l48-17l102-26l111-17l125-6l139 2l163 12l186 21l216 32l251 42l82-163l79-166l79-175l79-184l11-32l9-36l5-38l2-37l-2-33l-6-27l-26-80l-69-201l-67-176l-53-128l-54-117l-54-105l-54-93l-51-79l-52-67l-52-57l-49-44l-50-34l-51-25l-52-14l-49-4l-33 4l-30 6l-32 12l-32 16l-33 19l-32 25l-32 28l-33 33l-53 64l-54 76l-142 236l-96 147l-77 108l-76 96l-82 95l-89 91l-137 128l-108 108l-38 31z"/>
<path fill="#00ffab" d="M2770 2593l-55 14l-62 6l-70-2l-82-9l-94-18l-85-23l-76-27l-74-34l-66-37l-65-43l-66-52l-64-56l-67-66l-63-69l-64-75l-65-84l44 62l45 73l45 81l45 90l46 98l43 100l90 237l88 263l91 302l90 336l89 362l125-166l112-139l99-111l96-94l92-77l89-61l44-25l47-23l93-35l50-15l52-11l112-16l126-7l139 3l164 13l187 22l216 32l252 43l78-155l79-166l79-175l79-184l11-32l9-36l5-38l2-37l-2-33l-6-27l-26-80l-69-201l-67-176l-53-128l-54-117l-54-105l-54-93l-51-79l-50-65l-49-55l-52-47l-52-35l-49-25l-52-14l-49-4l-33 3l-32 7l-32 12l-32 16l-33 19l-32 25l-32 28l-33 33l-53 64l-54 76l-142 236l-96 147l-77 108l-76 96l-64 75l-69 74l-173 166l-88 89l-47 41z"/>
<path fill="#00ffa3" d="M2772 2593l-54 13l-65 7l-70-2l-78-9l-94-17l-86-23l-76-26l-74-34l-64-36l-67-44l-63-49l-67-58l-64-62l-66-72l-67-79l-65-84l44 62l45 73l45 81l45 90l46 98l43 100l90 237l88 263l91 302l88 327l89 362l125-166l109-136l104-117l92-92l92-78l89-61l44-25l46-23l93-36l50-14l52-12l112-16l126-6l140 4l164 12l187 23l217 33l259 45l78-156l79-166l79-175l75-176l11-32l9-36l5-38l2-37l-2-33l-6-27l-26-80l-69-201l-67-176l-53-128l-54-117l-54-105l-54-93l-51-79l-50-65l-49-55l-52-47l-52-35l-49-25l-52-14l-49-4l-33 3l-32 7l-32 12l-32 16l-33 19l-32 25l-32 28l-33 33l-53 64l-54 76l-142 236l-96 147l-77 108l-74 95l-62 72l-69 75l-170 163l-90 92l-48 42z"/>
<path fill="#00ff9b" d="M2773 2592l-55 14l-61 6l-74-1l-78-9l-94-17l-86-23l-76-26l-74-34l-64-36l-67-44l-63-49l-67-58l-64-62l-66-72l-67-79l-65-84l44 62l45 73l43 77l45 89l43 93l45 105l91 236l88 262l90 301l89 327l89 362l124-167l112-139l103-117l92-92l92-78l88-61l45-26l46-23l46-19l47-16l99-25l112-16l121-6l145 4l164 13l188 23l223 34l260 46l77-155l76-159l79-175l75-176l11-32l9-36l5-38l2-37l-2-33l-6-27l-26-80l-69-201l-67-176l-53-128l-54-117l-54-105l-54-93l-51-79l-50-65l-49-55l-52-47l-52-35l-49-25l-52-14l-49-4l-33 3l-32 7l-32 12l-32 16l-33 19l-32 25l-32 28l-33 33l-53 64l-54 76l-142 236l-96 147l-77 108l-74 95l-63 73l-68 73l-164 161l-91 93l-51 44z"/>
<path fill="#00ff93" d="M2775 2592l-53 14l-65 6l-74-1l-78-9l-94-17l-86-23l-76-26l-74-34l-64-36l-67-44l-63-49l-67-58l-64-62l-66-72l-67-79l-65-84l44 62l45 73l43 77l45 89l43 93l45 105l91 236l88 262l88 294l89 326l89 361l124-167l111-139l100-115l97-98l89-76l88-61l44-26l46-23l46-19l47-17l99-25l112-15l121-6l146 4l164 14l194 24l223 34l262 47l77-154l75-160l76-167l75-176l11-32l9-36l5-38l2-37l-2-33l-6-27l-26-80l-69-201l-67-176l-53-128l-54-117l-54-105l-54-93l-51-79l-50-65l-49-55l-52-47l-52-35l-49-25l-52-14l-49-4l-33 3l-32 7l-32 12l-32 16l-33 19l-32 25l-32 28l-33 33l-53 64l-54 76l-142 236l-94 144l-76 107l-76 97l-61 72l-67 73l-161 159l-91 94l-54 46z"/>
<path fill="#00ff8b" d="M2776 2591l-54 15l-65 6l-69 0l-79-9l-93-17l-91-24l-76-26l-74-34l-64-36l-67-44l-63-49l-67-58l-64-62l-66-72l-67-79l-65-84l44 62l45 73l43 77l45 89l43 93l45 105l89 230l88 261l88 293l88 325l90 362l126-170l110-140l101-115l96-99l89-76l88-61l44-26l46-23l45-19l48-17l99-24l112-15l127-5l141 4l165 15l189 24l224 35l269 48l73-146l75-160l76-167l75-176l11-32l9-36l5-38l2-37l-2-33l-6-27l-26-80l-69-201l-67-176l-53-128l-54-117l-54-105l-54-93l-51-79l-50-65l-49-55l-52-47l-52-35l-49-25l-52-14l-49-4l-33 3l-32 7l-32 12l-32 16l-33 19l-32 25l-32 28l-33 33l-53 64l-54 76l-142 236l-94 144l-76 107l-76 97l-63 74l-64 70l-249 252l-55 47z"/>
<path fill="#00ff83" d="M2776 2591l-51 14l-64 7l-73 0l-79-9l-93-17l-91-24l-76-26l-74-34l-64-36l-67-44l-63-49l-67-58l-64-62l-66-72l-67-79l-65-84l44 62l45 73l43 77l45 89l43 93l45 105l89 230l88 261l88 293l88 325l88 353l125-170l113-143l100-116l96-98l91-79l43-32l45-29l45-26l43-21l45-19l48-16l46-13l53-12l113-14l123-5l141 5l166 15l195 26l224 35l270 49l73-146l75-160l75-168l72-167l11-32l9-36l5-38l2-37l-2-33l-6-27l-26-80l-69-201l-67-176l-53-128l-54-117l-54-105l-54-93l-51-79l-50-65l-49-55l-52-47l-52-35l-49-25l-52-14l-49-4l-33 3l-32 7l-32 12l-32 16l-33 19l-32 25l-34 30l-33 33l-53 65l-52 73l-142 236l-94 144l-76 107l-76 97l-62 74l-64 70l-246 251l-56 48l-27 17z"/>
<path fill="#00ff7c" d="M2777 2591l-52 14l-64 7l-73 0l-79-9l-93-17l-91-24l-76-26l-74-34l-64-36l-67-44l-63-49l-67-58l-64-62l-66-72l-67-79l-65-84l44 62l43 70l45 80l43 85l43 92l45 105l89 229l88 260l88 293l88 324l88 353l125-171l112-143l102-119l94-96l90-80l43-32l45-29l44-26l43-21l45-20l48-16l50-14l49-10l108-15l123-4l147 5l166 16l195 26l231 37l271 49l72-145l72-153l75-168l72-167l11-32l9-36l5-38l2-37l-2-33l-6-27l-26-80l-69-201l-67-176l-53-128l-54-117l-54-105l-54-93l-51-79l-50-65l-49-55l-52-47l-52-35l-49-25l-52-14l-49-4l-33 3l-32 7l-32 12l-32 16l-33 19l-32 25l-34 30l-33 33l-53 65l-52 73l-142 236l-94 144l-76 107l-76 97l-62 73l-61 69l-242 248l-31 29l-28 22l-30 19z"/>
<path fill="#00ff74" d="M2777 2591l-52 14l-64 7l-73 0l-79-9l-93-17l-87-23l-77-26l-75-34l-66-37l-66-43l-64-50l-66-58l-65-62l-66-72l-67-79l-65-84l44 62l43 70l45 80l43 85l43 92l45 105l89 229l86 254l88 291l88 324l88 352l131-179l112-144l100-116l93-97l88-77l42-32l45-30l44-25l43-22l45-19l48-16l51-14l48-10l110-14l128-3l142 6l167 16l196 26l232 38l272 50l72-145l72-153l143-327l11-32l9-36l5-38l2-37l-2-33l-6-27l-26-80l-69-201l-67-176l-53-128l-54-117l-54-105l-54-93l-51-79l-50-65l-49-55l-52-47l-52-35l-49-25l-52-14l-49-4l-33 3l-32 7l-32 12l-32 16l-33 19l-32 25l-34 30l-33 33l-53 65l-52 73l-142 236l-94 144l-76 107l-77 99l-121 139l-238 248l-31 28l-29 22l-30 19z"/>
<path fill="#00ff6c" d="M4494 3292l-279-52l-231-38l-197-27l-167-16l-148-7l-124 3l-109 14l-49 10l-50 14l-44 15l-45 19l-43 22l-44 25l-42 28l-46 34l-87 78l-93 97l-104 121l-114 147l-126 175l-88-353l-88-322l-86-284l-89-260l-88-228l-43-100l-43-92l-43-85l-45-80l-43-70l-44-62l65 84l64 75l63 69l67 66l63 56l64 49l64 44l65 37l69 33l75 27l84 23l92 19l79 10l71 3l64-4l58-12l34-14l39-21l34-24l33-29l232-242l105-121l99-124l94-133l76-117l115-194l51-79l56-74l58-63l46-39l43-30l43-22l43-15l43-7l43 0l43 8l43 16l41 21l43 31l41 35l43 45l41 50l43 60l43 67l43 75l43 82l43 90l86 203l47 124l48 133l60 183l6 27l2 33l-2 37l-5 38l-9 36l-11 32l-75 176l-72 159l-83 175z"/>
<path fill="#00ff64" d="M4499 3284l-281-52l-238-40l-197-28l-168-17l-143-7l-124 3l-110 13l-49 10l-51 14l-44 15l-45 19l-43 21l-44 26l-45 30l-42 32l-87 78l-93 97l-103 122l-114 148l-128 177l-88-352l-86-314l-86-284l-89-260l-88-228l-43-100l-43-92l-43-85l-45-80l-43-70l-44-62l65 84l64 75l63 69l67 66l63 56l64 49l64 44l65 37l69 33l75 27l84 23l92 19l79 10l71 3l64-4l58-12l35-14l39-21l35-24l35-30l224-236l103-118l102-128l97-137l76-117l115-194l51-79l56-74l58-63l46-39l43-30l43-22l43-15l43-7l43 0l43 8l43 16l41 21l43 31l41 35l43 45l41 50l43 60l43 67l43 75l43 82l43 90l86 203l47 124l48 133l60 183l6 27l2 33l-2 37l-5 38l-9 36l-11 32l-75 176l-76 167l-86 182z"/>
<path fill="#00ff5c" d="M4503 3277l-288-55l-239-40l-197-28l-174-18l-143-7l-124 2l-110 14l-49 10l-46 13l-44 15l-46 19l-42 22l-44 25l-44 31l-43 32l-86 78l-90 95l-103 123l-115 151l-128 178l-88-352l-86-314l-89-290l-86-252l-88-227l-43-100l-43-91l-43-85l-43-76l-43-70l-44-62l65 84l64 75l63 69l67 66l64 56l66 52l64 42l64 37l71 33l74 27l81 22l92 19l83 10l71 3l64-5l57-12l37-15l39-20l35-25l35-30l218-232l100-115l105-132l95-134l79-121l115-194l51-79l56-74l58-63l43-38l44-30l43-22l43-15l43-8l43 0l43 8l43 15l43 22l43 31l41 35l43 45l41 50l43 60l43 67l43 75l43 82l43 90l86 203l47 124l48 133l60 183l6 27l2 33l-2 37l-5 38l-9 36l-11 32l-75 176l-76 167l-93 196z"/>
<path fill="#00ff54" d="M4507 3269l-289-55l-239-41l-205-30l-168-18l-144-8l-125 2l-59 5l-51 8l-49 9l-47 13l-44 15l-46 19l-42 22l-44 26l-84 61l-86 78l-92 98l-103 123l-115 151l-129 181l-89-351l-86-313l-86-283l-86-252l-88-227l-43-100l-43-91l-43-85l-43-76l-43-70l-44-62l65 84l64 75l63 69l67 66l64 56l66 52l64 42l64 37l71 33l74 27l81 22l92 19l83 10l71 3l64-5l57-12l38-15l39-20l38-26l35-30l40-41l171-184l95-110l111-140l94-132l79-122l120-201l52-79l55-73l56-61l43-38l44-30l43-22l43-15l43-8l43 0l43 8l43 15l43 22l43 31l41 35l43 45l41 50l43 60l43 67l43 75l43 82l43 90l86 203l47 124l48 133l60 183l6 27l2 33l-2 37l-5 38l-9 36l-11 32l-75 176l-79 175l-101 210z"/>
<path fill="#00ff4c" d="M4511 3261l-296-57l-246-43l-204-30l-169-18l-140-8l-125 2l-106 11l-49 10l-51 14l-44 15l-45 19l-43 22l-40 24l-41 29l-42 32l-87 79l-91 98l-102 124l-113 148l-133 188l-87-343l-86-313l-88-289l-86-252l-86-221l-43-100l-43-91l-43-85l-43-76l-43-70l-44-62l65 84l64 75l63 69l67 66l64 56l66 52l64 42l64 37l71 33l74 27l81 22l92 19l83 10l71 3l64-5l57-12l42-16l40-21l38-26l35-30l42-43l160-175l93-107l117-148l94-132l79-122l120-201l52-79l53-71l56-61l43-38l43-30l43-23l43-16l43-8l44 0l43 7l43 15l43 22l41 28l43 37l43 45l43 52l41 57l43 67l43 74l43 82l43 90l43 97l45 110l47 124l48 133l60 183l6 27l2 33l-2 37l-5 38l-9 36l-11 32l-75 176l-79 175l-108 225z"/>
<path fill="#00ff44" d="M4515 3253l-297-58l-247-43l-205-31l-170-19l-140-9l-126 1l-59 5l-52 7l-49 9l-47 13l-44 15l-45 19l-43 22l-40 24l-81 60l-86 78l-91 99l-102 124l-114 151l-135 191l-87-342l-86-313l-86-281l-86-252l-86-221l-43-100l-43-91l-43-85l-43-76l-43-70l-44-62l65 84l64 75l63 69l67 66l64 56l66 52l64 42l64 37l71 33l74 27l81 22l92 19l83 10l71 3l64-5l57-12l44-16l39-20l39-26l35-30l59-61l159-176l69-81l120-152l97-136l79-122l120-201l52-79l53-71l56-61l43-38l43-30l43-23l43-16l43-8l44 0l43 7l43 15l43 22l41 28l43 37l43 45l43 52l41 57l43 67l43 74l43 82l43 90l43 97l45 110l47 124l48 133l60 183l6 27l2 33l-2 37l-5 38l-9 36l-11 32l-79 184l-79 175z"/>
<path fill="#00ff3c" d="M4519 3245l-305-59l-247-44l-205-32l-171-20l-146-9l-121 0l-107 11l-49 10l-47 12l-44 15l-46 19l-42 22l-40 25l-42 28l-41 33l-86 80l-91 99l-101 124l-114 152l-134 192l-87-343l-86-311l-86-281l-86-251l-86-220l-43-99l-43-92l-43-84l-43-76l-43-69l-42-59l65 84l64 75l63 69l67 66l64 56l66 52l64 42l64 37l71 33l75 27l84 23l93 18l78 10l71 3l66-5l56-12l44-16l42-21l37-25l38-31l59-61l218-248l117-149l104-145l80-124l120-201l52-79l53-71l56-61l43-38l43-30l43-23l43-16l43-8l44 0l43 7l43 15l43 22l41 28l43 37l43 45l43 52l41 57l43 67l43 74l43 82l43 90l43 97l45 110l47 124l48 133l60 183l6 27l2 33l-2 37l-5 38l-9 36l-11 32l-79 184l-79 175z"/>
<path fill="#00ff34" d="M4523 3237l-312-61l-253-46l-206-32l-171-20l-146-10l-122 1l-106 11l-46 9l-46 12l-44 15l-42 18l-43 22l-40 25l-41 28l-41 34l-83 77l-93 102l-101 125l-113 152l-137 195l-84-334l-86-311l-86-281l-86-251l-86-220l-43-99l-43-92l-43-84l-43-76l-43-69l-42-59l65 84l64 75l63 69l67 66l64 56l66 52l65 43l66 37l71 33l75 27l86 23l92 18l83 10l70 2l63-6l56-13l44-16l39-20l39-25l39-32l61-63l205-236l117-149l110-153l80-124l120-201l52-79l53-71l56-61l43-38l43-30l43-23l43-16l41-8l43 0l43 7l43 14l41 21l43 29l43 36l43 45l44 51l43 60l43 67l43 74l43 82l43 90l43 97l45 110l47 124l48 133l60 183l6 27l2 33l-2 37l-5 38l-9 36l-11 32l-82 192l-79 174z"/>
<path fill="#00ff2c" d="M4527 3229l-337-66l-236-43l-201-32l-172-21l-147-11l-122 0l-55 4l-52 6l-46 9l-47 12l-44 15l-42 18l-42 22l-40 24l-80 60l-85 80l-90 100l-103 128l-115 156l-136 196l-84-334l-86-310l-86-281l-84-244l-86-220l-43-99l-43-92l-43-84l-43-76l-43-69l-42-59l65 84l64 75l63 69l67 66l64 56l66 52l65 43l66 37l74 34l76 27l85 23l94 18l78 9l70 2l63-6l59-13l45-17l40-20l39-25l38-32l62-64l194-226l117-149l116-161l80-124l120-201l52-79l53-71l56-61l43-38l43-30l43-23l43-16l41-8l43 0l43 7l43 14l41 21l43 29l43 36l43 45l44 51l43 60l43 67l43 74l43 82l43 90l43 97l45 110l47 124l48 133l60 183l6 27l2 33l-2 37l-5 38l-9 36l-11 32l-125 288z"/>
<path fill="#00ff24" d="M4530 3222l-319-64l-255-47l-213-35l-173-21l-147-12l-122 0l-103 10l-45 9l-47 12l-44 15l-42 18l-39 21l-40 24l-41 29l-38 32l-85 80l-89 101l-102 128l-115 157l-138 198l-84-333l-86-310l-86-279l-84-244l-84-214l-43-99l-43-92l-43-84l-43-76l-43-69l-42-59l65 84l67 79l66 72l64 62l67 58l63 49l67 44l64 36l74 34l76 26l86 23l94 17l78 9l70 2l62-6l59-14l44-16l43-21l39-26l38-31l62-64l182-214l116-149l124-172l80-124l118-198l51-79l54-71l56-62l43-38l43-31l43-23l43-16l43-9l43 0l43 7l43 14l41 21l43 29l43 36l43 45l44 51l43 60l43 67l43 74l43 82l43 90l43 97l45 110l47 124l48 133l60 183l6 27l2 33l-2 37l-5 38l-9 36l-11 32l-125 288z"/>
<path fill="#00ff1c" d="M4534 3214l-321-65l-261-49l-214-35l-173-22l-143-12l-123-1l-103 9l-46 8l-47 12l-41 14l-42 18l-39 20l-40 25l-38 27l-41 33l-84 81l-90 101l-101 129l-116 160l-140 202l-84-333l-84-302l-86-279l-84-244l-84-214l-43-99l-43-92l-43-84l-43-76l-43-69l-42-59l65 84l67 79l66 72l64 62l67 58l63 49l67 44l64 36l74 34l76 26l86 23l94 17l78 9l70 2l66-7l61-14l43-16l43-21l39-26l38-31l64-67l169-201l119-153l127-177l80-124l118-198l51-79l54-71l56-62l43-38l43-31l43-23l43-16l43-9l41 0l43 6l43 14l43 22l41 27l43 36l41 42l41 48l43 58l41 63l43 72l41 77l43 87l43 96l43 102l84 222l84 251l7 44l-1 53l-5 38l-9 36l-11 32l-125 288z"/>
<path fill="#00ff14" d="M4537 3206l-327-67l-262-49l-215-36l-173-23l-144-13l-119-2l-104 9l-46 8l-47 12l-41 13l-42 18l-39 20l-40 25l-38 27l-41 34l-81 79l-89 101l-103 132l-118 163l-139 203l-84-332l-84-301l-84-272l-86-250l-86-219l-84-184l-41-80l-43-76l-43-69l-42-59l65 84l67 79l66 72l65 62l66 58l64 50l66 43l67 38l74 33l77 26l91 24l94 17l78 8l69 0l64-7l60-14l43-15l43-22l39-26l36-29l66-69l157-189l120-155l134-188l79-122l118-198l51-79l54-71l54-59l43-39l43-32l43-23l43-17l43-8l43-1l43 6l43 14l43 22l41 27l43 36l41 42l41 48l43 58l41 63l43 72l41 77l43 87l43 96l43 102l84 222l84 251l7 44l-1 53l-5 38l-9 36l-11 32l-125 288z"/>
<path fill="#00ff0c" d="M4541 3198l-334-69l-269-51l-215-36l-174-24l-144-13l-119-2l-52 3l-52 6l-46 8l-43 11l-41 14l-42 18l-38 20l-37 23l-38 28l-40 34l-81 79l-91 105l-100 130l-118 163l-140 207l-85-332l-84-300l-83-272l-84-243l-86-219l-84-184l-41-80l-43-76l-43-69l-42-59l65 84l67 79l66 72l67 65l67 57l66 51l66 43l65 36l74 33l77 26l92 24l94 16l78 8l67 0l68-7l59-14l44-16l43-22l39-25l35-30l64-66l140-171l127-164l140-197l80-124l118-198l51-79l54-71l54-59l43-39l43-32l43-23l43-17l41-8l43-2l43 7l43 13l41 20l43 28l41 34l43 43l43 51l43 58l41 63l43 72l41 77l43 87l43 96l43 102l84 222l84 251l7 44l-1 53l-5 38l-9 36l-11 32l-125 288l-76 162z"/>
<path fill="#00ff04" d="M4546 3190l-342-70l-270-52l-216-38l-175-25l-145-13l-119-3l-101 8l-46 8l-43 11l-41 13l-41 18l-39 21l-36 23l-38 28l-38 32l-80 79l-90 106l-100 130l-119 167l-142 210l-85-331l-84-300l-84-270l-84-242l-83-214l-84-184l-41-80l-43-76l-43-69l-42-59l65 84l67 79l66 72l67 65l67 57l66 51l66 43l65 36l74 33l77 26l88 23l94 17l78 8l70 0l66-6l64-14l37-13l37-17l35-21l31-23l59-55l78-93l149-187l123-168l79-113l60-92l61-98l79-134l38-60l59-80l60-67l43-40l43-31l43-24l43-17l43-9l43-2l43 7l43 13l41 20l43 28l41 34l43 43l43 51l43 58l41 63l43 72l41 77l43 87l43 96l43 102l84 222l84 251l7 44l-1 53l-5 38l-9 36l-11 32l-129 296l-79 169z"/>
<path fill="#00ff00" d="M4550 3183l-350-73l-276-54l-217-38l-175-26l-145-14l-121-3l-100 8l-45 8l-40 10l-40 14l-38 17l-39 20l-36 24l-37 28l-38 32l-79 80l-88 103l-101 135l-119 167l-143 213l-83-322l-84-300l-84-270l-84-242l-83-214l-84-184l-41-80l-43-76l-43-69l-42-59l65 84l67 79l66 72l67 65l67 57l66 51l66 43l65 36l74 33l77 26l92 24l94 16l78 8l73 0l69-7l60-13l37-13l34-16l31-18l32-23l58-52l67-79l154-196l121-166l145-214l64-103l79-134l38-60l59-80l60-67l43-40l43-31l43-24l43-17l43-9l43-2l43 7l43 13l41 20l43 28l41 34l43 43l43 51l43 58l41 63l43 72l41 77l43 87l43 96l43 102l84 222l84 251l7 44l-1 53l-5 38l-9 36l-11 32l-129 296l-83 177z"/>
<path fill="#04ff00" d="M4615 3045l-782-190l-235-61l-169-50l-123-43l-45-19l-38-20l-30-19l-22-20l-18-21l-12-23l-6-22l-2-24l2-28l6-30l25-77l43-99l52-103l73-132l279-475l39-62l39-55l38-49l41-46l41-38l39-31l41-25l39-17l45-13l45-5l45 4l48 13l45 21l47 30l45 38l48 49l45 55l47 66l45 72l48 85l45 89l47 102l45 106l48 120l64 179l65 195l7 44l-1 53l-5 38l-9 36l-11 32l-82 192zM2285 3682l-83-312l-80-272l-80-247l-77-214l-80-196l-77-165l-78-141l-38-61l-40-56l102 128l102 113l52 50l51 46l52 42l48 36l88 54l89 44l65 24l204 65l61 23l49 22l39 22l30 22l23 25l14 26l6 22l2 24l-2 28l-5 30l-25 73l-43 96l-55 107l-78 140z"/>
<path fill="#0cff00" d="M4619 3036l-446-107l-313-79l-238-64l-167-50l-120-44l-45-20l-41-21l-32-22l-24-21l-18-24l-12-23l-6-23l-3-26l2-29l5-29l23-77l42-98l52-106l72-131l257-442l41-66l38-56l39-50l41-46l41-40l41-32l41-26l38-18l46-13l45-5l45 4l47 12l48 22l45 29l45 37l45 46l46 54l45 63l45 71l47 83l45 88l46 96l45 104l47 119l69 188l69 208l7 44l-1 53l-5 38l-9 36l-11 32l-79 184zM2282 3672l-83-310l-77-264l-80-247l-77-214l-80-196l-77-165l-78-141l-38-61l-40-56l98 124l100 111l100 94l97 77l88 57l89 44l64 25l195 65l59 24l47 22l42 24l31 25l22 26l14 28l7 22l2 27l-1 28l-6 33l-23 73l-41 95l-56 110l-74 136z"/>
<path fill="#14ff00" d="M4623 3027l-420-102l-316-80l-232-63l-175-54l-126-47l-44-21l-39-22l-31-22l-24-21l-19-24l-13-26l-6-19l-3-23l-1-25l3-28l15-61l27-78l40-89l51-102l72-132l94-164l155-263l43-65l45-60l51-59l52-47l52-37l51-26l46-13l43-6l45 3l45 11l45 19l45 28l46 36l45 44l45 52l45 61l45 70l45 77l44 82l45 94l45 102l45 110l67 178l67 197l19 60l6 27l2 33l-2 37l-5 38l-9 36l-11 32l-133 304zM2279 3662l-82-307l-79-271l-78-239l-77-214l-78-190l-77-165l-78-141l-38-61l-40-56l95 120l97 108l97 93l97 78l88 58l86 45l66 27l183 63l58 24l49 24l41 25l30 25l24 28l14 28l7 25l3 27l-1 28l-5 33l-22 75l-39 95l-52 106l-73 135l-93 164z"/>
<path fill="#1cff00" d="M4627 3018l-409-100l-310-79l-234-65l-169-53l-121-47l-51-24l-39-22l-31-22l-26-24l-20-26l-13-25l-7-22l-4-24l1-49l13-60l24-74l35-84l50-101l65-123l86-152l159-274l43-66l45-61l52-59l54-51l54-38l51-26l46-13l43-6l43 3l45 10l45 19l43 26l45 35l45 43l43 49l46 60l45 68l45 76l45 85l45 93l43 97l46 109l66 176l69 202l24 73l6 27l2 33l-2 37l-5 38l-9 36l-11 32l-143 327zM2277 3651l-82-304l-77-263l-78-239l-77-214l-78-190l-77-165l-78-141l-38-61l-40-56l95 120l94 105l94 91l94 77l87 58l86 47l66 27l175 63l57 24l46 23l39 25l33 28l24 28l16 30l7 25l4 27l-1 30l-4 33l-21 75l-37 94l-50 105l-71 134l-89 160z"/>
<path fill="#24ff00" d="M4631 3010l-413-102l-298-78l-228-64l-167-54l-124-49l-46-22l-41-24l-34-25l-25-24l-20-26l-13-26l-7-22l-4-23l0-49l10-59l22-70l31-79l46-97l61-118l77-140l164-284l43-67l45-62l54-62l54-51l54-39l51-26l43-14l45-6l43 2l46 10l45 19l45 27l43 33l45 43l43 49l45 59l44 64l45 76l43 80l45 91l45 101l45 108l67 175l69 201l28 86l6 27l2 33l-2 37l-5 38l-9 36l-11 32l-72 167zM2274 3641l-83-309l-78-262l-77-237l-76-208l-77-189l-77-164l-78-140l-39-61l-37-53l92 116l91 103l94 92l91 75l85 58l85 48l65 28l172 64l56 25l44 23l39 25l32 28l26 30l16 31l7 25l4 29l0 31l-4 32l-8 36l-12 42l-38 97l-49 105l-65 126l-86 155z"/>
<path fill="#2cff00" d="M4635 3001l-401-100l-293-77l-222-64l-171-55l-122-49l-50-24l-41-25l-33-24l-28-26l-20-26l-15-28l-7-22l-5-23l-1-52l10-59l20-69l31-79l42-93l58-114l73-135l160-279l45-70l45-62l54-62l54-51l54-39l51-26l43-14l43-6l43 2l45 10l44 17l45 26l43 32l45 43l43 48l45 58l43 64l45 74l46 83l43 87l43 95l45 107l69 180l69 198l32 100l6 27l2 33l-2 37l-5 38l-9 36l-11 32zM2272 3631l-83-307l-78-261l-75-230l-78-213l-75-184l-77-164l-78-140l-39-61l-37-53l89 113l91 103l91 89l88 74l85 60l85 48l65 29l168 65l55 25l43 24l41 28l31 28l24 31l16 31l7 24l4 30l0 30l-4 36l-19 78l-35 93l-48 104l-66 129l-83 151z"/>
<path fill="#34ff00" d="M4639 2992l-390-98l-287-76l-221-64l-174-57l-125-51l-49-25l-40-24l-33-25l-28-26l-22-29l-15-28l-12-45l-2-48l8-58l18-69l29-78l39-88l54-110l70-131l156-277l46-71l47-65l54-63l54-51l53-39l52-27l43-14l43-6l43 1l45 9l43 17l43 24l43 32l46 41l43 47l43 55l43 63l45 73l43 78l43 85l43 93l45 106l69 177l71 203l39 119l6 27l2 33l-2 37l-5 38l-9 36l-11 32zM2269 3621l-83-305l-75-253l-75-230l-78-213l-75-184l-77-164l-78-140l-39-61l-37-53l89 113l88 100l88 87l88 74l85 61l82 47l68 32l159 62l53 26l43 24l40 28l31 28l24 31l17 33l8 25l4 29l1 31l-3 35l-18 77l-35 96l-46 103l-63 126l-81 150z"/>
<path fill="#3cff00" d="M4644 2983l-385-97l-291-78l-215-63l-167-57l-68-26l-60-27l-48-24l-41-25l-35-27l-27-26l-22-29l-14-28l-13-45l-3-51l8-58l17-68l28-78l38-88l51-105l64-123l152-271l45-71l48-66l54-63l53-52l54-40l52-27l43-15l43-6l43 1l43 8l43 16l43 23l43 31l43 39l43 46l43 53l43 62l43 68l43 77l43 84l43 91l46 104l71 181l71 201l45 138l6 27l2 33l-2 37l-5 38l-9 36l-11 32zM2266 3611l-82-302l-75-253l-77-236l-76-206l-77-188l-76-159l-75-135l-39-61l-37-53l86 110l88 99l88 88l85 73l85 61l82 48l64 31l157 64l49 24l42 24l40 28l33 30l24 31l17 34l8 27l5 29l0 31l-2 35l-17 77l-32 92l-45 103l-62 124l-80 150z"/>
<path fill="#44ff00" d="M4648 2974l-375-95l-289-78l-218-65l-166-57l-123-52l-48-25l-43-27l-35-26l-27-27l-22-29l-17-30l-13-44l-3-51l6-58l17-68l26-77l37-88l48-101l63-122l145-262l47-74l48-66l54-63l53-52l54-40l52-27l41-14l43-7l43 0l43 8l43 16l43 23l43 30l43 39l41 43l43 53l43 60l43 68l43 76l43 83l43 91l43 98l71 178l73 206l50 151l6 27l2 33l-2 37l-5 38l-9 36l-11 32zM2264 3601l-84-307l-75-252l-76-228l-75-205l-75-183l-76-159l-75-135l-39-61l-37-53l83 106l85 97l85 85l85 74l84 63l82 49l65 32l154 64l49 25l41 25l39 28l32 31l24 31l17 33l9 28l4 28l1 34l-2 35l-16 76l-33 95l-44 103l-58 120l-79 150z"/>
<path fill="#4cff00" d="M4652 2965l-369-94l-283-78l-213-63l-170-59l-66-27l-59-27l-48-25l-42-27l-35-27l-29-29l-22-28l-16-31l-14-44l-4-51l6-57l15-67l24-74l35-87l47-100l60-118l138-252l47-76l50-69l53-64l54-52l54-41l52-27l41-14l43-8l41 0l43 7l40 14l43 22l44 29l43 37l43 45l43 52l41 57l43 67l40 70l44 82l43 89l43 97l73 181l73 204l56 170l6 27l2 33l-2 37l-5 38l-9 36l-11 32zM2261 3591l-81-297l-75-252l-76-228l-75-205l-75-183l-76-159l-75-135l-39-61l-37-53l83 106l82 94l85 85l82 72l81 62l82 50l68 34l149 64l48 25l40 25l39 29l31 30l25 34l17 34l8 27l5 29l1 34l-2 34l-16 77l-31 94l-41 99l-58 120l-73 141z"/>
<path fill="#54ff00" d="M4656 2956l-372-96l-273-75l-212-64l-168-60l-66-27l-59-27l-50-27l-39-25l-35-27l-29-29l-23-31l-17-31l-14-46l-4-51l5-57l14-64l23-73l34-87l46-100l57-113l131-243l49-79l50-69l51-62l54-52l54-41l52-28l40-15l41-8l41 0l43 6l43 14l41 20l41 27l43 36l41 41l43 51l43 58l41 63l41 69l43 80l41 83l43 95l73 178l75 207l65 195l6 27l2 33l-2 37l-5 38l-9 36l-11 32zM2258 3580l-80-294l-75-251l-76-227l-75-205l-75-181l-76-159l-75-135l-37-57l-37-53l82 104l80 93l82 83l82 72l81 63l82 51l64 33l145 63l47 25l40 25l41 31l31 31l25 34l16 34l9 27l5 29l1 33l-2 35l-6 39l-9 40l-29 91l-42 101l-54 116l-73 141z"/>
<path fill="#5cff00" d="M4660 2947l-362-94l-272-75l-210-65l-164-58l-66-27l-58-27l-51-27l-42-27l-38-29l-29-29l-24-31l-16-30l-15-47l-5-50l3-57l14-66l22-73l32-83l42-96l56-113l127-239l48-77l50-69l53-65l54-52l54-41l52-28l40-15l41-8l41 0l43 6l41 13l41 20l41 27l43 35l41 41l41 48l41 54l43 65l43 72l41 75l40 83l44 94l60 144l60 159l73 214l24 73l6 27l2 33l-2 37l-5 38l-9 36l-36 91zM2256 3570l-80-291l-76-250l-73-221l-75-205l-75-181l-76-159l-75-135l-37-57l-37-53l80 102l79 91l82 84l78 70l82 63l79 51l67 35l140 63l47 25l39 25l40 31l31 32l24 34l17 33l8 28l6 31l2 30l-2 35l-5 39l-9 40l-27 90l-41 101l-54 116l-71 140z"/>
<path fill="#64ff00" d="M4664 2938l-356-93l-266-74l-215-66l-162-59l-66-27l-61-29l-50-28l-42-27l-36-29l-29-29l-24-31l-16-31l-16-46l-5-50l3-56l12-67l21-72l31-82l42-96l52-109l126-238l47-75l48-66l51-62l54-54l54-41l51-28l41-15l41-8l41-2l41 6l41 12l41 20l41 26l43 34l41 41l40 46l41 54l41 61l41 67l41 74l41 81l43 92l62 148l63 164l73 212l28 86l6 27l2 33l-2 37l-5 38l-9 36l-32 83zM2253 3560l-82-296l-73-242l-73-220l-75-204l-73-176l-76-159l-75-135l-37-57l-37-53l77 99l79 91l79 81l78 71l80 63l81 52l64 35l139 64l46 25l38 25l40 32l30 31l24 34l17 34l9 27l6 32l2 33l-2 34l-5 39l-8 40l-28 93l-39 98l-53 115l-66 132z"/>
<path fill="#6cff00" d="M4668 2929l-350-92l-265-74l-210-66l-165-60l-65-28l-61-29l-50-27l-41-27l-37-30l-29-29l-24-31l-18-33l-15-46l-7-50l3-56l11-66l21-72l30-82l39-91l51-109l124-236l44-71l45-64l52-62l54-54l54-41l51-29l41-16l41-8l41-2l41 6l41 12l41 19l40 25l41 33l41 39l41 46l41 53l41 60l41 66l41 74l81 167l65 151l65 169l75 218l28 86l6 27l2 33l-2 37l-5 38l-9 36l-29 74zM2250 3550l-79-286l-75-249l-75-226l-73-197l-76-180l-73-153l-73-131l-37-57l-37-53l77 99l76 87l79 82l75 69l79 62l79 53l67 37l134 63l43 24l38 25l39 32l31 31l24 34l18 36l10 30l6 32l2 33l-1 34l-13 79l-27 89l-37 97l-52 115l-66 132z"/>
<path fill="#74ff00" d="M4672 2921l-345-92l-268-76l-208-66l-161-59l-64-28l-61-29l-49-28l-44-29l-36-29l-29-29l-24-31l-18-34l-15-46l-7-50l2-55l11-66l19-72l29-81l38-92l51-108l119-231l44-69l43-61l52-62l54-54l54-41l51-29l41-16l39-8l41-2l41 5l38 11l41 18l41 25l41 32l41 39l41 45l41 52l41 59l38 62l41 73l41 79l41 86l65 149l66 173l76 216l32 100l6 27l2 33l-2 37l-5 38l-9 36l-25 66zM2248 3540l-79-284l-73-241l-75-226l-73-197l-76-180l-73-153l-73-131l-37-57l-37-53l74 95l76 88l76 79l75 70l79 63l79 53l66 37l131 63l42 25l38 25l39 32l30 31l24 34l18 36l9 27l7 32l2 33l0 34l-12 78l-25 89l-36 97l-50 114l-65 132z"/>
<path fill="#7cff00" d="M4676 2912l-339-90l-263-76l-203-65l-164-60l-69-30l-56-28l-49-27l-45-29l-36-30l-32-31l-23-31l-19-33l-16-46l-8-52l1-56l10-62l18-71l27-78l37-91l47-103l121-237l41-65l41-58l52-63l54-54l53-42l52-29l41-16l39-8l38-3l41 4l41 11l41 18l41 25l39 29l41 38l38 42l41 51l41 58l39 62l41 71l41 78l41 85l66 153l67 171l77 222l35 106l6 27l2 33l-2 37l-5 38l-9 36l-22 58zM2245 3529l-80-287l-73-241l-73-218l-74-196l-73-175l-73-153l-73-131l-37-57l-37-53l74 95l73 85l75 79l73 68l79 64l79 53l64 37l129 64l42 24l37 26l39 32l30 31l24 34l18 36l9 28l6 31l3 32l0 34l-11 78l-24 89l-35 96l-47 110l-64 132z"/>
<path fill="#83ff00" d="M4680 2903l-333-89l-258-75l-211-68l-159-59l-68-30l-56-28l-49-27l-45-30l-36-29l-31-31l-26-34l-18-32l-17-46l-8-53l1-55l9-62l17-71l26-77l36-91l45-100l54-109l65-126l38-60l39-55l52-63l54-55l53-43l52-29l39-16l41-9l38-3l41 4l41 11l39 16l41 24l38 29l39 35l41 43l39 48l41 57l38 60l41 70l80 156l69 156l69 176l79 226l37 113l6 27l2 33l-2 37l-5 38l-9 36l-18 49zM2242 3519l-79-285l-73-239l-74-218l-73-196l-73-174l-73-152l-73-130l-72-107l72 92l72 84l72 77l73 68l79 65l76 53l67 39l127 64l40 24l37 26l37 31l30 32l24 34l18 36l10 30l6 32l3 32l0 34l-10 78l-25 92l-33 92l-47 110l-61 128z"/>
<path fill="#8bff00" d="M4684 2894l-328-88l-257-75l-206-67l-162-61l-68-30l-56-28l-52-30l-43-29l-36-29l-31-32l-26-33l-18-33l-17-46l-8-52l0-55l8-62l17-71l25-77l35-90l45-100l52-109l62-120l38-59l39-55l52-63l54-54l51-41l52-29l39-16l38-9l39-3l41 4l39 9l41 17l38 22l41 30l39 35l39 40l41 50l38 54l39 59l41 69l80 155l69 155l71 180l79 226l39 119l6 27l2 33l-2 37l-5 38l-9 36l-14 41zM2240 3509l-77-275l-73-239l-74-218l-73-196l-73-174l-73-152l-73-130l-72-107l71 91l71 83l70 75l71 67l79 65l76 54l66 39l123 63l41 25l36 26l38 32l31 34l23 34l18 37l10 30l6 31l3 33l0 34l-10 77l-23 89l-33 92l-46 110l-58 123z"/>
<path fill="#93ff00" d="M4688 2885l-318-86l-256-75l-205-67l-163-61l-67-30l-56-28l-52-30l-44-29l-38-32l-32-31l-25-33l-19-33l-17-46l-9-52l-1-54l7-62l16-70l24-77l33-86l43-99l52-109l62-123l72-106l52-63l54-55l51-41l52-30l39-16l38-9l39-4l39 3l38 9l39 15l41 22l39 28l39 33l38 40l39 46l39 52l39 58l40 68l78 148l73 162l73 183l82 232l41 125l6 27l2 33l-2 37l-5 38l-9 36l-11 32l-90 208zM2237 3499l-79-279l-73-239l-73-216l-71-189l-71-169l-73-152l-73-130l-72-107l71 91l70 82l69 74l70 66l76 64l76 54l63 38l126 66l73 50l37 32l29 32l26 36l17 36l10 31l6 31l3 33l1 33l-10 77l-22 89l-32 91l-45 110l-57 123z"/>
<path fill="#9bff00" d="M4691 2876l-325-89l-247-72l-204-68l-157-60l-67-30l-56-28l-51-30l-44-29l-39-32l-31-31l-26-33l-19-33l-18-45l-10-52l-1-54l6-61l15-70l23-77l32-85l40-95l51-109l63-125l67-99l52-64l53-55l52-42l52-30l38-16l39-10l39-4l39 3l38 8l39 15l39 20l39 27l38 33l39 39l39 46l38 51l39 58l39 63l77 146l74 160l75 187l82 230l45 138l6 27l2 33l-2 37l-5 38l-9 36l-11 32zM2234 3488l-78-276l-71-231l-73-216l-71-189l-71-169l-73-152l-73-130l-72-107l68 87l70 83l69 74l67 64l76 64l76 55l63 39l123 66l72 49l37 32l29 32l25 37l17 36l10 30l7 31l3 33l1 34l-9 77l-20 84l-32 95l-43 105l-57 123z"/>
<path fill="#a3ff00" d="M4695 2867l-320-87l-246-74l-199-66l-160-62l-67-30l-59-30l-51-30l-43-29l-39-32l-31-31l-25-33l-20-33l-17-46l-11-51l-2-55l6-60l13-67l23-75l30-86l40-95l50-108l62-124l62-91l51-64l54-56l52-42l52-31l38-17l37-9l39-5l38 2l39 8l39 14l38 20l39 26l39 32l39 39l38 44l39 51l39 57l39 63l75 140l75 163l76 186l84 234l47 145l6 27l2 33l-2 37l-5 38l-9 36l-11 32zM2231 3478l-77-273l-71-230l-73-216l-71-189l-73-172l-71-147l-71-126l-72-107l68 87l67 79l66 72l67 64l76 65l75 56l65 40l119 65l71 49l37 33l28 32l25 36l18 37l10 30l7 31l3 32l1 34l-8 77l-21 87l-30 91l-42 105l-54 119z"/>
<path fill="#abff00" d="M4699 2858l-315-86l-245-74l-202-67l-156-61l-66-31l-59-30l-51-30l-43-29l-39-32l-31-31l-26-33l-20-35l-18-46l-11-51l-2-58l6-60l13-66l22-76l29-82l39-94l49-108l59-119l59-87l51-64l54-56l52-42l52-31l38-17l37-9l39-5l38 2l37 7l39 14l38 20l39 25l39 32l39 39l38 44l37 47l39 56l36 59l78 142l77 167l75 185l87 240l47 145l6 27l2 33l-2 37l-5 38l-9 36l-11 32zM2228 3468l-78-278l-71-229l-71-208l-71-188l-71-167l-71-147l-71-126l-72-107l65 84l67 79l66 72l67 65l73 62l75 57l64 40l117 65l71 49l36 33l28 32l25 37l18 36l10 30l7 31l4 66l-7 77l-20 87l-29 91l-42 105l-53 118z"/>
<path fill="#b3ff00" d="M4703 2850l-314-87l-248-75l-198-67l-154-62l-66-30l-58-30l-51-30l-43-30l-38-32l-31-31l-26-33l-19-33l-18-45l-12-51l-3-54l5-60l12-66l20-76l28-81l38-94l48-107l59-121l55-80l51-65l54-56l52-42l51-32l37-16l39-11l36-5l39 2l37 6l38 13l39 19l39 25l36 30l39 37l39 43l36 46l39 55l39 62l75 136l78 165l79 194l86 240l50 151l6 27l2 33l-2 37l-5 38l-9 36l-11 32zM2226 3457l-76-267l-71-229l-71-208l-71-188l-71-167l-71-147l-71-126l-72-107l65 84l64 75l63 69l67 66l74 64l74 57l64 40l115 66l69 49l36 32l28 33l25 36l18 37l10 30l7 31l5 65l-7 77l-18 83l-28 91l-41 104l-52 118z"/>
<path fill="#bbff00" d="M4707 2841l-309-86l-243-74l-193-66l-158-63l-66-30l-58-30l-51-30l-43-30l-39-31l-31-32l-26-33l-22-35l-19-45l-12-50l-4-54l4-60l11-65l20-75l27-81l35-90l48-107l59-124l49-72l52-66l52-54l54-45l51-32l39-17l37-10l36-5l39 0l36 7l39 12l37 18l38 24l37 29l39 36l36 40l39 49l37 51l38 60l76 135l79 167l80 193l88 245l52 157l6 27l2 33l-2 37l-5 38l-9 36l-11 32zM2223 3447l-77-271l-69-221l-71-208l-71-187l-71-167l-71-146l-71-126l-70-103l65 84l64 75l63 69l64 63l73 64l72 55l64 42l114 65l67 49l35 33l29 32l23 34l19 39l10 30l7 31l6 65l-7 77l-18 86l-28 91l-38 100l-50 114z"/>
<path fill="#c3ff00" d="M4711 2832l-303-85l-243-74l-196-67l-158-64l-62-28l-58-31l-53-32l-43-30l-38-31l-32-32l-26-33l-21-35l-19-45l-12-50l-4-54l3-59l10-66l18-71l27-81l34-90l47-106l58-122l44-65l52-66l52-55l53-45l52-33l37-16l36-12l37-5l39 0l36 6l39 11l36 17l39 24l37 28l36 34l37 39l39 47l36 50l39 60l75 132l82 170l82 198l88 243l54 164l6 27l2 33l-2 37l-5 38l-9 36l-11 32zM2220 3437l-77-268l-71-227l-68-201l-71-187l-69-161l-71-146l-71-126l-70-103l62 80l64 76l63 69l61 60l72 65l73 56l64 42l111 65l67 49l35 33l28 32l24 37l18 36l10 30l8 31l4 32l1 37l-6 76l-17 83l-26 87l-37 100l-49 113z"/>
<path fill="#cbff00" d="M4715 2823l-298-84l-242-74l-196-68l-153-61l-120-59l-51-31l-46-31l-39-32l-33-33l-27-33l-21-35l-20-45l-12-50l-5-54l2-59l10-65l17-71l25-80l34-90l46-106l57-121l41-60l52-66l52-55l53-45l52-33l37-16l36-12l37-5l39 0l36 6l37 11l38 17l37 23l37 27l36 34l37 38l39 47l36 50l37 56l75 131l82 169l84 201l90 249l54 164l6 27l2 33l-2 37l-5 38l-9 36l-11 32zM2217 3426l-74-257l-71-227l-68-201l-71-187l-69-161l-71-146l-71-126l-70-103l62 80l60 72l64 70l61 61l72 64l70 55l64 42l109 65l66 49l35 33l28 32l24 37l18 36l10 30l7 31l6 66l-5 75l-16 83l-25 86l-37 100l-48 114z"/>
<path fill="#d3ff00" d="M4719 2814l-302-85l-233-72l-190-66l-157-64l-66-30l-57-31l-51-30l-45-32l-39-32l-33-33l-26-33l-22-35l-19-45l-13-50l-5-53l2-60l9-64l17-71l24-80l32-86l45-106l56-119l36-53l52-66l51-56l54-46l52-33l36-17l37-11l37-6l36 0l37 5l36 10l39 17l37 22l36 27l37 33l36 38l37 43l37 49l36 55l76 129l40 80l43 91l84 200l91 248l58 176l6 27l2 33l-2 37l-5 38l-9 36l-11 32zM2214 3416l-75-262l-69-219l-71-206l-69-180l-68-161l-72-145l-68-122l-70-103l59 76l60 73l61 67l61 61l72 65l70 55l64 44l107 64l65 49l35 33l27 32l25 37l17 37l11 29l7 31l5 32l2 37l-5 75l-16 83l-25 86l-35 96l-46 110z"/>
<path fill="#dbff00" d="M4722 2805l-296-84l-232-72l-190-66l-157-64l-65-31l-57-30l-50-31l-46-31l-38-32l-34-33l-26-33l-22-35l-20-45l-14-50l-6-53l2-59l8-65l16-70l23-76l31-86l44-105l56-121l31-46l52-67l51-56l54-46l52-34l36-17l37-12l36-6l37-1l37 5l36 10l37 16l36 21l37 26l37 32l36 38l37 43l36 48l37 54l73 124l41 79l43 90l86 203l45 119l48 133l60 183l6 27l2 33l-2 37l-5 38l-9 36l-11 32zM2211 3406l-74-259l-71-225l-69-199l-69-179l-69-161l-69-140l-68-122l-70-103l59 76l60 73l61 67l58 58l69 63l70 56l64 44l107 66l62 47l35 33l27 33l24 36l18 37l11 30l7 30l7 65l-4 76l-15 82l-24 86l-34 96l-45 109z"/>
<path fill="#e3ff00" d="M4726 2797l-296-85l-231-72l-189-67l-152-63l-65-30l-57-31l-50-30l-46-32l-38-32l-34-33l-27-33l-22-34l-20-45l-14-50l-7-53l1-58l7-61l15-70l22-76l30-85l38-94l48-108l12-27l25-35l51-68l54-59l54-47l52-33l36-18l35-11l36-7l37-2l36 4l37 10l37 15l36 20l37 26l36 31l35 35l36 42l37 47l36 53l74 122l41 78l40 84l84 195l82 218l82 244l7 44l-1 53l-5 38l-9 36l-11 32zM2209 3395l-74-255l-69-218l-69-199l-69-179l-69-161l-69-140l-68-122l-70-103l59 76l57 69l58 64l58 60l69 63l70 56l64 45l105 65l62 48l34 33l27 33l23 34l19 39l10 30l8 30l7 65l-3 72l-14 82l-23 86l-33 95l-44 109z"/>
<path fill="#ebff00" d="M4730 2788l-291-84l-230-72l-189-67l-155-64l-65-31l-57-31l-49-30l-46-32l-38-32l-33-34l-27-33l-22-34l-21-47l-13-48l-7-52l0-59l7-61l14-70l22-75l29-85l36-90l44-100l15-33l22-31l51-68l54-59l54-47l52-33l36-18l35-11l36-7l37-2l34 4l37 9l36 15l37 20l34 24l37 30l37 37l36 41l35 44l36 52l73 121l41 77l41 84l84 193l84 222l84 251l7 44l-1 53l-5 38l-9 36l-11 32zM2206 3385l-75-259l-67-211l-69-198l-69-179l-69-159l-69-141l-69-120l-67-100l56 72l57 70l58 64l58 59l69 64l70 57l61 43l103 65l61 48l34 33l27 32l24 37l18 37l11 30l7 30l8 68l-3 72l-14 82l-23 86l-33 95l-42 105z"/>
<path fill="#f3ff00" d="M4734 2779l-286-83l-230-72l-184-66l-155-64l-65-31l-57-31l-53-32l-42-30l-39-31l-33-34l-29-35l-23-34l-20-45l-15-49l-8-53l0-58l6-61l13-66l20-75l27-81l67-163l29-66l14-20l52-69l54-59l54-48l53-36l37-18l34-12l37-7l34-2l35 3l36 9l37 14l37 19l36 25l37 30l36 36l35 39l34 43l37 52l71 116l41 76l43 87l43 95l43 102l84 221l86 257l7 44l-1 53l-5 38l-9 36l-11 32zM2203 3375l-75-256l-69-217l-68-197l-67-172l-67-154l-69-141l-69-120l-67-100l56 72l57 70l58 64l55 56l67 63l69 56l61 44l101 65l61 47l33 34l28 32l22 35l19 39l19 60l7 65l-2 71l-13 82l-22 85l-31 92l-41 104z"/>
<path fill="#fbff00" d="M4738 2770l-285-83l-225-71l-184-66l-155-64l-64-31l-57-31l-50-30l-45-32l-39-32l-34-33l-29-35l-22-34l-22-45l-15-49l-8-52l-1-55l5-64l12-66l19-71l26-81l52-133l43-97l7-10l52-69l54-61l53-49l54-37l37-18l34-13l35-7l36-3l35 3l36 7l37 14l34 17l35 23l36 29l35 32l36 40l35 42l36 50l71 114l43 78l45 91l44 94l43 101l86 226l88 263l6 27l2 33l-2 37l-5 38l-9 36l-11 32zM2200 3364l-74-252l-67-210l-68-197l-67-172l-67-154l-69-141l-69-120l-67-100l65 84l67 79l66 72l64 62l51 45l52 42l54 39l105 68l38 29l33 31l27 29l24 31l18 30l15 34l19 61l7 65l-2 71l-12 79l-22 84l-30 92l-41 104z"/>
<path fill="#fffb00" d="M4742 2761l-280-81l-225-72l-187-67l-150-63l-65-32l-56-30l-50-31l-46-31l-38-32l-34-33l-30-35l-22-35l-22-44l-16-49l-9-52l-1-54l4-61l11-65l18-71l25-80l41-108l53-124l54-73l53-61l54-49l54-38l37-18l34-13l34-8l35-3l34 2l37 7l34 12l37 18l34 22l35 26l34 32l37 38l36 45l35 46l71 111l43 78l45 89l43 93l45 106l91 236l88 263l6 27l2 33l-2 37l-5 38l-9 36l-11 32zM2197 3354l-73-249l-67-209l-69-196l-66-172l-69-159l-67-135l-67-116l-67-100l65 84l64 75l63 69l67 66l51 46l49 39l54 40l104 68l37 29l33 30l27 30l23 31l20 33l14 31l18 61l8 64l-2 72l-12 81l-21 82l-29 91l-39 100z"/>
<path fill="#fff300" d="M4751 2739l-273-81l-219-71l-182-66l-150-63l-64-32l-60-32l-49-31l-46-32l-38-31l-34-33l-30-35l-23-34l-23-44l-16-49l-10-52l-4-54l3-56l9-65l16-70l22-76l40-110l51-122l50-67l52-58l51-47l52-36l34-18l35-14l34-8l35-4l34 2l34 6l37 11l34 16l35 21l34 26l35 30l34 36l37 43l34 45l69 105l45 80l45 88l46 96l47 110l90 234l93 275l6 27l2 33l-2 37l-5 38l-9 36l-11 32zM2189 3327l-71-243l-67-207l-67-189l-67-171l-66-152l-67-135l-67-116l-65-96l62 80l64 76l63 69l61 60l97 85l54 40l96 65l36 30l31 28l27 30l23 31l20 32l16 34l18 58l9 64l-1 71l-10 78l-19 80l-28 91l-35 96z"/>
<path fill="#ffeb00" d="M4761 2717l-272-82l-213-70l-181-67l-145-62l-120-62l-49-30l-46-32l-41-34l-34-33l-30-35l-24-34l-24-46l-17-46l-10-48l-5-54l1-58l7-61l14-67l19-72l37-109l50-126l49-64l48-52l47-43l47-34l35-19l34-15l35-9l32-4l34 0l35 5l34 9l35 15l34 19l35 24l34 29l34 34l35 39l34 43l67 99l47 80l48 90l47 99l47 108l48 117l47 126l47 136l50 151l6 27l2 33l-2 37l-5 38l-9 36zM2182 3300l-73-244l-65-198l-66-187l-65-164l-67-152l-64-129l-65-112l-65-96l59 76l60 73l61 67l61 61l94 83l51 39l95 67l63 56l27 30l23 31l19 32l16 34l19 58l9 64l0 71l-9 77l-17 77l-25 86l-34 96z"/>
<path fill="#ffe300" d="M4770 2694l-257-78l-212-70l-176-66l-148-63l-120-63l-49-30l-46-32l-42-33l-34-33l-31-35l-24-34l-24-43l-18-45l-13-48l-6-52l-1-55l5-61l10-62l17-71l36-115l49-127l43-55l46-50l45-42l43-31l34-20l33-14l32-11l34-6l33-1l34 4l34 8l35 13l34 18l33 21l34 27l32 30l33 34l34 41l69 97l49 81l50 92l49 101l50 112l49 121l50 132l49 141l50 151l6 27l2 33l-2 37l-5 38l-9 36l-11 32zM2174 3273l-69-231l-65-197l-64-180l-65-163l-65-147l-64-129l-65-112l-65-96l59 76l57 69l58 64l58 59l91 82l50 40l92 66l59 54l27 30l23 32l19 32l16 34l19 58l10 63l1 68l-8 73l-15 76l-23 86l-31 92z"/>
<path fill="#ffdb00" d="M4779 2672l-255-78l-207-70l-175-66l-143-63l-119-62l-49-31l-46-31l-41-34l-35-33l-31-34l-25-34l-24-43l-19-45l-13-47l-8-49l-2-55l3-56l8-62l14-67l34-113l48-131l42-53l41-44l41-38l41-30l34-21l32-15l33-10l32-7l32-2l35 3l34 7l32 11l35 17l32 20l32 24l35 30l32 33l34 40l67 91l45 72l48 85l45 89l47 102l45 106l48 120l92 261l37 113l6 27l2 33l-2 37l-5 38l-9 36zM2166 3246l-70-231l-62-189l-63-173l-64-162l-63-140l-64-129l-65-111l-63-93l56 72l56 68l56 63l54 56l88 81l52 41l85 63l59 55l26 30l23 31l19 33l15 31l19 57l11 64l2 66l-6 73l-14 76l-21 82l-28 87z"/>
<path fill="#ffd300" d="M4787 2649l-244-75l-210-72l-169-65l-143-63l-118-62l-49-31l-46-32l-39-31l-35-33l-32-34l-25-33l-26-43l-19-42l-14-47l-9-48l-4-51l1-56l6-60l12-63l30-116l48-135l38-47l37-39l39-36l36-28l32-20l33-16l32-12l32-7l33-4l32 1l34 6l33 10l32 14l32 18l32 23l35 28l64 67l67 87l41 63l43 72l41 77l43 87l84 193l84 221l69 204l17 53l6 27l2 33l-2 37l-5 38l-9 36zM2158 3219l-68-224l-63-187l-62-171l-63-156l-62-139l-62-124l-63-107l-63-93l107 135l55 61l54 57l85 79l130 102l56 53l26 30l23 31l18 31l16 33l20 57l11 61l3 66l-6 73l-12 72l-19 81l-27 87z"/>
<path fill="#ffcb00" d="M4793 2626l-239-75l-196-67l-169-66l-142-63l-119-62l-49-31l-46-32l-39-31l-36-33l-32-34l-26-33l-26-42l-20-42l-16-46l-10-45l-5-50l-1-52l4-57l9-62l29-118l46-138l32-39l35-37l34-32l35-27l32-22l32-16l33-13l32-8l32-4l32 0l33 4l32 9l32 13l32 17l33 21l32 26l32 30l33 34l66 84l39 57l41 67l77 146l80 175l80 201l58 163l58 176l7 44l-1 53zM2150 3192l-67-217l-62-186l-63-169l-60-149l-62-138l-61-119l-62-107l-61-89l104 131l103 113l82 77l128 103l52 51l26 30l23 32l19 32l15 31l19 55l11 60l4 66l-3 69l-11 71l-17 78l-25 82z"/>
<path fill="#ffc300" d="M4798 2602l-225-71l-195-68l-165-63l-138-62l-118-63l-96-62l-40-31l-36-32l-33-34l-27-33l-26-39l-21-41l-17-43l-13-47l-7-50l-3-51l2-53l7-58l11-59l15-64l45-141l61-68l60-53l33-22l32-17l32-14l32-9l30-5l33-1l32 4l32 7l30 11l33 16l32 20l32 24l33 28l32 33l64 78l37 52l37 58l73 131l73 152l73 175l78 209l75 226l6 27l2 33l-2 37zM2142 3165l-65-210l-61-178l-60-163l-62-153l-60-133l-61-118l-60-103l-61-89l98 124l100 111l79 76l123 101l52 51l25 30l23 32l19 32l15 31l19 55l12 60l4 62l-2 69l-9 68l-16 77l-23 82z"/>
<path fill="#ffbb00" d="M4802 2578l-219-70l-190-66l-163-64l-137-62l-112-59l-96-62l-40-31l-37-33l-33-33l-27-33l-27-39l-22-40l-17-40l-13-44l-9-46l-5-51l0-52l5-54l9-62l14-63l19-72l24-75l53-58l54-48l32-23l32-18l33-14l30-10l32-6l30-2l32 2l33 7l32 10l30 14l32 19l33 23l62 57l65 75l71 103l71 123l69 139l71 163l86 226l88 263l6 27l2 33zM2134 3137l-64-202l-60-176l-60-161l-61-147l-58-127l-60-118l-60-102l-59-86l95 120l97 108l76 74l117 100l50 49l25 30l22 31l18 31l16 33l20 54l12 60l5 63l-2 65l-8 68l-14 69l-20 79z"/>
<path fill="#ffb300" d="M4803 2554l-214-70l-184-65l-159-63l-132-61l-115-61l-92-60l-75-61l-34-33l-27-33l-28-39l-22-37l-19-42l-13-41l-10-46l-6-44l-2-48l2-53l8-64l12-66l18-72l23-78l47-51l45-40l33-23l32-20l32-15l30-10l30-7l33-3l30 1l32 6l32 9l31 13l30 16l32 22l62 54l65 72l67 93l68 115l67 130l67 148l86 217l88 255l24 73l6 27l2 33zM2126 3110l-64-201l-58-168l-61-160l-58-140l-58-126l-58-113l-58-98l-59-86l92 117l94 105l73 72l112 97l47 47l25 31l22 31l34 64l20 54l12 57l6 62l-1 65l-7 64l-13 69l-18 75z"/>
<path fill="#ffab00" d="M4804 2529l-205-67l-179-65l-157-63l-129-59l-111-60l-93-60l-75-60l-32-31l-28-32l-27-36l-23-38l-20-39l-16-43l-11-41l-7-44l-4-47l0-50l5-63l11-69l17-73l23-82l38-41l39-35l32-24l30-19l33-16l30-12l30-7l32-4l32 0l31 4l30 7l32 13l30 15l32 21l30 23l33 28l64 71l65 87l64 104l65 122l65 138l75 183l75 206l67 201l6 27zM2117 3082l-64-199l-56-160l-58-153l-58-139l-58-125l-56-107l-58-99l-57-82l89 113l88 100l70 70l108 95l47 47l45 60l34 64l20 54l13 56l6 59l0 65l-5 63l-11 66l-17 74z"/>
<path fill="#ffa300" d="M4803 2503l-198-66l-174-63l-149-60l-128-59l-107-58l-93-60l-76-61l-32-30l-29-32l-28-36l-24-37l-18-36l-17-40l-12-41l-9-43l-5-44l-2-46l3-65l9-71l16-77l22-81l64-62l32-25l30-20l30-15l32-13l31-8l30-5l30-1l32 4l32 7l30 11l33 16l30 18l30 22l32 28l63 66l62 82l65 102l62 114l65 135l68 162l71 188l91 269zM2108 3054l-64-196l-56-158l-55-146l-56-132l-56-120l-56-107l-56-95l-57-82l86 110l85 96l67 68l104 94l43 45l46 60l34 63l19 51l14 57l7 59l1 61l-5 63l-10 65l-15 70z"/>
<path fill="#ff9b00" d="M4798 2477l-200-68l-164-61l-143-59l-120-56l-107-58l-90-58l-76-61l-60-60l-28-36l-23-34l-19-35l-17-37l-14-41l-9-39l-7-41l-3-45l0-61l6-67l12-72l18-78l6-22l49-47l32-26l31-21l32-17l30-13l30-9l30-5l30-2l33 3l30 6l32 10l32 15l30 18l31 21l32 27l62 65l63 80l62 96l65 116l62 129l69 160l69 180l54 153zM2100 3026l-62-187l-54-151l-56-144l-56-132l-56-119l-53-102l-56-94l-55-79l82 104l80 93l64 65l103 95l43 45l44 60l33 62l19 51l13 53l8 56l2 60l-4 60l-8 64l-13 67z"/>
<path fill="#ff9300" d="M4789 2448l-185-63l-159-60l-139-58l-122-58l-103-56l-87-57l-74-58l-60-60l-27-33l-24-34l-19-32l-17-37l-15-37l-10-36l-8-40l-6-41l-2-55l2-56l7-61l11-65l17-73l36-34l32-26l30-21l30-17l30-14l31-9l30-6l30-3l32 2l30 5l30 9l31 13l32 17l30 21l32 26l63 62l62 78l62 94l63 110l64 130l69 158l69 177l52 146zM2091 2998l-62-184l-53-149l-54-137l-54-126l-54-113l-54-102l-53-90l-55-79l77 99l79 91l73 75l91 86l36 38l43 58l33 61l19 48l14 53l8 56l3 60l-2 59l-7 61l-12 66z"/>
<path fill="#ff8b00" d="M4780 2420l-178-62l-154-59l-134-57l-114-55l-99-54l-84-55l-72-56l-62-59l-50-64l-38-66l-27-69l-16-77l-4-45l-1-48l2-50l6-52l9-58l14-65l20-19l33-27l30-22l30-18l30-14l30-11l30-6l30-4l33 1l30 5l30 8l32 13l30 16l30 19l33 25l62 61l63 76l62 93l65 112l62 124l67 151l69 175l51 144zM2082 2970l-57-168l-54-149l-54-136l-53-124l-54-113l-52-97l-54-89l-52-76l74 95l76 88l69 73l89 84l33 36l42 58l34 61l18 48l14 53l9 53l3 57l-1 55l-6 61l-10 62z"/>
<path fill="#ff8300" d="M4771 2392l-167-60l-145-56l-125-54l-115-55l-96-53l-84-54l-72-55l-60-57l-51-61l-38-63l-28-66l-19-69l-9-77l1-86l12-103l13-63l4-4l32-28l30-23l30-18l31-15l30-12l30-7l30-4l32 0l30 3l30 8l33 12l30 15l30 19l32 24l61 57l62 74l65 93l62 107l62 122l69 154l69 173l50 136zM2072 2941l-58-170l-51-140l-52-129l-52-119l-51-107l-52-97l-52-85l-52-76l71 91l71 83l68 73l83 80l33 36l42 58l32 59l19 48l14 50l9 51l5 57l-1 56l-4 57l-9 61z"/>
<path fill="#ff7c00" d="M4761 2363l-160-58l-139-55l-121-52l-110-54l-92-51l-83-55l-72-55l-59-55l-49-58l-38-60l-28-63l-21-69l-11-72l-3-79l7-85l15-91l31-27l31-21l30-19l30-14l30-11l30-7l30-4l30 1l31 4l30 7l30 12l30 15l30 19l30 22l60 56l61 71l62 89l62 105l63 121l67 147l66 164l50 134zM2063 2912l-57-165l-50-133l-51-128l-50-112l-52-107l-49-91l-52-86l-50-72l68 87l70 83l63 68l79 78l31 34l42 58l32 58l18 46l15 50l9 51l5 54l1 52l-4 56l-7 58z"/>
<path fill="#ff7400" d="M4752 2334l-157-58l-134-54l-115-51l-106-52l-91-52l-80-53l-69-53l-58-55l-49-58l-38-60l-30-62l-20-66l-13-72l-3-76l5-81l13-88l58-45l30-17l30-14l30-10l28-6l31-3l30 1l28 4l30 8l30 12l30 15l30 19l30 23l58 54l61 71l62 89l60 101l61 116l64 141l67 163l49 132zM2053 2884l-54-155l-49-131l-50-122l-49-111l-50-102l-49-91l-50-82l-50-72l65 84l64 75l60 66l77 77l33 37l40 56l31 58l19 45l14 47l9 49l6 50l1 52l-2 53l-6 57z"/>
<path fill="#ff6c00" d="M4742 2305l-149-56l-129-53l-111-50l-104-52l-87-50l-80-53l-66-52l-58-55l-47-56l-39-59l-30-62l-21-63l-13-69l-5-74l3-81l11-86l57-41l30-16l28-12l28-9l30-6l28-2l30 2l28 4l30 9l30 12l28 14l58 41l58 54l61 71l58 83l58 96l60 114l65 139l64 156l48 125zM2043 2854l-55-154l-47-124l-49-120l-48-105l-47-96l-50-91l-47-77l-48-69l62 80l60 72l58 64l74 75l30 35l40 55l31 56l17 43l15 46l10 49l6 50l2 48l-1 53l-5 54z"/>
<path fill="#ff6400" d="M4732 2276l-141-54l-123-52l-111-50l-99-52l-87-50l-76-51l-65-52l-56-53l-47-56l-38-56l-30-59l-22-65l-14-69l-7-71l2-77l9-83l57-39l56-25l28-8l28-5l28-1l30 2l28 6l28 8l56 27l56 39l58 54l59 68l58 82l58 96l58 109l64 138l63 149zM2033 2825l-53-149l-47-122l-48-113l-45-99l-47-95l-48-86l-47-77l-46-66l59 76l57 69l154 167l38 53l31 56l18 44l15 45l10 46l7 49l3 48l-1 50z"/>
<path fill="#ff5c00" d="M4722 2246l-137-53l-122-52l-105-49l-95-50l-85-51l-72-50l-63-50l-55-53l-46-53l-37-56l-30-60l-23-62l-14-65l-8-71l0-74l7-79l54-35l56-23l28-7l28-4l28-1l28 3l54 14l55 27l56 40l56 52l56 66l58 81l56 91l59 109l62 131l62 148zM2023 2796l-52-143l-45-115l-45-107l-45-98l-46-90l-47-86l-45-73l-46-66l56 72l54 66l146 161l38 53l31 56l17 39l15 44l10 45l7 47l4 44l1 49z"/>
<path fill="#ff5400" d="M4711 2216l-135-54l-113-49l-101-48l-91-49l-81-49l-72-49l-62-51l-52-50l-46-54l-37-53l-30-59l-23-60l-15-64l-9-68l-2-73l6-76l54-32l53-21l54-9l54 4l54 14l54 27l53 39l56 52l56 66l54 74l56 91l56 103l60 125l63 146zM2012 2766l-95-249l-45-105l-43-93l-45-89l-43-77l-45-73l-44-62l104 131l139 154l37 53l30 54l17 39l14 41l11 42l8 46l6 90z"/>
<path fill="#ff4c00" d="M4700 2186l-129-53l-109-48l-95-46l-90-49l-78-48l-68-48l-59-48l-53-51l-46-53l-36-54l-30-56l-23-59l-16-62l-10-67l-3-69l3-72l52-29l54-19l52-7l54 5l53 16l52 27l54 39l51 49l56 66l54 74l54 87l54 99l60 124l60 139zM2002 2736l-91-234l-43-100l-43-91l-43-85l-43-76l-43-70l-44-62l98 124l133 150l36 51l28 50l17 37l14 41l11 42l8 43l8 86z"/>
<path fill="#ff4400" d="M4689 2156l-124-52l-103-47l-95-47l-82-45l-74-46l-68-48l-59-49l-50-48l-44-51l-37-54l-29-53l-24-59l-17-61l-11-63l-4-66l1-71l52-27l52-16l51-5l52 6l49 16l52 27l52 38l51 49l52 60l54 74l54 86l51 93l58 118l61 137zM1991 2705l-89-224l-84-184l-40-79l-43-76l-41-65l-42-59l92 117l126 143l34 49l28 50l17 37l15 40l11 39l8 43l9 80z"/>
<path fill="#ff3c00" d="M4678 2125l-118-50l-98-46l-87-44l-82-45l-73-47l-64-46l-56-46l-51-49l-44-51l-36-51l-29-53l-24-55l-18-58l-11-63l-6-63l0-69l51-24l49-13l50-4l49 7l50 17l49 27l50 36l51 49l52 60l52 71l51 81l52 93l58 117l58 131zM1979 2674l-87-218l-80-172l-41-78l-39-67l-40-65l-40-56l86 110l119 136l34 49l27 48l31 74l20 79l9 76z"/>
<path fill="#ff3400" d="M4666 2094l-110-48l-94-44l-86-45l-78-44l-69-45l-61-44l-56-47l-48-46l-42-49l-36-50l-29-51l-25-55l-18-55l-12-59l-8-62l-1-68l47-20l50-12l47-1l50 8l49 18l48 26l49 38l47 45l50 57l49 68l50 77l52 91l55 111l59 129zM1967 2643l-82-202l-77-165l-78-141l-38-61l-40-56l82 104l110 128l34 49l27 48l29 69l20 75l11 73z"/>
<path fill="#ff2c00" d="M4654 2062l-107-47l-89-43l-81-43l-73-43l-66-43l-61-45l-53-44l-47-47l-40-46l-35-48l-30-50l-24-53l-18-54l-14-56l-8-62l-3-62l46-18l47-9l48 0l47 9l45 18l48 27l47 36l47 45l48 55l49 66l48 74l49 86l56 109l56 123zM1955 2612l-78-190l-76-159l-75-135l-37-57l-37-53l74 95l105 123l32 47l26 45l29 66l21 72l12 72z"/>
<path fill="#ff2400" d="M4641 2030l-98-44l-85-42l-80-44l-69-41l-62-41l-58-43l-52-45l-46-44l-40-46l-33-46l-29-47l-25-52l-19-54l-14-54l-9-57l-5-59l47-16l45-7l45 2l46 10l45 19l45 27l45 35l45 43l48 55l47 63l47 73l48 82l54 104l53 116zM1943 2580l-77-182l-71-147l-71-126l-72-107l68 87l100 120l30 44l25 42l28 64l22 68l12 66z"/>
<path fill="#ff1c00" d="M4629 1998l-177-86l-73-40l-65-40l-61-41l-55-41l-49-43l-43-42l-39-44l-33-45l-30-48l-24-49l-19-51l-14-50l-11-54l-6-59l45-12l43-5l43 3l45 12l45 19l43 27l43 34l43 41l46 52l45 60l45 69l47 80l41 77l41 84zM1930 2548l-73-169l-69-141l-69-120l-67-100l65 84l90 109l29 41l25 43l27 57l20 63l14 66z"/>
<path fill="#ff1400" d="M4615 1965l-163-81l-72-41l-61-38l-58-39l-51-39l-47-41l-43-42l-38-44l-33-43l-28-45l-24-46l-19-48l-16-49l-11-54l-7-54l42-10l43-3l43 5l41 12l40 18l43 27l41 33l43 41l43 49l46 60l43 65l45 76l79 154zM1916 2515l-70-160l-64-129l-65-112l-65-96l59 76l84 103l29 41l23 40l26 55l20 57l15 62z"/>
<path fill="#ff0c00" d="M4601 1932l-155-80l-122-74l-54-37l-51-40l-44-38l-41-40l-36-42l-31-40l-29-45l-23-43l-21-47l-15-47l-13-50l-8-52l38-8l41 0l41 6l41 12l39 19l41 26l41 33l40 39l41 47l43 56l41 61l43 71l78 146zM1902 2481l-66-148l-61-119l-62-107l-61-89l131 164l27 39l23 41l25 52l21 56l14 53z"/>
<path fill="#ff0400" d="M4586 1898l-143-76l-117-72l-98-74l-44-39l-38-37l-34-40l-31-40l-28-42l-22-41l-20-44l-16-43l-13-48l-10-49l37-5l39 2l39 7l38 13l39 19l39 26l39 31l38 38l41 47l41 53l41 60l39 63l73 137zM1888 2447l-63-136l-58-112l-58-99l-57-82l119 150l47 74l24 47l20 51l15 52z"/>
<path fill="#ff0000" d="M4571 1863l-134-73l-106-67l-94-72l-77-72l-33-37l-29-38l-27-39l-23-41l-20-41l-17-43l-13-44l-10-45l36-3l37 3l36 9l37 14l37 19l36 25l37 30l36 36l37 42l39 49l38 56l39 62l69 125zM1872 2412l-58-123l-54-102l-53-90l-55-79l107 136l45 69l23 46l19 46l15 46z"/>
<path fill="#ff0404" d="M4548 1811l-121-68l-94-63l-82-64l-72-68l-59-70l-47-72l-20-38l-17-40l-25-80l33 1l34 6l32 9l35 15l32 18l35 24l34 29l34 34l35 39l34 43l71 106l65 113zM1849 2361l-52-106l-50-91l-47-77l-48-69l90 116l40 61l21 38l19 42l15 44z"/>
<path fill="#ff0c0c" d="M4543 1802l-116-67l-94-63l-82-64l-69-66l-57-68l-47-71l-36-75l-26-80l32 2l32 5l33 10l34 15l34 20l33 23l32 27l34 34l35 39l34 43l69 102l63 109zM1844 2351l-51-104l-48-86l-47-77l-46-66l89 114l38 59l38 78z"/>
<path fill="#ff1414" d="M4539 1792l-116-67l-90-61l-81-64l-67-64l-57-68l-46-69l-36-75l-26-76l34 2l33 7l32 10l32 15l33 19l32 24l34 29l33 33l34 39l34 43l69 103l58 101zM1840 2342l-52-104l-45-81l-45-73l-46-66l84 108l39 59l37 75z"/>
<path fill="#ff1c1c" d="M4534 1782l-111-65l-90-61l-79-62l-66-64l-55-65l-46-69l-36-72l-26-76l32 3l32 6l32 11l32 15l33 20l32 23l32 28l33 33l66 79l69 102l58 101zM1835 2332l-51-102l-43-77l-45-73l-44-62l83 107l37 56l36 73z"/>
<path fill="#ff2424" d="M4529 1772l-106-62l-87-60l-76-60l-67-64l-56-65l-46-69l-35-69l-26-75l31 3l32 7l30 11l33 16l30 18l32 23l62 58l67 80l67 97l58 100zM1830 2322l-48-96l-43-76l-43-70l-44-62l79 102l36 55l37 72z"/>
<path fill="#ff2c2c" d="M4524 1763l-105-63l-86-60l-73-58l-64-62l-56-65l-44-66l-36-69l-26-72l31 4l30 7l30 11l33 16l30 18l30 22l62 58l65 77l65 93l58 99zM1826 2312l-46-90l-43-76l-43-69l-42-59l77 99l35 54l36 70z"/>
<path fill="#ff3434" d="M4519 1753l-100-61l-83-58l-73-58l-64-62l-54-63l-43-63l-35-67l-28-72l31 4l30 7l30 12l30 15l30 19l30 22l60 56l63 74l64 93l56 94zM1821 2302l-46-88l-40-72l-41-65l-42-59l74 96l34 51l34 67z"/>
<path fill="#ff3c3c" d="M4514 1742l-98-60l-83-58l-70-56l-61-60l-52-60l-44-63l-35-67l-27-69l30 5l30 8l30 12l30 15l58 41l61 57l62 74l62 90l54 90zM1816 2292l-47-90l-39-67l-38-61l-40-56l69 89l34 52l34 64z"/>
<path fill="#ff4444" d="M4509 1732l-97-59l-79-57l-69-56l-59-58l-52-60l-42-61l-35-64l-27-67l29 5l28 8l30 12l28 14l58 41l58 54l61 71l62 89l54 90zM1811 2282l-83-150l-39-61l-37-53l68 88l32 49l33 62z"/>
<path fill="#ff4c4c" d="M4504 1722l-95-59l-76-54l-66-55l-59-58l-50-58l-43-60l-33-62l-27-66l30 6l28 9l55 27l56 40l59 55l60 71l60 86l50 82zM1805 2271l-79-143l-37-57l-37-53l65 84l31 48l32 58z"/>
<path fill="#ff5454" d="M4499 1711l-90-56l-76-54l-63-53l-57-55l-50-58l-41-59l-35-60l-27-65l55 15l56 27l53 39l56 52l59 68l58 82l51 85zM1800 2261l-76-136l-72-107l60 78l31 47l32 58z"/>
<path fill="#ff5c5c" d="M4493 1701l-90-58l-70-50l-63-53l-55-53l-48-56l-41-58l-33-58l-27-63l27 6l28 10l54 28l54 39l54 52l58 68l56 79l47 77zM1794 2250l-75-132l-67-100l59 77l29 44l30 55z"/>
<path fill="#ff6464" d="M4487 1690l-84-55l-70-50l-60-51l-55-53l-46-54l-40-55l-33-58l-28-61l52 16l52 27l54 39l51 49l56 66l56 78l48 76zM1789 2239l-72-125l-65-96l54 71l29 42l29 53z"/>
<path fill="#ff6c6c" d="M4482 1679l-82-54l-66-48l-61-51l-52-51l-46-53l-38-54l-33-55l-27-59l51 17l51 28l50 36l51 49l56 66l54 74l45 72zM1783 2228l-68-117l-63-93l51 67l28 42l29 50z"/>
<path fill="#ff7474" d="M4476 1668l-82-54l-63-47l-57-49l-50-49l-44-51l-39-53l-31-53l-27-56l51 18l50 27l49 38l50 48l53 63l52 71l43 68zM1777 2217l-66-113l-59-86l48 63l28 42l26 45z"/>
<path fill="#ff7c7c" d="M4470 1656l-76-50l-63-47l-54-47l-50-49l-42-49l-37-50l-32-53l-27-54l49 19l48 27l47 36l50 48l51 60l52 71l41 64zM1771 2206l-62-106l-57-82l45 60l27 39l25 42z"/>
<path fill="#ff8383" d="M4463 1645l-72-49l-60-45l-52-45l-47-47l-42-48l-36-48l-33-52l-25-52l47 19l47 28l45 35l48 46l49 57l52 71l38 60zM1764 2194l-60-100l-52-76l67 92l25 42z"/>
<path fill="#ff8b8b" d="M4457 1633l-69-47l-56-43l-52-45l-45-45l-41-46l-36-48l-29-47l-27-51l45 19l45 27l45 36l46 44l49 57l47 65l39 59zM1758 2183l-56-93l-50-72l63 86l22 38z"/>
<path fill="#ff9393" d="M4450 1621l-68-47l-53-42l-49-42l-42-43l-39-44l-34-45l-31-47l-25-47l44 19l43 27l44 35l43 42l45 52l47 63l37 56zM1751 2171l-53-87l-46-66l58 80z"/>
<path fill="#ff9b9b" d="M4443 1609l-64-45l-50-40l-46-40l-42-43l-37-41l-33-43l-29-44l-26-47l42 20l41 26l41 33l40 39l43 49l46 60zM1744 2158l-48-78l-44-62l54 74z"/>
<path fill="#ffa3a3" d="M4435 1596l-108-82l-43-39l-41-40l-36-41l-31-40l-28-42l-24-43l40 20l39 26l41 33l39 39l38 44l37 47l39 56zM1736 2145l-44-71l-40-56l48 65z"/>
<path fill="#ffabab" d="M4427 1583l-100-77l-79-74l-34-39l-30-38l-29-42l-24-40l37 19l37 24l39 32l36 36l41 47l39 50zM1729 2132l-42-64l-35-50l43 59z"/>
<path fill="#ffb3b3" d="M4419 1569l-94-73l-74-70l-61-72l-27-39l-23-39l35 20l34 24l35 28l36 36l35 39l34 43zM1720 2119l-37-58l-31-43l38 53z"/>
<path fill="#ffbbbb" d="M4410 1555l-87-69l-69-66l-57-68l-48-71l32 19l33 23l32 27l34 34l65 77zM1711 2105l-32-50l-27-37l32 44l15 22z"/>
<path fill="#ffc3c3" d="M4401 1540l-80-64l-64-62l-54-63l-45-65l32 20l30 22l63 59l58 68zM1702 2090l-28-41l-22-31z"/>
<path fill="#ffcbcb" d="M4390 1525l-71-59l-57-56l-50-58l-44-60l56 40l56 52l56 66zM1692 2074l-22-31l-18-25z"/>
<path fill="#ffd3d3" d="M4379 1508l-65-55l-52-51l-44-51l-38-52l51 38l52 50l47 54zM1680 2057l-16-23l-12-16z"/>
<path fill="#ffdbdb" d="M4366 1490l-56-49l-43-43l-40-46l-35-45l45 36l46 44l40 46z"/>
<path fill="#ffe3e3" d="M4351 1469l-81-76l-63-75l37 30l36 36l35 39z"/>
<path fill="#ffebeb" d="M4332 1444l-59-57l-46-54l53 51z"/>
<path fill="#fff3f3" d="M4299 1405l-23-24l-17-18z"/>
</g>
<path d="M230.9 377.7L247.4 352.0L260.1 333.0L270.0 318.9L278.1 308.4L281.6 304.4L285.0 300.7L288.3 297.6L291.3 295.1L294.2 293.0L297.4 291.2L300.5 289.8L303.8 288.7L307.4 287.9L311.3 287.3L315.4 287.1L319.8 287.1L324.9 287.3L330.8 287.9L344.8 289.8L362.4 292.9L385.9 297.5L417.1 304.1L457.5 313.0M346.7 183.1L328.4 211.0L308.0 240.4L304.6 245.0L301.4 248.8L298.1 252.0L294.9 254.8L290.7 257.5L288.4 258.7L285.9 259.7L281.0 261.2L275.9 262.0L269.8 262.2L263.1 261.9L255.3 261.0L246.1 259.5M189.8 248.0L128.5 234.6" fill="none" stroke="#0a2a0a" stroke-width="0.9" stroke-dasharray="5 2 1 2"/>
<g font-family="Liberation Sans, sans-serif" font-size="10" fill="#fff"><text transform="matrix(1.627 -0.614 -0.284 1.555 85.5 143.6)" text-anchor="end">10,00</text><text transform="matrix(1.627 -0.614 -0.284 1.555 85.5 186.5)" text-anchor="end">6,00</text><text transform="matrix(1.627 -0.614 -0.284 1.555 85.5 229.4)" text-anchor="end">2,00</text><text transform="matrix(1.627 -0.614 -0.284 1.555 85.5 272.3)" text-anchor="end">-2,00</text><text transform="matrix(1.627 -0.614 -0.284 1.555 85.5 315.2)" text-anchor="end">-6,00</text><text transform="matrix(0.000 -1.460 1.590 -0.600 27.5 278.2)" text-anchor="start">um</text><text transform="matrix(1.636 -0.618 1.139 1.195 89.8 357.0)" text-anchor="end">3,3</text><text transform="matrix(1.636 -0.618 1.139 1.195 125.2 394.3)" text-anchor="end">1,6</text><text transform="matrix(1.636 -0.618 1.139 1.195 160.7 431.6)" text-anchor="end">0,0</text><text transform="matrix(1.636 -0.618 1.139 1.195 196.1 468.9)" text-anchor="end">-1,6</text><text transform="matrix(1.636 -0.618 1.139 1.195 231.5 506.2)" text-anchor="end">-3,3</text><text transform="matrix(1.000 1.050 -1.917 0.724 249.6 509.3)" text-anchor="start">-3,3</text><text transform="matrix(1.000 1.050 -1.917 0.724 308.8 486.9)" text-anchor="start">-1,6</text><text transform="matrix(1.000 1.050 -1.917 0.724 368.1 464.5)" text-anchor="start">0,0</text><text transform="matrix(1.000 1.050 -1.917 0.724 427.4 442.1)" text-anchor="start">1,6</text><text transform="matrix(1.000 1.050 -1.917 0.724 486.6 419.7)" text-anchor="start">3,3</text><text transform="matrix(1.636 -0.618 1.139 1.195 383.5 508.0)" text-anchor="start">x / mm</text><text transform="matrix(1.000 1.050 -1.917 0.724 83.5 435.5)" text-anchor="start">y / mm</text></g>
</svg>
<!-- slider -->
<div class="a" style="left:404px;top:660px;width:183px;height:14px;background:#808080"></div>
<div class="a" style="left:374px;top:658px;width:30px;height:18px;background:#f2f2f2;border:1px solid #fff;border-right-color:#d0d0d0;border-bottom-color:#c0c0c0;box-sizing:border-box"></div>
<div class="a" style="left:389px;top:659px;width:1px;height:16px;background:#b4b4b4"></div>
<div class="k" style="left:389px;top:678px;width:1px;height:4px"></div>
<div class="k" style="left:488px;top:678px;width:1px;height:4px"></div>
<div class="k" style="left:587px;top:678px;width:1px;height:4px"></div>
<div class="lab" style="left:365px;top:684px">Measured</div>
<div class="lab" style="left:453px;top:684px;letter-spacing:-0.15px">Reconstructed</div>
<div class="lab" style="left:562px;top:684px;letter-spacing:-0.2px">Difference</div>
<!-- tabs -->
<div class="k" style="left:200px;top:705px;width:313px;height:2px"></div>
<div class="k" style="left:624px;top:705px;width:153px;height:2px"></div>
<div class="tab" style="left:201px;width:100px"></div>
<div class="tab" style="left:300px;width:105px"></div>
<div class="tab" style="left:404px;width:110px"></div>
<div class="tab" style="left:513px;width:112px;height:20px;top:707px;background:#f0f0f0"></div>
<div class="tab" style="left:624px;width:151px"></div>
<div class="lab" style="left:230px;top:708px">Lineview</div>
<div class="lab" style="left:329px;top:708px">Spot Field</div>
<div class="lab" style="left:432px;top:708px">Beam View</div>
<div class="lab" style="left:544px;top:710px;letter-spacing:-0.08px">Wavefront</div>
<div class="lab" style="left:652px;top:708px;letter-spacing:-0.17px">Zernike Coefficients</div>
<!-- status -->
<div class="a" style="left:202px;top:736px;width:572px;height:37px;background:#fff"></div>
<div class="k" style="left:202px;top:736px;width:572px;height:1px"></div>
<div class="k" style="left:202px;top:736px;width:1px;height:37px"></div>
<svg class="a" style="left:203px;top:737px" width="20" height="18" viewBox="0 0 20 18"><path d="M2.5 9.5 L6.5 15 L16.5 2.5" fill="none" stroke="#1a9a1a" stroke-width="1.8"/></svg>
<div class="a" style="left:223px;top:738px;width:99px;height:16px;border:1px dotted #000;box-sizing:border-box"></div>
<div class="lab" style="left:225px;top:740px">No instrument errors</div>
<div class="a" style="left:756px;top:737px;width:17px;height:36px;background:#f4f4f4"></div>
<div class="k" style="left:771px;top:738px;width:1px;height:8px"></div>
<div class="k" style="left:756px;top:745px;width:16px;height:1px"></div>
<div class="k" style="left:771px;top:764px;width:1px;height:8px"></div>
<div class="k" style="left:756px;top:771px;width:16px;height:1px"></div>

</body></html>
